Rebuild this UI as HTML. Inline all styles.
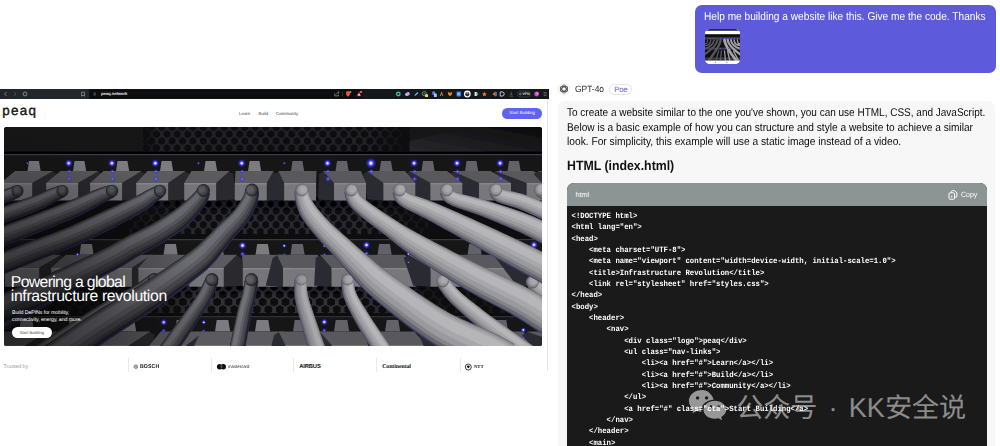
<!DOCTYPE html>
<html lang="en">
<head>
<meta charset="UTF-8">
<title>Chat</title>
<style>
*{box-sizing:border-box;margin:0;padding:0;text-rendering:geometricPrecision}
html,body{width:1000px;height:446px;overflow:hidden;background:#fff}
body{position:relative;font-family:"Liberation Sans","Noto Sans CJK SC",sans-serif;color:#111}
.abs{position:absolute}
.nw{white-space:nowrap}
/* ---------- left: screenshot ---------- */
#shot{left:0;top:89px;width:549px;height:296px;background:#fff;overflow:hidden}
#bar{left:0;top:0;width:548.5px;height:10px;background:#15181b}
#barL{left:0;top:0;width:89px;height:10px;background:#23272b}
#url{left:101px;top:2.2px;font-size:4.2px;color:#e8e8e8;font-weight:bold;letter-spacing:-0.05px}
#logo{left:2.3px;top:14.2px;font-size:13.4px;line-height:16px;letter-spacing:1.3px;color:#111;-webkit-text-stroke:.35px #111}
.nav{top:21.6px;font-size:4.4px;line-height:6px;color:#444}
#cta{left:502.3px;top:19px;width:39.7px;height:10.6px;border-radius:5.3px;background:#6062f0;color:#fff;font-size:4.3px;line-height:10.6px;text-align:center}
#hero{left:3.5px;top:38px;width:538.5px;height:219px;border-radius:2.5px;overflow:hidden;background:#0e0e10}
#hero svg{display:block}
#h1{left:7.3px;top:148.7px;font-size:15.8px;line-height:14.8px;color:#fff;letter-spacing:-0.36px}
#sub{left:8.6px;top:183.1px;font-size:5.3px;line-height:6.7px;color:#fff;letter-spacing:-0.1px}
#hbtn{left:8.1px;top:200px;width:40.6px;height:10.8px;border-radius:5.5px;background:#fff;color:#444;font-size:4.1px;line-height:11px;text-align:center}
#trusted{left:3.4px;top:274.6px;font-size:5.3px;line-height:6px;color:#999}
.div{top:268.5px;width:0.7px;height:14.5px;background:#e9e9e9}
.brand{top:274.7px;font-size:5px;line-height:6.4px;color:#111;font-weight:bold}
#sb{left:547.2px;top:10px;width:0.8px;height:272px;background:#e6e6e6}
/* ---------- right: chat ---------- */
#bubble{left:695px;top:5.3px;width:301px;height:67.9px;border-radius:7px;background:#5d5adb}
#btxt{left:9.4px;top:4.8px;font-size:11.4px;line-height:14px;color:#fff;transform:scaleX(.89);transform-origin:0 0}
#thumb{left:9.6px;top:23.5px;width:35px;height:35px;border-radius:5px;background:#fff;overflow:hidden}
#gpt{left:574.6px;top:81.6px;font-size:9.1px;line-height:15px;color:#222;transform:scaleX(.925);transform-origin:0 0}
#poe{left:609.2px;top:83.5px;width:23.3px;height:11.5px;border-radius:5.75px;border:0.8px solid #e4e4ec;background:#fff;color:#5c5cd0;font-size:7.7px;line-height:9.9px;text-align:center;letter-spacing:-0.25px}
#panel{left:557.5px;top:101px;width:437.5px;height:360px;border-radius:7px;background:#f7f7f7}
#resp{left:9.5px;top:5.1px;font-size:11.25px;line-height:14.4px;color:#0a0a0a}
#h3{left:9.5px;top:56.5px;font-size:13.4px;line-height:16px;font-weight:bold;color:#111;transform:scaleX(.92);transform-origin:0 0}
#code{left:9.5px;top:81.5px;width:419.5px;height:280px;border-radius:7px;background:#1a1a1a;overflow:hidden}
#chead{left:0;top:0;width:100%;height:23.5px;background:#8c9494}
#lang{left:8.5px;top:7px;font-size:7.2px;line-height:9px;color:#fff}
#copy{left:394.2px;top:7.4px;font-size:7.5px;line-height:9px;color:#fff;transform:scaleX(.93);transform-origin:0 0}
#pre{left:4.6px;top:28.4px;font-family:"Liberation Mono",monospace;font-weight:bold;font-size:7.3px;line-height:10.327px;color:#fff;white-space:pre;transform:scaleY(1.1);transform-origin:0 0}
#wm{left:736.2px;top:390.5px;font-size:27.1px;line-height:34px;word-spacing:3.6px;color:rgba(255,255,255,.5);font-family:"Liberation Sans","Noto Sans CJK SC",sans-serif}
</style>
</head>
<body>
<!-- LEFT -->
<div id="shot" class="abs">
  <div id="bar" class="abs"><div id="barL" class="abs"></div>
    <svg class="abs" style="left:0;top:0" width="549" height="10" viewBox="0 0 549 10"><rect x="89.5" y="0.6" width="273" height="8.8" rx="1.5" fill="#0b0d0f"/><path d="M6.4 3.2L4.6 5L6.4 6.8" fill="none" stroke="#9aa0a6" stroke-width=".8"/><path d="M14.2 3.2L16 5L14.2 6.8" fill="none" stroke="#5a6066" stroke-width=".8"/><circle cx="25" cy="5" r="1.9" fill="none" stroke="#9aa0a6" stroke-width=".8"/><path d="M81.6 3.100h2.900v4.100l-1.450-1-1.450 1z" fill="none" stroke="#9aa0a6" stroke-width=".7"/><path d="M93.5 4.100h2.400M93.5 5.900h2.4" stroke="#9aa0a6" stroke-width=".6"/><path d="M334.8 4.300v2.600h3.600v-1.400M336.6 5.200c.3-1.2 1.200-1.8 2.400-1.800M338.2 2.500l1 .9-1 .9" fill="none" stroke="#9aa0a6" stroke-width=".7"/><rect x="342.2" y="3" width=".5" height="4" fill="#555"/><path d="M346 3.200l.8-.9h2.400l.8.900-.3 2.800-1.7 1.700-1.700-1.700z" fill="#fb542b"/><circle cx="350.3" cy="3.1" r="1.1" fill="#8e8e9a"/><path d="M359 2.300l2.7 4.900h-5.400z" fill="#a0205a"/><path d="M359 4.200l1.3 2.300h-2.600z" fill="#fff"/><circle cx="361" cy="2.9" r="1.2" fill="#ff5a2a"/><circle cx="398.3" cy="5" r="2.4" fill="#3fb8a4"/><circle cx="398.3" cy="5" r="1" fill="#15181b"/><ellipse cx="407.4" cy="5.1" rx="2.5" ry="1.8" fill="#b9a7f0" transform="rotate(-20 407.4 5.100)"/><path d="M414.4 6.900l.5-1.5 2.500-2.5 1 1-2.5 2.500z" fill="#35c6f0"/><circle cx="424.3" cy="4.6" r="2.1" fill="none" stroke="#8c978e" stroke-width=".8"/><circle cx="424.3" cy="4.6" r=".8" fill="#2fa84f"/><rect x="425.2" y="5.3" width="2.8" height="2.8" rx=".4" fill="#f1e05a"/><rect x="432.3" y="2.4" width="2.8" height="3.4" rx=".4" fill="#4f8bf0"/><rect x="434" y="4.6" width="2.8" height="3.4" rx=".4" fill="#a8c7fa"/><path d="M439.8 7l1.800-4.4 1.8 4.400-.9 0-.9-2.400-.9 2.400z" fill="#f08a2a"/><path d="M447.8 2.800l2.2 1.3 2.200-1.300-.4 2.800-1.8 1.700-1.800-1.700z" fill="#f6851b"/><rect x="456.5" y="2.6" width="4.6" height="4.8" rx=".8" fill="#2f7df5"/><path d="M458 3.700v2.600M459.9 3.700l-1.5 1.3 1.5 1.3" stroke="#fff" stroke-width=".6" fill="none"/><circle cx="467.3" cy="5" r="3.4" fill="#fff"/><circle cx="467.3" cy="5.2" r="2.1" fill="#2b2f33"/><circle cx="467.3" cy="4.1" r="1" fill="#9aa0a6"/><path d="M474.6 3.100h1.200a1.9 1.9 0 0 1 0 3.800h-1.200z" fill="#e8eaed"/><circle cx="477.3" cy="5" r="1.1" fill="#1fa88a"/><path d="M484.4 2.800l.7 1.5 1.600.2-1.2 1.100.3 1.600-1.400-.8-1.400.8.300-1.600-1.200-1.1 1.600-.2z" fill="#ff7a1a"/><path d="M495.6 2.600v4.800l-3.200-2.400z" fill="#f2662a"/><path d="M495.6 2.600v4.800l1.200-.6v-3.600z" fill="#3b8af0"/><path d="M500.2 2.900h1.900a2.1 2.1 0 0 1 0 4.200h-1.900z" fill="none" stroke="#e8eaed" stroke-width=".8"/><path d="M511.3 2.800v3M510.1 4.800l1.2 1.2 1.200-1.200M509.6 7.200h3.4" fill="none" stroke="#6a7076" stroke-width=".7"/><rect x="517.4" y="2.1" width="12.8" height="5.8" rx="2.9" fill="none" stroke="#4a4f55" stroke-width=".6"/><circle cx="520.3" cy="5" r=".9" fill="none" stroke="#c8ccd0" stroke-width=".5"/><text x="522.2" y="6.3" font-family="Liberation Sans,sans-serif" font-size="3.6" font-weight="bold" fill="#d6d9dc">VPN</text><circle cx="536.6" cy="5" r="2.4" fill="#c04ad8"/><circle cx="537.3" cy="4.5" r="1.2" fill="#ff7ab0"/><path d="M543.6 3.500h3M543.6 5h3M543.6 6.500h3" stroke="#80868c" stroke-width=".6"/></svg>
    <div id="url" class="abs nw">peaq.network</div>
  </div>
  <div id="logo" class="abs nw">peaq</div>
  <div class="abs nav nw" style="left:239px">Learn</div>
  <div class="abs nav nw" style="left:258.5px">Build</div>
  <div class="abs nav nw" style="left:276px">Community</div>
  <div id="cta" class="abs nw">Start Building</div>
  <div id="hero" class="abs">
    <svg width="538.5" height="219" viewBox="3.5 127 538.5 219">
<defs>
<pattern id="hex" width="10.4" height="13.8" patternUnits="userSpaceOnUse" patternTransform="translate(0 134.2)"><rect width="10.4" height="13.8" fill="#242428"/><path d="M3.38 1.95L0.00 3.90L-3.38 1.95L-3.38 -1.95L-0.00 -3.90L3.38 -1.95ZM13.78 1.95L10.40 3.90L7.02 1.95L7.02 -1.95L10.40 -3.90L13.78 -1.95ZM8.58 8.85L5.20 10.80L1.82 8.85L1.82 4.95L5.20 3.00L8.58 4.95ZM3.38 15.75L0.00 17.70L-3.38 15.75L-3.38 11.85L-0.00 9.90L3.38 11.85ZM13.78 15.75L10.40 17.70L7.02 15.75L7.02 11.85L10.40 9.90L13.78 11.85Z" fill="#0a0910"/></pattern>
<pattern id="hexm" width="10.4" height="13.8" patternUnits="userSpaceOnUse" patternTransform="translate(0 204)"><rect width="10.4" height="13.8" fill="#2c2c31"/><path d="M3.38 1.95L0.00 3.90L-3.38 1.95L-3.38 -1.95L-0.00 -3.90L3.38 -1.95ZM13.78 1.95L10.40 3.90L7.02 1.95L7.02 -1.95L10.40 -3.90L13.78 -1.95ZM8.58 8.85L5.20 10.80L1.82 8.85L1.82 4.95L5.20 3.00L8.58 4.95ZM3.38 15.75L0.00 17.70L-3.38 15.75L-3.38 11.85L-0.00 9.90L3.38 11.85ZM13.78 15.75L10.40 17.70L7.02 15.75L7.02 11.85L10.40 9.90L13.78 11.85Z" fill="#08080c"/></pattern>
<pattern id="hex2" width="11.4" height="15" patternUnits="userSpaceOnUse" patternTransform="translate(0 287)"><rect width="11.4" height="15" fill="#303035"/><path d="M3.72 2.15L0.00 4.30L-3.72 2.15L-3.72 -2.15L-0.00 -4.30L3.72 -2.15ZM15.12 2.15L11.40 4.30L7.68 2.15L7.68 -2.15L11.40 -4.30L15.12 -2.15ZM9.42 9.65L5.70 11.80L1.98 9.65L1.98 5.35L5.70 3.20L9.42 5.35ZM3.72 17.15L0.00 19.30L-3.72 17.15L-3.72 12.85L-0.00 10.70L3.72 12.85ZM15.12 17.15L11.40 19.30L7.68 17.15L7.68 12.85L11.40 10.70L15.12 12.85Z" fill="#070709"/></pattern>
<radialGradient id="led"><stop offset="0" stop-color="#fff"/><stop offset=".22" stop-color="#c9c9ff"/><stop offset=".45" stop-color="#4a45ff" stop-opacity=".9"/><stop offset="1" stop-color="#2a20ff" stop-opacity="0"/></radialGradient>
<radialGradient id="ledd"><stop offset="0" stop-color="#99a"/><stop offset=".4" stop-color="#4a45ff" stop-opacity=".7"/><stop offset="1" stop-color="#2a20ff" stop-opacity="0"/></radialGradient>
<linearGradient id="topfade" x1="0" x2="1"><stop offset="0" stop-color="#0d0d0f"/><stop offset=".06" stop-color="#0d0d0f" stop-opacity="0"/><stop offset=".85" stop-color="#0d0d0f" stop-opacity="0.1"/><stop offset="1" stop-color="#0d0d0f"/></linearGradient>
<linearGradient id="tr" x1="0" x2="1" y1="1" y2="0"><stop offset="0" stop-color="#28282c"/><stop offset="1" stop-color="#0b0b0d"/></linearGradient>
<linearGradient id="vsh" x1="0" x2="0" y1="0" y2="1"><stop offset="0" stop-color="#000" stop-opacity=".55"/><stop offset=".5" stop-color="#000" stop-opacity="0"/></linearGradient>
<radialGradient id="lv" gradientUnits="userSpaceOnUse" cx="3" cy="330" r="200"><stop offset="0" stop-color="#000" stop-opacity=".6"/><stop offset=".5" stop-color="#000" stop-opacity=".35"/><stop offset="1" stop-color="#000" stop-opacity="0"/></radialGradient>
<linearGradient id="hsh" x1="0" x2="1"><stop offset="0" stop-color="#08080a" stop-opacity=".95"/><stop offset=".22" stop-color="#08080a" stop-opacity=".8"/><stop offset=".36" stop-color="#08080a" stop-opacity="0"/><stop offset=".66" stop-color="#08080a" stop-opacity="0"/><stop offset=".8" stop-color="#08080a" stop-opacity=".8"/><stop offset="1" stop-color="#08080a" stop-opacity=".95"/></linearGradient>
<filter id="b" x="-5%" y="-5%" width="110%" height="110%"><feGaussianBlur stdDeviation="0.75"/></filter>
</defs>
<g filter="url(#b)">
<rect x="0" y="120" width="550" height="230" fill="#0d0d0f"/>
<rect x="3" y="127" width="540" height="27" fill="#161618"/>
<rect x="143" y="127" width="266" height="25" fill="url(#hex)"/>
<rect x="143" y="127" width="266" height="25" fill="url(#topfade)"/>
<path d="M409 152L409 141L470 127L542 127L542 152Z" fill="url(#tr)"/>
<rect x="3" y="151.5" width="540" height="2.4" fill="#050506"/>
<rect x="3" y="154" width="540" height="1.6" fill="#3c3c42"/>
<rect x="3" y="155.6" width="540" height="45" fill="#121214"/>
<rect x="3" y="197" width="540" height="38" fill="url(#hexm)"/>
<rect x="3" y="197" width="540" height="38" fill="url(#vsh)"/>
<rect x="3" y="197" width="540" height="38" fill="url(#hsh)"/>
<rect x="3" y="234" width="540" height="5" fill="#08080a"/>
<rect x="3" y="239" width="540" height="1.6" fill="#38383e"/>
<rect x="3" y="240.6" width="540" height="42" fill="#131316"/>
<rect x="3" y="279.5" width="540" height="34" fill="url(#hex2)"/>
<rect x="3" y="279.5" width="540" height="34" fill="url(#vsh)"/>
<rect x="3" y="279.5" width="540" height="34" fill="url(#hsh)" opacity=".8"/>
<rect x="3" y="313" width="540" height="3.5" fill="#08080a"/>
<rect x="3" y="316.2" width="540" height="1.4" fill="#38383e"/>
<rect x="3" y="317.6" width="540" height="30" fill="#141417"/>
<path d="M18.5 331.5L20.2 320L31.8 320L33.7 331.5Z" fill="#7b7b80"/><path d="M46.7 331.5L52.5 334.9L47.9 364.4L24.9 365.4L24.9 345.3Z" fill="#29292e"/><path d="M4.2 331.5L47.8 331.5L24.9 345.3L-11.9 345.3Z" fill="#5a5a5f"/><path d="M-11.9 345.3L24.9 345.3L24.9 365.4L-11.9 365.4Z" fill="#747479"/><path d="M-11.9 345.3L24.9 345.3L24.9 346.9L-11.9 346.9Z" fill="#9a9a9e" opacity=".45"/>
<path d="M67.5 331.5L69.2 320L80.8 320L82.7 331.5Z" fill="#7b7b80"/><path d="M95.7 331.5L101.5 334.9L97.3 364.4L74.3 365.4L74.3 345.3Z" fill="#29292e"/><path d="M53.2 331.5L96.8 331.5L74.3 345.3L37.5 345.3Z" fill="#5a5a5f"/><path d="M37.5 345.3L74.3 345.3L74.3 365.4L37.5 365.4Z" fill="#747479"/><path d="M37.5 345.3L74.3 345.3L74.3 346.9L37.5 346.9Z" fill="#9a9a9e" opacity=".45"/>
<path d="M120.5 331.5L122.2 320L133.8 320L135.7 331.5Z" fill="#7b7b80"/><path d="M148.7 331.5L154.4 334.9L151.6 364.4L128.6 365.4L128.6 345.3Z" fill="#29292e"/><path d="M106.2 331.5L149.8 331.5L128.6 345.3L91.8 345.3Z" fill="#5a5a5f"/><path d="M91.8 345.3L128.6 345.3L128.6 365.4L91.8 365.4Z" fill="#747479"/><path d="M91.8 345.3L128.6 345.3L128.6 346.9L91.8 346.9Z" fill="#9a9a9e" opacity=".45"/>
<path d="M174.5 331.5L176.2 320L187.8 320L189.7 331.5Z" fill="#7b7b80"/><path d="M202.7 331.5L208.4 334.9L208.9 364.4L185.9 365.4L185.9 345.3Z" fill="#29292e"/><path d="M160.2 331.5L203.8 331.5L185.9 345.3L149.1 345.3Z" fill="#5a5a5f"/><path d="M149.1 345.3L185.9 345.3L185.9 365.4L149.1 365.4Z" fill="#747479"/><path d="M149.1 345.3L185.9 345.3L185.9 346.9L149.1 346.9Z" fill="#9a9a9e" opacity=".45"/>
<path d="M214.5 331.5L216.2 320L227.8 320L229.7 331.5Z" fill="#7b7b80"/><path d="M242.7 331.5L248.4 334.9L253.8 364.4L230.8 365.4L230.8 345.3Z" fill="#29292e"/><path d="M200.2 331.5L243.8 331.5L230.8 345.3L194 345.3Z" fill="#5a5a5f"/><path d="M194 345.3L230.8 345.3L230.8 365.4L194 365.4Z" fill="#747479"/><path d="M194 345.3L230.8 345.3L230.8 346.9L194 346.9Z" fill="#9a9a9e" opacity=".45"/>
<path d="M254.5 331.5L256.2 320L267.8 320L269.7 331.5Z" fill="#7b7b80"/><path d="M282.7 331.5L288.4 334.9L300.8 364.4L277.8 365.4L277.8 345.3Z" fill="#29292e"/><path d="M240.2 331.5L283.9 331.5L277.8 345.3L241 345.3Z" fill="#5a5a5f"/><path d="M241 345.3L277.8 345.3L277.8 365.4L241 365.4Z" fill="#747479"/><path d="M241 345.3L277.8 345.3L277.8 346.9L241 346.9Z" fill="#9a9a9e" opacity=".45"/>
<path d="M292.5 331.5L294.2 320L305.8 320L307.7 331.5Z" fill="#626267"/><path d="M279.3 331.5L273.6 334.9L266.5 364.4L284.9 365.4L284.9 345.3Z" fill="#2b2b30"/><path d="M278.1 331.5L321.9 331.5L321.7 345.3L284.9 345.3Z" fill="#58585d"/><path d="M284.9 345.3L321.7 345.3L321.7 365.4L284.9 365.4Z" fill="#77777b"/><path d="M284.9 345.3L321.7 345.3L321.7 346.9L284.9 346.9Z" fill="#9a9a9e" opacity=".45"/>
<path d="M333.5 331.5L335.2 320L346.8 320L348.7 331.5Z" fill="#626267"/><path d="M320.3 331.5L314.6 334.9L312.9 364.4L331.3 365.4L331.3 345.3Z" fill="#2b2b30"/><path d="M319.1 331.5L362.9 331.5L368.1 345.3L331.3 345.3Z" fill="#58585d"/><path d="M331.3 345.3L368.1 345.3L368.1 365.4L331.3 365.4Z" fill="#77777b"/><path d="M331.3 345.3L368.1 345.3L368.1 346.9L331.3 346.9Z" fill="#9a9a9e" opacity=".45"/>
<path d="M384.5 331.5L386.2 320L397.8 320L399.7 331.5Z" fill="#626267"/><path d="M371.3 331.5L365.6 334.9L370.6 364.4L389 365.4L389 345.3Z" fill="#2b2b30"/><path d="M370.1 331.5L413.9 331.5L425.8 345.3L389 345.3Z" fill="#58585d"/><path d="M389 345.3L425.8 345.3L425.8 365.4L389 365.4Z" fill="#77777b"/><path d="M389 345.3L425.8 345.3L425.8 346.9L389 346.9Z" fill="#9a9a9e" opacity=".45"/>
<path d="M437.5 331.5L439.2 320L450.8 320L452.7 331.5Z" fill="#626267"/><path d="M424.3 331.5L418.6 334.9L430.6 364.4L449 365.4L449 345.3Z" fill="#2b2b30"/><path d="M423.1 331.5L466.9 331.5L485.8 345.3L449 345.3Z" fill="#58585d"/><path d="M449 345.3L485.8 345.3L485.8 365.4L449 365.4Z" fill="#77777b"/><path d="M449 345.3L485.8 345.3L485.8 346.9L449 346.9Z" fill="#9a9a9e" opacity=".45"/>
<path d="M492.5 331.5L494.2 320L505.8 320L507.7 331.5Z" fill="#626267"/><path d="M479.3 331.5L473.6 334.9L492.9 364.4L511.3 365.4L511.3 345.3Z" fill="#2b2b30"/><path d="M478.1 331.5L521.9 331.5L548.1 345.3L511.3 345.3Z" fill="#58585d"/><path d="M511.3 345.3L548.1 345.3L548.1 365.4L511.3 365.4Z" fill="#77777b"/><path d="M511.3 345.3L548.1 345.3L548.1 346.9L511.3 346.9Z" fill="#9a9a9e" opacity=".45"/>
<path d="M540.5 331.5L542.2 320L553.8 320L555.7 331.5Z" fill="#626267"/><path d="M527.3 331.5L521.5 334.9L547.2 364.4L565.6 365.4L565.6 345.3Z" fill="#2b2b30"/><path d="M526.1 331.5L569.9 331.5L602.4 345.3L565.6 345.3Z" fill="#58585d"/><path d="M565.6 345.3L602.4 345.3L602.4 365.4L565.6 365.4Z" fill="#77777b"/><path d="M565.6 345.3L602.4 345.3L602.4 346.9L565.6 346.9Z" fill="#9a9a9e" opacity=".45"/>
<path d="M33 254.8L34.6 244L45.4 244L47.2 254.8Z" fill="#7b7b80"/><path d="M59.4 254.8L64.8 258L60.3 285.7L38.7 286.7L38.7 267.8Z" fill="#29292e"/><path d="M19.5 254.8L60.5 254.8L38.7 267.8L4.2 267.8Z" fill="#5a5a5f"/><path d="M4.2 267.8L38.7 267.8L38.7 286.7L4.2 286.7Z" fill="#747479"/><path d="M4.2 267.8L38.7 267.8L38.7 269.4L4.2 269.4Z" fill="#9a9a9e" opacity=".45"/>
<path d="M79 254.8L80.6 244L91.4 244L93.2 254.8Z" fill="#7b7b80"/><path d="M105.4 254.8L110.8 258L106.8 285.7L85.2 286.7L85.2 267.8Z" fill="#29292e"/><path d="M65.5 254.8L106.5 254.8L85.2 267.8L50.7 267.8Z" fill="#5a5a5f"/><path d="M50.7 267.8L85.2 267.8L85.2 286.7L50.7 286.7Z" fill="#747479"/><path d="M50.7 267.8L85.2 267.8L85.2 269.4L50.7 269.4Z" fill="#9a9a9e" opacity=".45"/>
<path d="M124 254.8L125.6 244L136.4 244L138.2 254.8Z" fill="#7b7b80"/><path d="M150.4 254.8L155.8 258L153 285.7L131.4 286.7L131.4 267.8Z" fill="#29292e"/><path d="M110.5 254.8L151.5 254.8L131.4 267.8L96.8 267.8Z" fill="#5a5a5f"/><path d="M96.8 267.8L131.4 267.8L131.4 286.7L96.8 286.7Z" fill="#747479"/><path d="M96.8 267.8L131.4 267.8L131.4 269.4L96.8 269.4Z" fill="#9a9a9e" opacity=".45"/>
<path d="M163 254.8L164.6 244L175.4 244L177.2 254.8Z" fill="#7b7b80"/><path d="M189.4 254.8L194.8 258L194.1 285.7L172.5 286.7L172.5 267.8Z" fill="#29292e"/><path d="M149.5 254.8L190.5 254.8L172.5 267.8L137.9 267.8Z" fill="#5a5a5f"/><path d="M137.9 267.8L172.5 267.8L172.5 286.7L137.9 286.7Z" fill="#747479"/><path d="M137.9 267.8L172.5 267.8L172.5 269.4L137.9 269.4Z" fill="#9a9a9e" opacity=".45"/>
<path d="M209 254.8L210.6 244L221.4 244L223.2 254.8Z" fill="#7b7b80"/><path d="M235.4 254.8L240.8 258L244.9 285.7L223.3 286.7L223.3 267.8Z" fill="#29292e"/><path d="M195.5 254.8L236.5 254.8L223.3 267.8L188.7 267.8Z" fill="#5a5a5f"/><path d="M188.7 267.8L223.3 267.8L223.3 286.7L188.7 286.7Z" fill="#747479"/><path d="M188.7 267.8L223.3 267.8L223.3 269.4L188.7 269.4Z" fill="#9a9a9e" opacity=".45"/>
<path d="M255 254.8L256.6 244L267.4 244L269.2 254.8Z" fill="#7b7b80"/><path d="M281.4 254.8L286.8 258L298.4 285.7L276.8 286.7L276.8 267.8Z" fill="#29292e"/><path d="M241.5 254.8L282.5 254.8L276.8 267.8L242.3 267.8Z" fill="#5a5a5f"/><path d="M242.3 267.8L276.8 267.8L276.8 286.7L242.3 286.7Z" fill="#747479"/><path d="M242.3 267.8L276.8 267.8L276.8 269.4L242.3 269.4Z" fill="#9a9a9e" opacity=".45"/>
<path d="M290 254.8L291.6 244L302.4 244L304.2 254.8Z" fill="#626267"/><path d="M277.6 254.8L272.2 258L265.2 285.7L282.5 286.7L282.5 267.8Z" fill="#2b2b30"/><path d="M276.5 254.8L317.5 254.8L317.1 267.8L282.5 267.8Z" fill="#58585d"/><path d="M282.5 267.8L317.1 267.8L317.1 286.7L282.5 286.7Z" fill="#77777b"/><path d="M282.5 267.8L317.1 267.8L317.1 269.4L282.5 269.4Z" fill="#9a9a9e" opacity=".45"/>
<path d="M333 254.8L334.6 244L345.4 244L347.2 254.8Z" fill="#626267"/><path d="M320.6 254.8L315.2 258L313.6 285.7L330.9 286.7L330.9 267.8Z" fill="#2b2b30"/><path d="M319.5 254.8L360.5 254.8L365.5 267.8L330.9 267.8Z" fill="#58585d"/><path d="M330.9 267.8L365.5 267.8L365.5 286.7L330.9 286.7Z" fill="#77777b"/><path d="M330.9 267.8L365.5 267.8L365.5 269.4L330.9 269.4Z" fill="#9a9a9e" opacity=".45"/>
<path d="M377 254.8L378.6 244L389.4 244L391.2 254.8Z" fill="#626267"/><path d="M364.6 254.8L359.2 258L363.2 285.7L380.5 286.7L380.5 267.8Z" fill="#2b2b30"/><path d="M363.5 254.8L404.5 254.8L415 267.8L380.5 267.8Z" fill="#58585d"/><path d="M380.5 267.8L415 267.8L415 286.7L380.5 286.7Z" fill="#77777b"/><path d="M380.5 267.8L415 267.8L415 269.4L380.5 269.4Z" fill="#9a9a9e" opacity=".45"/>
<path d="M421 254.8L422.6 244L433.4 244L435.2 254.8Z" fill="#626267"/><path d="M408.6 254.8L403.2 258L412.7 285.7L430 286.7L430 267.8Z" fill="#2b2b30"/><path d="M407.5 254.8L448.5 254.8L464.6 267.8L430 267.8Z" fill="#58585d"/><path d="M430 267.8L464.6 267.8L464.6 286.7L430 286.7Z" fill="#77777b"/><path d="M430 267.8L464.6 267.8L464.6 269.4L430 269.4Z" fill="#9a9a9e" opacity=".45"/>
<path d="M467 254.8L468.6 244L479.4 244L481.2 254.8Z" fill="#626267"/><path d="M454.6 254.8L449.2 258L464.5 285.7L481.8 286.7L481.8 267.8Z" fill="#2b2b30"/><path d="M453.5 254.8L494.5 254.8L516.4 267.8L481.8 267.8Z" fill="#58585d"/><path d="M481.8 267.8L516.4 267.8L516.4 286.7L481.8 286.7Z" fill="#77777b"/><path d="M481.8 267.8L516.4 267.8L516.4 269.4L481.8 269.4Z" fill="#9a9a9e" opacity=".45"/>
<path d="M513 254.8L514.6 244L525.4 244L527.2 254.8Z" fill="#626267"/><path d="M500.6 254.8L495.2 258L516.3 285.7L533.6 286.7L533.6 267.8Z" fill="#2b2b30"/><path d="M499.5 254.8L540.5 254.8L568.1 267.8L533.6 267.8Z" fill="#58585d"/><path d="M533.6 267.8L568.1 267.8L568.1 286.7L533.6 286.7Z" fill="#77777b"/><path d="M533.6 267.8L568.1 267.8L568.1 269.4L533.6 269.4Z" fill="#9a9a9e" opacity=".45"/>
<path d="M27 171L28.5 161L38.5 161L40.2 171Z" fill="#7b7b80"/><path d="M51.5 171L56.5 174L51.8 199.5L31.8 200.5L31.8 183Z" fill="#29292e"/><path d="M14.5 171L52.5 171L31.8 183L-0.2 183Z" fill="#5a5a5f"/><path d="M-0.2 183L31.8 183L31.8 200.5L-0.2 200.5Z" fill="#747479"/><path d="M-0.2 183L31.8 183L31.8 184.6L-0.2 184.6Z" fill="#9a9a9e" opacity=".45"/>
<path d="M72.5 171L74 161L84 161L85.7 171Z" fill="#7b7b80"/><path d="M97 171L102 174L97.7 199.5L77.7 200.5L77.7 183Z" fill="#29292e"/><path d="M60 171L98 171L77.7 183L45.7 183Z" fill="#5a5a5f"/><path d="M45.7 183L77.7 183L77.7 200.5L45.7 200.5Z" fill="#747479"/><path d="M45.7 183L77.7 183L77.7 184.6L45.7 184.6Z" fill="#9a9a9e" opacity=".45"/>
<path d="M115.5 171L117 161L127 161L128.7 171Z" fill="#7b7b80"/><path d="M140 171L145 174L141.6 199.5L121.6 200.5L121.6 183Z" fill="#29292e"/><path d="M103 171L141 171L121.6 183L89.6 183Z" fill="#5a5a5f"/><path d="M89.6 183L121.6 183L121.6 200.5L89.6 200.5Z" fill="#747479"/><path d="M89.6 183L121.6 183L121.6 184.6L89.6 184.6Z" fill="#9a9a9e" opacity=".45"/>
<path d="M159.5 171L161 161L171 161L172.7 171Z" fill="#7b7b80"/><path d="M184 171L189 174L187.7 199.5L167.7 200.5L167.7 183Z" fill="#29292e"/><path d="M147 171L185 171L167.7 183L135.7 183Z" fill="#5a5a5f"/><path d="M135.7 183L167.7 183L167.7 200.5L135.7 200.5Z" fill="#747479"/><path d="M135.7 183L167.7 183L167.7 184.6L135.7 184.6Z" fill="#9a9a9e" opacity=".45"/>
<path d="M203.5 171L205 161L215 161L216.7 171Z" fill="#7b7b80"/><path d="M228 171L233 174L235.7 199.5L215.7 200.5L215.7 183Z" fill="#29292e"/><path d="M191 171L229 171L215.7 183L183.7 183Z" fill="#5a5a5f"/><path d="M183.7 183L215.7 183L215.7 200.5L183.7 200.5Z" fill="#747479"/><path d="M183.7 183L215.7 183L215.7 184.6L183.7 184.6Z" fill="#9a9a9e" opacity=".45"/>
<path d="M247.5 171L249 161L259 161L260.7 171Z" fill="#7b7b80"/><path d="M272 171L277 174L286.3 199.5L266.3 200.5L266.3 183Z" fill="#29292e"/><path d="M235 171L273 171L266.3 183L234.3 183Z" fill="#5a5a5f"/><path d="M234.3 183L266.3 183L266.3 200.5L234.3 200.5Z" fill="#747479"/><path d="M234.3 183L266.3 183L266.3 184.6L234.3 184.6Z" fill="#9a9a9e" opacity=".45"/>
<path d="M507 171L508.5 161L518.5 161L520.2 171Z" fill="#626267"/><path d="M495.5 171L490.5 174L510.1 199.5L526.1 200.5L526.1 183Z" fill="#2b2b30"/><path d="M494.5 171L532.5 171L558.1 183L526.1 183Z" fill="#58585d"/><path d="M526.1 183L558.1 183L558.1 200.5L526.1 200.5Z" fill="#77777b"/><path d="M526.1 183L558.1 183L558.1 184.6L526.1 184.6Z" fill="#9a9a9e" opacity=".45"/>
<path d="M464.5 171L466 161L476 161L477.7 171Z" fill="#626267"/><path d="M453 171L448 174L462.5 199.5L478.5 200.5L478.5 183Z" fill="#2b2b30"/><path d="M452 171L490 171L510.5 183L478.5 183Z" fill="#58585d"/><path d="M478.5 183L510.5 183L510.5 200.5L478.5 200.5Z" fill="#77777b"/><path d="M478.5 183L510.5 183L510.5 184.6L478.5 184.6Z" fill="#9a9a9e" opacity=".45"/>
<path d="M421 171L422.5 161L432.5 161L434.2 171Z" fill="#626267"/><path d="M409.5 171L404.5 174L413.8 199.5L429.8 200.5L429.8 183Z" fill="#2b2b30"/><path d="M408.5 171L446.5 171L461.8 183L429.8 183Z" fill="#58585d"/><path d="M429.8 183L461.8 183L461.8 200.5L429.8 200.5Z" fill="#77777b"/><path d="M429.8 183L461.8 183L461.8 184.6L429.8 184.6Z" fill="#9a9a9e" opacity=".45"/>
<path d="M379 171L380.5 161L390.5 161L392.2 171Z" fill="#626267"/><path d="M367.5 171L362.5 174L366.8 199.5L382.8 200.5L382.8 183Z" fill="#2b2b30"/><path d="M366.5 171L404.5 171L414.8 183L382.8 183Z" fill="#58585d"/><path d="M382.8 183L414.8 183L414.8 200.5L382.8 200.5Z" fill="#77777b"/><path d="M382.8 183L414.8 183L414.8 184.6L382.8 184.6Z" fill="#9a9a9e" opacity=".45"/>
<path d="M335 171L336.5 161L346.5 161L348.2 171Z" fill="#626267"/><path d="M323.5 171L318.5 174L317.5 199.5L333.5 200.5L333.5 183Z" fill="#2b2b30"/><path d="M322.5 171L360.5 171L365.5 183L333.5 183Z" fill="#58585d"/><path d="M333.5 183L365.5 183L365.5 200.5L333.5 200.5Z" fill="#77777b"/><path d="M333.5 183L365.5 183L365.5 184.6L333.5 184.6Z" fill="#9a9a9e" opacity=".45"/>
<path d="M290.5 171L292 161L302 161L303.7 171Z" fill="#626267"/><path d="M279 171L274 174L267.6 199.5L283.6 200.5L283.6 183Z" fill="#2b2b30"/><path d="M278 171L316 171L315.6 183L283.6 183Z" fill="#58585d"/><path d="M283.6 183L315.6 183L315.6 200.5L283.6 200.5Z" fill="#77777b"/><path d="M283.6 183L315.6 183L315.6 184.6L283.6 184.6Z" fill="#9a9a9e" opacity=".45"/>
<path d="M549.5 171L551 161L561 161L562.7 171Z" fill="#626267"/><path d="M538 171L533 174L557.7 199.5L573.7 200.5L573.7 183Z" fill="#2b2b30"/><path d="M537 171L575 171L605.7 183L573.7 183Z" fill="#58585d"/><path d="M573.7 183L605.7 183L605.7 200.5L573.7 200.5Z" fill="#77777b"/><path d="M573.7 183L605.7 183L605.7 184.6L573.7 184.6Z" fill="#9a9a9e" opacity=".45"/>
<circle cx="68.2" cy="163.2" r="4.2" fill="url(#led)"/>
<circle cx="68.7" cy="171.5" r="2.6" fill="url(#ledd)"/>
<circle cx="68.7" cy="179" r="3" fill="url(#ledd)"/>
<circle cx="111.4" cy="163.2" r="4.2" fill="url(#led)"/>
<circle cx="111.9" cy="171.5" r="2.6" fill="url(#ledd)"/>
<circle cx="111.9" cy="179" r="3" fill="url(#ledd)"/>
<circle cx="154.8" cy="163.2" r="4.2" fill="url(#led)"/>
<circle cx="155.3" cy="171.5" r="2.6" fill="url(#ledd)"/>
<circle cx="155.3" cy="179" r="3" fill="url(#ledd)"/>
<circle cx="241.2" cy="163.2" r="4.2" fill="url(#led)"/>
<circle cx="241.7" cy="171.5" r="2.6" fill="url(#ledd)"/>
<circle cx="241.7" cy="179" r="3" fill="url(#ledd)"/>
<circle cx="327" cy="163.2" r="4.2" fill="url(#led)"/>
<circle cx="327.5" cy="171.5" r="2.6" fill="url(#ledd)"/>
<circle cx="327.5" cy="179" r="3" fill="url(#ledd)"/>
<circle cx="413.6" cy="163.2" r="4.2" fill="url(#led)"/>
<circle cx="414.1" cy="171.5" r="2.6" fill="url(#ledd)"/>
<circle cx="414.1" cy="179" r="3" fill="url(#ledd)"/>
<circle cx="456.5" cy="163.2" r="4.2" fill="url(#led)"/>
<circle cx="457" cy="171.5" r="2.6" fill="url(#ledd)"/>
<circle cx="457" cy="179" r="3" fill="url(#ledd)"/>
<circle cx="499.6" cy="163.2" r="4.2" fill="url(#led)"/>
<circle cx="500.1" cy="171.5" r="2.6" fill="url(#ledd)"/>
<circle cx="500.1" cy="179" r="3" fill="url(#ledd)"/>
<circle cx="370.4" cy="163.2" r="5.6" fill="url(#led)"/>
<circle cx="370.9" cy="171.5" r="3" fill="url(#ledd)"/>
<circle cx="27" cy="163.2" r="1.8" fill="url(#ledd)"/>
<circle cx="283.8" cy="163.2" r="1.8" fill="url(#ledd)"/>
<circle cx="198" cy="163.2" r="1.8" fill="url(#ledd)"/>
<circle cx="242" cy="245.5" r="4.2" fill="url(#led)"/>
<circle cx="242" cy="254" r="2.9" fill="url(#ledd)"/>
<circle cx="366" cy="245" r="4" fill="url(#led)"/>
<circle cx="366" cy="253.5" r="2.8" fill="url(#ledd)"/>
<circle cx="533.5" cy="244.8" r="4.2" fill="url(#led)"/>
<circle cx="533.5" cy="253.3" r="2.9" fill="url(#ledd)"/>
<circle cx="200.5" cy="244.3" r="2.2" fill="url(#led)"/>
<circle cx="200.5" cy="252.8" r="1.5" fill="url(#ledd)"/>
<circle cx="283.7" cy="245.8" r="2.2" fill="url(#led)"/>
<circle cx="283.7" cy="254.3" r="1.5" fill="url(#ledd)"/>
<circle cx="324" cy="245.8" r="2.2" fill="url(#led)"/>
<circle cx="324" cy="254.3" r="1.5" fill="url(#ledd)"/>
<circle cx="408" cy="253.8" r="2.4" fill="url(#led)"/>
<circle cx="408" cy="262.3" r="1.7" fill="url(#ledd)"/>
<circle cx="116.5" cy="243.8" r="2" fill="url(#led)"/>
<circle cx="116.5" cy="252.3" r="1.4" fill="url(#ledd)"/>
<circle cx="77" cy="254.5" r="2.4" fill="url(#led)"/>
<circle cx="77" cy="263" r="1.7" fill="url(#ledd)"/>
<circle cx="163.2" cy="322.3" r="3.6" fill="url(#led)"/>
<circle cx="163.2" cy="330.8" r="2.7" fill="url(#ledd)"/>
<circle cx="203.3" cy="322.3" r="2.4" fill="url(#led)"/>
<circle cx="203.3" cy="330.8" r="1.8" fill="url(#ledd)"/>
<circle cx="323.8" cy="322" r="3.6" fill="url(#led)"/>
<circle cx="323.8" cy="330.5" r="2.7" fill="url(#ledd)"/>
<circle cx="522.8" cy="330" r="2.8" fill="url(#led)"/>
<circle cx="522.8" cy="338.5" r="2.1" fill="url(#ledd)"/>
<circle cx="84" cy="330.5" r="2.4" fill="url(#led)"/>
<circle cx="84" cy="339" r="1.8" fill="url(#ledd)"/>
<path d="M68.6 274.2L67.3 275L65.9 276L64.3 277.1L62.5 278.3L60.5 279.6L58.2 281.1L55.7 282.7L52.9 284.4L49.9 286.2L46.5 288.1L42.4 290.4L37.5 293L31.9 296L26 299.1L19.9 302.3L14 305.4L8.4 308.3L3.4 311L-0.8 313.2L-4 314.8L4.8 330.6L7.8 328.8L11.9 326.4L16.8 323.5L22.2 320.3L28 316.8L33.9 313.3L39.7 309.9L45.2 306.6L50.1 303.6L54.2 301L57.7 298.7L60.8 296.5L63.7 294.5L66.2 292.6L68.5 290.9L70.5 289.3L72.2 287.9L73.7 286.6L75 285.6L76.1 284.8Z" fill="#2c2a66"/><path d="M68.3 273.7L67 274.5L65.5 275.5L63.9 276.6L62.1 277.8L60.1 279.1L57.9 280.6L55.4 282.2L52.6 283.8L49.5 285.6L46.2 287.6L42.1 289.8L37.1 292.4L31.6 295.4L25.7 298.5L19.6 301.7L13.6 304.8L8 307.7L3 310.3L-1.2 312.5L-4.4 314.1L4.4 329.9L7.4 328.1L11.5 325.7L16.4 322.8L21.8 319.6L27.7 316.2L33.6 312.7L39.4 309.3L44.8 306L49.7 303L53.8 300.4L57.3 298.2L60.5 296L63.3 294L65.9 292.1L68.1 290.4L70.1 288.8L71.9 287.4L73.4 286.2L74.6 285.2L75.7 284.3Z" fill="#232327"/><path d="M68.4 273.9L67.1 274.7L65.6 275.7L64 276.8L62.2 278L60.2 279.3L58 280.8L55.5 282.3L52.7 284L49.7 285.8L46.3 287.8L42.2 290L37.3 292.7L31.7 295.6L25.8 298.7L19.7 301.9L13.8 305L8.2 307.9L3.1 310.5L-1.1 312.7L-4.2 314.4L3.5 328.2L6.5 326.4L10.6 324.1L15.5 321.2L21 318.1L26.8 314.7L32.8 311.2L38.6 307.8L44 304.6L48.9 301.6L53 299.1L56.5 296.9L59.7 294.7L62.5 292.8L65 290.9L67.3 289.2L69.3 287.6L71.1 286.3L72.6 285.1L73.9 284L75 283.2Z" fill="#353539"/><path d="M68.6 274.2L67.3 275L65.9 276L64.3 277.1L62.5 278.3L60.5 279.7L58.2 281.1L55.7 282.7L53 284.4L49.9 286.2L46.5 288.2L42.4 290.4L37.5 293.1L31.9 296L26 299.2L20 302.3L14 305.4L8.4 308.4L3.4 311L-0.8 313.2L-4 314.9L2.5 326.5L5.6 324.7L9.7 322.4L14.6 319.6L20.1 316.4L25.9 313.1L31.9 309.7L37.7 306.3L43.2 303.1L48.1 300.2L52.2 297.7L55.7 295.5L58.8 293.4L61.6 291.5L64.2 289.6L66.4 288L68.4 286.4L70.2 285.1L71.7 283.9L73 282.9L74.1 282Z" fill="#434348"/><path d="M69 274.7L67.7 275.5L66.3 276.5L64.7 277.6L62.9 278.9L60.9 280.2L58.6 281.7L56.1 283.3L53.4 285L50.3 286.8L46.9 288.8L42.8 291.1L37.9 293.7L32.3 296.7L26.4 299.9L20.4 303.1L14.4 306.2L8.8 309.1L3.8 311.8L-0.4 314L-3.5 315.6L1 323.8L4.1 322.1L8.2 319.8L13.2 317L18.7 313.9L24.6 310.6L30.5 307.3L36.4 303.9L41.9 300.8L46.8 297.9L50.9 295.5L54.3 293.4L57.5 291.3L60.3 289.4L62.8 287.7L65.1 286.1L67.1 284.6L68.8 283.2L70.4 282.1L71.7 281.1L72.9 280.2Z" fill="#54545a"/><path d="M69.4 275.3L68.1 276.1L66.7 277.1L65.1 278.2L63.3 279.5L61.3 280.8L59.1 282.3L56.6 283.9L53.8 285.7L50.7 287.5L47.3 289.5L43.2 291.8L38.3 294.5L32.8 297.5L26.8 300.6L20.8 303.8L14.9 307L9.3 310L4.3 312.6L0.1 314.8L-3.1 316.5L-0.4 321.2L2.7 319.5L6.8 317.2L11.8 314.5L17.3 311.4L23.2 308.2L29.2 304.9L35.1 301.6L40.6 298.5L45.5 295.7L49.6 293.4L53 291.3L56.1 289.3L59 287.5L61.5 285.8L63.7 284.2L65.7 282.7L67.5 281.4L69.1 280.3L70.4 279.3L71.6 278.5Z" fill="#66666d"/><circle cx="72" cy="279" r="6.5" fill="#232327"/><circle cx="71.7" cy="278.5" r="5.7" fill="#353539"/><circle cx="71.4" cy="278.1" r="4.8" fill="#434348"/><circle cx="70.9" cy="277.5" r="3.4" fill="#54545a"/>
<path d="M150.5 274.8L149.4 275.6L148 276.6L146.4 277.7L144.6 279L142.6 280.4L140.5 281.8L138.3 283.3L136.1 284.8L133.9 286.2L131.6 287.6L129.5 288.8L127.5 289.9L125.4 290.9L123.3 292L120.9 293.2L118.3 294.5L115.3 296L112 297.8L108.3 300L104 302.5L99 305.6L93.1 309.3L86.5 313.4L79.6 317.8L72.4 322.3L65.4 326.8L58.6 331.2L52.3 335.2L46.8 338.7L42.4 341.5L38.8 343.8L35.8 345.6L33.5 347.1L31.5 348.3L30 349.3L28.8 350.1L27.8 350.7L27 351.2L26.2 351.7L25.4 352.2L35.4 367.1L36.2 366.6L37 366L37.8 365.4L38.7 364.8L39.8 363.9L41.2 362.9L43.1 361.7L45.3 360.1L48.2 358.1L51.7 355.7L56.1 352.7L61.5 349.1L67.6 344.9L74.3 340.4L81.2 335.7L88.2 331L95 326.4L101.4 322.2L107.1 318.4L111.9 315.2L115.9 312.7L119.4 310.6L122.4 308.8L125.1 307.3L127.5 306L129.8 304.8L132 303.6L134.3 302.3L136.6 301L139 299.5L141.4 297.9L143.8 296.2L146.2 294.5L148.4 292.9L150.5 291.3L152.5 289.7L154.3 288.3L155.8 287.1L157.1 286.1L158.1 285.3Z" fill="#2c2a66"/><path d="M150.2 274.3L149.1 275.1L147.6 276.1L146 277.3L144.2 278.5L142.3 279.9L140.2 281.3L138 282.8L135.8 284.3L133.5 285.7L131.3 287L129.2 288.2L127.2 289.3L125.2 290.4L123 291.4L120.6 292.6L118 293.9L115 295.5L111.7 297.3L107.9 299.4L103.6 301.9L98.6 305L92.7 308.7L86.1 312.8L79.2 317.2L72 321.7L65 326.2L58.2 330.6L51.9 334.6L46.4 338L41.9 340.9L38.4 343.1L35.4 345L33 346.5L31.1 347.7L29.6 348.7L28.4 349.4L27.4 350L26.5 350.6L25.8 351L25 351.5L35 366.5L35.8 365.9L36.5 365.4L37.3 364.8L38.3 364.1L39.4 363.3L40.8 362.3L42.6 361L44.9 359.4L47.8 357.5L51.3 355.1L55.7 352.1L61.1 348.5L67.2 344.3L73.9 339.8L80.8 335.1L87.8 330.4L94.6 325.8L101 321.6L106.7 317.8L111.6 314.7L115.6 312.1L119 310L122.1 308.3L124.8 306.7L127.2 305.4L129.5 304.2L131.8 303L134 301.8L136.3 300.4L138.7 299L141.1 297.3L143.5 295.7L145.8 294L148.1 292.4L150.2 290.8L152.1 289.3L153.9 287.9L155.5 286.7L156.8 285.7L157.8 284.9Z" fill="#232327"/><path d="M150.3 274.5L149.2 275.3L147.8 276.3L146.1 277.4L144.3 278.7L142.4 280.1L140.3 281.5L138.1 283L135.9 284.5L133.7 285.9L131.4 287.2L129.3 288.4L127.3 289.5L125.3 290.6L123.1 291.6L120.7 292.8L118.1 294.1L115.1 295.7L111.8 297.5L108 299.6L103.8 302.1L98.7 305.2L92.8 308.9L86.3 313L79.3 317.4L72.2 321.9L65.1 326.5L58.3 330.8L52.1 334.8L46.6 338.3L42.1 341.1L38.5 343.4L35.6 345.2L33.2 346.7L31.3 347.9L29.7 348.9L28.5 349.7L27.5 350.3L26.7 350.8L26 351.3L25.2 351.8L34 364.9L34.7 364.4L35.5 363.8L36.3 363.3L37.2 362.6L38.4 361.8L39.8 360.8L41.6 359.5L43.9 357.9L46.8 356L50.3 353.6L54.7 350.7L60.1 347L66.3 342.9L72.9 338.4L79.9 333.7L86.9 329L93.7 324.5L100.1 320.2L105.9 316.5L110.7 313.3L114.8 310.8L118.3 308.7L121.3 306.9L124.1 305.4L126.6 304.1L128.9 302.9L131.1 301.7L133.3 300.5L135.5 299.2L137.9 297.7L140.3 296.1L142.7 294.5L145 292.9L147.2 291.2L149.3 289.6L151.3 288.1L153.1 286.8L154.7 285.6L156 284.6L157 283.8Z" fill="#353539"/><path d="M150.5 274.8L149.4 275.6L148 276.6L146.4 277.8L144.6 279L142.6 280.4L140.5 281.9L138.4 283.3L136.1 284.8L133.9 286.2L131.7 287.6L129.5 288.8L127.5 289.9L125.5 290.9L123.3 292L120.9 293.2L118.3 294.5L115.3 296L112 297.8L108.3 300L104 302.5L99 305.6L93.1 309.3L86.5 313.4L79.6 317.8L72.4 322.3L65.4 326.9L58.6 331.2L52.3 335.2L46.9 338.7L42.4 341.5L38.8 343.8L35.9 345.7L33.5 347.2L31.6 348.4L30 349.3L28.8 350.1L27.8 350.7L27 351.2L26.3 351.7L25.5 352.2L32.9 363.3L33.6 362.7L34.4 362.2L35.2 361.6L36.1 361L37.3 360.2L38.7 359.2L40.6 357.9L42.9 356.3L45.8 354.4L49.3 352.1L53.7 349.1L59.1 345.5L65.3 341.4L72 336.9L78.9 332.2L86 327.6L92.8 323.1L99.2 318.8L105 315.1L109.9 311.9L113.9 309.4L117.5 307.3L120.6 305.5L123.3 304L125.8 302.7L128.1 301.5L130.3 300.3L132.5 299.1L134.8 297.8L137.1 296.4L139.5 294.9L141.9 293.2L144.2 291.6L146.4 290L148.5 288.4L150.4 287L152.2 285.6L153.8 284.4L155.1 283.4L156.2 282.6Z" fill="#434348"/><path d="M150.9 275.3L149.8 276.1L148.4 277.1L146.8 278.3L145 279.6L143 281L140.9 282.4L138.8 283.9L136.5 285.4L134.3 286.8L132 288.2L129.9 289.4L127.9 290.5L125.8 291.6L123.6 292.7L121.2 293.8L118.6 295.1L115.7 296.7L112.4 298.5L108.7 300.6L104.4 303.2L99.4 306.2L93.5 309.9L86.9 314L80 318.5L72.9 323L65.8 327.5L59 331.9L52.8 335.9L47.3 339.4L42.8 342.3L39.3 344.5L36.3 346.4L34 347.9L32 349.1L30.5 350.1L29.3 350.8L28.3 351.5L27.5 352L26.8 352.5L26 352.9L31.2 360.7L31.9 360.2L32.7 359.7L33.5 359.1L34.5 358.5L35.6 357.7L37.1 356.7L38.9 355.4L41.3 353.9L44.2 352L47.7 349.6L52.1 346.7L57.6 343.1L63.7 339L70.4 334.6L77.4 330L84.5 325.3L91.4 320.8L97.8 316.6L103.6 312.9L108.5 309.8L112.6 307.3L116.2 305.1L119.4 303.3L122.2 301.8L124.7 300.5L127 299.3L129.2 298.1L131.4 297L133.6 295.8L135.9 294.4L138.2 292.9L140.5 291.3L142.8 289.7L145 288.1L147.1 286.6L149.1 285.1L150.9 283.8L152.5 282.6L153.8 281.6L154.9 280.8Z" fill="#54545a"/><path d="M151.3 275.9L150.2 276.7L148.8 277.7L147.2 278.9L145.4 280.2L143.4 281.5L141.4 283L139.2 284.5L136.9 286L134.7 287.4L132.4 288.8L130.3 290.1L128.2 291.2L126.1 292.3L124 293.3L121.6 294.5L119 295.8L116.1 297.4L112.8 299.2L109.1 301.3L104.8 303.8L99.8 306.9L93.9 310.6L87.4 314.8L80.5 319.2L73.4 323.7L66.3 328.3L59.5 332.6L53.3 336.6L47.8 340.2L43.3 343L39.8 345.3L36.8 347.2L34.5 348.7L32.6 349.9L31.1 350.9L29.9 351.6L28.9 352.2L28 352.8L27.3 353.3L26.5 353.8L29.5 358.3L30.3 357.7L31 357.2L31.9 356.7L32.8 356L34 355.2L35.5 354.3L37.4 353L39.7 351.5L42.6 349.6L46.1 347.3L50.6 344.4L56 340.8L62.2 336.7L69 332.3L76 327.7L83.1 323.1L89.9 318.7L96.4 314.5L102.3 310.8L107.2 307.7L111.4 305.1L115 303L118.2 301.2L121 299.7L123.6 298.4L125.9 297.2L128.1 296L130.3 294.9L132.4 293.7L134.6 292.4L136.9 290.9L139.3 289.4L141.5 287.9L143.7 286.3L145.8 284.8L147.8 283.4L149.6 282L151.2 280.9L152.5 279.9L153.6 279.1Z" fill="#66666d"/><circle cx="154" cy="279.6" r="6.5" fill="#232327"/><circle cx="153.7" cy="279.1" r="5.7" fill="#353539"/><circle cx="153.4" cy="278.7" r="4.8" fill="#434348"/><circle cx="152.9" cy="278.1" r="3.4" fill="#54545a"/>
<path d="M206.1 277.2L205.6 278.2L205 279.5L204.3 281L203.6 282.6L202.8 284.3L201.9 286.2L201 288L200.1 289.7L199.3 291.4L198.4 292.9L197.6 294.3L196.8 295.6L196 296.8L195.2 297.9L194.4 299.1L193.5 300.5L192.4 302L191.1 303.7L189.7 305.8L188 308.1L185.9 311L183.5 314.3L180.8 318L177.9 322L174.9 326.1L172 330.1L169.1 334L166.5 337.6L164.1 340.9L162.2 343.6L160.6 345.8L159.2 347.6L158.1 349.2L157.1 350.6L156.3 351.7L155.7 352.7L155.1 353.5L154.6 354.2L154.1 354.9L153.7 355.5L167.5 365.4L168 364.8L168.4 364.1L168.9 363.4L169.6 362.6L170.3 361.7L171.1 360.5L172.1 359.1L173.2 357.5L174.5 355.6L176.1 353.3L177.9 350.6L180.1 347.2L182.6 343.5L185.3 339.5L188.1 335.3L190.9 331L193.6 326.9L196.1 323.1L198.4 319.6L200.3 316.6L201.9 314.2L203.3 312.1L204.5 310.2L205.5 308.6L206.4 307.1L207.3 305.7L208.2 304.3L209 302.8L209.8 301.3L210.7 299.6L211.6 297.8L212.6 295.8L213.4 293.7L214.3 291.7L215.1 289.7L215.8 287.9L216.5 286.1L217.1 284.6L217.6 283.4L218 282.5Z" fill="#2c2a66"/><path d="M205.6 277L205.1 278L204.5 279.3L203.8 280.7L203.1 282.4L202.2 284.1L201.4 285.9L200.5 287.7L199.6 289.5L198.7 291.1L197.9 292.6L197 294L196.2 295.3L195.5 296.4L194.7 297.6L193.9 298.8L192.9 300.1L191.9 301.6L190.6 303.4L189.1 305.4L187.4 307.8L185.4 310.6L182.9 313.9L180.2 317.6L177.3 321.6L174.3 325.6L171.4 329.7L168.5 333.6L165.8 337.2L163.5 340.4L161.5 343.1L159.9 345.3L158.6 347.2L157.5 348.8L156.5 350.1L155.7 351.3L155 352.2L154.5 353.1L154 353.8L153.5 354.5L153.1 355.1L166.9 364.9L167.4 364.3L167.8 363.7L168.3 363L168.9 362.2L169.7 361.2L170.5 360.1L171.5 358.7L172.6 357.1L173.9 355.1L175.5 352.9L177.3 350.1L179.5 346.8L182 343.1L184.7 339L187.5 334.9L190.3 330.6L193 326.5L195.6 322.7L197.9 319.2L199.8 316.2L201.4 313.8L202.7 311.7L203.9 309.9L205 308.3L205.9 306.8L206.8 305.4L207.6 304L208.4 302.5L209.3 301L210.1 299.4L211.1 297.5L212 295.5L212.9 293.5L213.8 291.5L214.6 289.5L215.3 287.6L216 285.9L216.6 284.4L217.1 283.2L217.4 282.2Z" fill="#232327"/><path d="M205.7 277.1L205.3 278.1L204.7 279.3L204 280.8L203.3 282.5L202.4 284.2L201.6 286L200.7 287.8L199.8 289.6L198.9 291.2L198.1 292.8L197.2 294.1L196.4 295.4L195.7 296.6L194.9 297.7L194.1 298.9L193.1 300.2L192 301.7L190.8 303.5L189.3 305.5L187.6 307.9L185.6 310.7L183.1 314.1L180.4 317.8L177.5 321.7L174.6 325.8L171.6 329.8L168.7 333.7L166.1 337.4L163.7 340.6L161.8 343.3L160.2 345.5L158.8 347.4L157.7 348.9L156.7 350.3L155.9 351.4L155.3 352.4L154.7 353.2L154.2 354L153.7 354.6L153.3 355.2L165.5 363.9L165.9 363.3L166.4 362.7L166.9 362L167.5 361.2L168.2 360.2L169 359L170 357.7L171.1 356L172.5 354.1L174 351.9L175.9 349.1L178.1 345.8L180.6 342.1L183.3 338.1L186.1 333.9L189 329.7L191.7 325.6L194.3 321.8L196.6 318.3L198.5 315.4L200.1 312.9L201.5 310.8L202.7 309L203.7 307.4L204.7 305.9L205.5 304.5L206.4 303.2L207.2 301.8L208 300.3L208.9 298.7L209.8 296.8L210.7 294.9L211.6 292.9L212.5 290.9L213.3 288.9L214 287.1L214.7 285.4L215.3 283.9L215.8 282.6L216.2 281.7Z" fill="#353539"/><path d="M206.1 277.2L205.6 278.2L205 279.5L204.4 281L203.6 282.6L202.8 284.4L202 286.2L201.1 288L200.2 289.8L199.3 291.4L198.4 293L197.6 294.4L196.8 295.6L196 296.8L195.3 297.9L194.4 299.2L193.5 300.5L192.4 302L191.2 303.7L189.7 305.8L188 308.1L185.9 311L183.5 314.3L180.8 318L177.9 322L175 326.1L172 330.1L169.1 334L166.5 337.7L164.1 340.9L162.2 343.6L160.6 345.8L159.2 347.6L158.1 349.2L157.2 350.6L156.4 351.7L155.7 352.7L155.1 353.5L154.6 354.2L154.1 354.9L153.7 355.5L164 362.8L164.4 362.2L164.9 361.6L165.4 360.9L166 360.1L166.7 359.1L167.5 357.9L168.5 356.6L169.6 354.9L170.9 353L172.5 350.8L174.4 348.1L176.6 344.8L179.1 341L181.9 337L184.7 332.9L187.5 328.7L190.3 324.6L192.9 320.8L195.2 317.4L197.1 314.4L198.8 312L200.1 309.9L201.3 308.1L202.4 306.5L203.3 305.1L204.2 303.7L205 302.3L205.8 301L206.6 299.5L207.5 297.9L208.4 296.1L209.4 294.2L210.2 292.2L211.1 290.3L211.9 288.3L212.7 286.5L213.4 284.8L214 283.3L214.5 282.1L214.9 281.1Z" fill="#434348"/><path d="M206.7 277.5L206.2 278.5L205.6 279.8L205 281.2L204.2 282.9L203.4 284.6L202.6 286.4L201.7 288.3L200.8 290.1L199.9 291.7L199 293.3L198.2 294.7L197.4 296L196.7 297.2L195.9 298.3L195 299.6L194.1 300.9L193 302.4L191.8 304.2L190.3 306.2L188.6 308.6L186.6 311.4L184.2 314.8L181.5 318.5L178.6 322.5L175.6 326.5L172.7 330.6L169.8 334.5L167.2 338.1L164.8 341.4L162.9 344.1L161.3 346.3L159.9 348.1L158.8 349.7L157.8 351.1L157 352.2L156.4 353.2L155.8 354L155.3 354.7L154.8 355.4L154.4 356L161.6 361.1L162 360.5L162.5 359.9L163 359.2L163.6 358.4L164.3 357.4L165.1 356.3L166.1 354.9L167.2 353.3L168.6 351.4L170.1 349.1L172 346.4L174.3 343.1L176.8 339.4L179.6 335.5L182.5 331.3L185.3 327.2L188.1 323.1L190.7 319.3L193.1 315.9L195 313L196.7 310.6L198.1 308.5L199.3 306.7L200.4 305.1L201.3 303.7L202.2 302.4L203 301.1L203.8 299.7L204.6 298.3L205.4 296.8L206.3 295L207.2 293.2L208.1 291.3L209 289.3L209.8 287.4L210.6 285.6L211.3 283.9L211.9 282.4L212.5 281.2L212.9 280.2Z" fill="#54545a"/><path d="M207.3 277.8L206.9 278.8L206.3 280L205.6 281.5L204.9 283.2L204.1 284.9L203.2 286.7L202.4 288.6L201.5 290.4L200.6 292.1L199.7 293.7L198.9 295.1L198.1 296.4L197.3 297.6L196.5 298.8L195.7 300L194.7 301.3L193.7 302.9L192.4 304.6L191 306.7L189.3 309L187.2 311.9L184.8 315.2L182.1 319L179.3 322.9L176.3 327L173.4 331.1L170.5 335L167.9 338.7L165.6 341.9L163.6 344.6L162 346.8L160.7 348.7L159.6 350.3L158.6 351.6L157.8 352.8L157.1 353.7L156.5 354.6L156 355.3L155.6 355.9L155.2 356.6L159.3 359.5L159.7 358.9L160.2 358.3L160.7 357.5L161.3 356.7L162 355.8L162.8 354.6L163.8 353.2L164.9 351.6L166.2 349.7L167.8 347.5L169.7 344.8L172 341.5L174.6 337.9L177.4 333.9L180.3 329.8L183.2 325.7L186 321.6L188.6 317.9L191 314.5L193 311.6L194.6 309.2L196.1 307.1L197.3 305.3L198.4 303.8L199.3 302.4L200.2 301.1L200.9 299.8L201.7 298.5L202.5 297.2L203.4 295.7L204.3 294L205.2 292.2L206.1 290.3L207 288.4L207.8 286.5L208.6 284.7L209.3 283.1L209.9 281.6L210.5 280.3L210.9 279.3Z" fill="#66666d"/><circle cx="211.5" cy="279.6" r="6.5" fill="#232327"/><circle cx="211" cy="279.4" r="5.7" fill="#353539"/><circle cx="210.5" cy="279.1" r="4.8" fill="#434348"/><circle cx="209.8" cy="278.8" r="3.4" fill="#54545a"/>
<path d="M245.2 278.6L245 279.6L244.7 280.8L244.5 282.3L244.2 284L243.8 285.8L243.5 287.6L243.1 289.5L242.7 291.3L242.4 293.1L242 294.7L241.6 296L241.3 297.3L240.9 298.5L240.6 299.7L240.2 301L239.7 302.5L239.2 304.1L238.7 306L238.2 308.1L237.6 310.6L236.9 313.6L236.1 317L235.3 320.8L234.5 324.8L233.6 329L232.7 333.1L231.9 337L231.1 340.7L230.5 343.9L229.9 346.6L229.4 348.8L229 350.7L228.7 352.3L228.4 353.6L228.1 354.8L227.9 355.7L227.8 356.5L227.6 357.2L227.5 357.9L227.3 358.5L242 361.8L242.1 361.2L242.2 360.6L242.4 359.9L242.6 359L242.8 358L243.1 356.9L243.4 355.5L243.8 353.8L244.2 351.9L244.6 349.6L245.1 346.9L245.7 343.6L246.4 339.9L247.1 335.9L247.9 331.8L248.6 327.6L249.3 323.6L250 319.8L250.7 316.5L251.2 313.6L251.7 311.3L252.2 309.4L252.6 307.7L253 306.2L253.3 304.9L253.7 303.6L254.1 302.2L254.4 300.8L254.8 299.3L255.2 297.6L255.5 295.8L255.9 293.9L256.2 291.9L256.5 290L256.8 288L257.1 286.2L257.4 284.5L257.6 283L257.8 281.8L258 280.8Z" fill="#2c2a66"/><path d="M244.6 278.5L244.4 279.5L244.2 280.7L243.9 282.2L243.6 283.9L243.3 285.7L242.9 287.5L242.5 289.4L242.2 291.2L241.8 292.9L241.4 294.5L241.1 295.9L240.7 297.1L240.4 298.3L240 299.5L239.6 300.8L239.1 302.3L238.6 303.9L238.1 305.8L237.6 308L237 310.5L236.3 313.5L235.5 316.9L234.7 320.7L233.8 324.7L233 328.8L232.1 333L231.3 336.9L230.5 340.6L229.8 343.8L229.3 346.5L228.8 348.7L228.4 350.6L228 352.2L227.7 353.5L227.5 354.6L227.3 355.5L227.1 356.4L227 357.1L226.8 357.8L226.7 358.4L241.3 361.6L241.5 361L241.6 360.4L241.8 359.7L242 358.9L242.2 357.9L242.5 356.7L242.8 355.3L243.1 353.7L243.5 351.8L243.9 349.5L244.5 346.7L245.1 343.5L245.8 339.8L246.5 335.8L247.2 331.7L248 327.5L248.7 323.5L249.4 319.7L250.1 316.3L250.6 313.5L251.1 311.2L251.6 309.2L252 307.5L252.4 306.1L252.7 304.7L253.1 303.4L253.5 302.1L253.8 300.7L254.2 299.1L254.6 297.5L254.9 295.7L255.3 293.8L255.6 291.8L256 289.9L256.3 287.9L256.6 286.1L256.8 284.4L257.1 282.9L257.2 281.7L257.4 280.7Z" fill="#232327"/><path d="M244.8 278.5L244.6 279.5L244.4 280.8L244.1 282.3L243.8 283.9L243.5 285.7L243.1 287.5L242.7 289.4L242.4 291.2L242 293L241.6 294.6L241.3 296L240.9 297.2L240.6 298.4L240.2 299.6L239.8 300.9L239.3 302.4L238.9 304L238.3 305.9L237.8 308L237.2 310.5L236.5 313.5L235.8 316.9L234.9 320.7L234.1 324.8L233.2 328.9L232.3 333L231.5 337L230.7 340.6L230.1 343.9L229.5 346.6L229 348.7L228.6 350.6L228.3 352.2L228 353.5L227.7 354.7L227.5 355.6L227.4 356.4L227.2 357.1L227 357.8L226.9 358.4L239.8 361.3L239.9 360.7L240.1 360.1L240.2 359.4L240.4 358.5L240.7 357.6L240.9 356.4L241.2 355L241.6 353.4L242 351.4L242.4 349.2L242.9 346.4L243.6 343.2L244.3 339.5L245 335.5L245.7 331.4L246.5 327.2L247.3 323.2L248 319.4L248.6 316L249.2 313.2L249.7 310.9L250.2 308.9L250.6 307.2L251 305.7L251.4 304.3L251.7 303L252.1 301.7L252.5 300.3L252.9 298.8L253.2 297.2L253.6 295.4L253.9 293.5L254.3 291.6L254.6 289.6L254.9 287.7L255.2 285.9L255.5 284.2L255.7 282.7L255.9 281.5L256.1 280.5Z" fill="#3a3a3f"/><path d="M245.2 278.6L245 279.6L244.8 280.8L244.5 282.3L244.2 284L243.9 285.8L243.5 287.6L243.1 289.5L242.8 291.3L242.4 293.1L242 294.7L241.7 296.1L241.3 297.3L241 298.5L240.6 299.7L240.2 301L239.7 302.5L239.3 304.1L238.7 306L238.2 308.1L237.6 310.6L236.9 313.6L236.2 317L235.4 320.8L234.5 324.8L233.6 329L232.8 333.1L231.9 337L231.2 340.7L230.5 344L229.9 346.6L229.5 348.8L229.1 350.7L228.7 352.3L228.4 353.6L228.2 354.8L228 355.7L227.8 356.5L227.6 357.2L227.5 357.9L227.4 358.5L238.2 360.9L238.3 360.3L238.5 359.7L238.6 359L238.8 358.2L239.1 357.2L239.3 356L239.6 354.6L240 353L240.4 351.1L240.8 348.9L241.3 346.1L242 342.8L242.7 339.1L243.4 335.2L244.2 331.1L245 326.9L245.7 322.9L246.5 319.1L247.1 315.7L247.7 312.9L248.2 310.5L248.7 308.5L249.1 306.8L249.5 305.3L249.9 303.9L250.3 302.6L250.7 301.3L251 299.9L251.4 298.5L251.8 296.8L252.1 295.1L252.5 293.2L252.8 291.3L253.2 289.4L253.5 287.5L253.8 285.6L254.1 284L254.3 282.5L254.5 281.2L254.7 280.2Z" fill="#4c4c52"/><path d="M245.8 278.7L245.6 279.7L245.4 280.9L245.1 282.4L244.8 284.1L244.5 285.9L244.2 287.7L243.8 289.6L243.4 291.5L243 293.2L242.7 294.8L242.3 296.2L242 297.5L241.6 298.7L241.3 299.9L240.8 301.2L240.4 302.7L239.9 304.3L239.4 306.2L238.9 308.3L238.3 310.8L237.6 313.7L236.9 317.2L236.1 321L235.2 325L234.3 329.1L233.5 333.2L232.7 337.2L231.9 340.9L231.2 344.1L230.7 346.8L230.2 349L229.8 350.9L229.4 352.5L229.2 353.8L228.9 354.9L228.7 355.9L228.5 356.7L228.4 357.4L228.2 358.1L228.1 358.7L235.7 360.4L235.8 359.8L236 359.1L236.1 358.4L236.3 357.6L236.6 356.6L236.8 355.5L237.1 354.1L237.5 352.5L237.9 350.6L238.3 348.3L238.8 345.6L239.5 342.3L240.2 338.7L241 334.7L241.8 330.6L242.6 326.4L243.3 322.4L244.1 318.6L244.8 315.2L245.4 312.3L245.9 310L246.4 307.9L246.9 306.2L247.3 304.6L247.7 303.2L248.1 301.9L248.4 300.6L248.8 299.3L249.2 297.9L249.5 296.3L249.9 294.6L250.2 292.8L250.6 290.9L250.9 289L251.3 287.1L251.6 285.3L251.9 283.6L252.1 282.1L252.3 280.8L252.5 279.9Z" fill="#5e5e64"/><path d="M246.5 278.8L246.3 279.8L246.1 281.1L245.8 282.6L245.5 284.2L245.2 286L244.9 287.9L244.5 289.7L244.1 291.6L243.8 293.4L243.4 295L243 296.4L242.7 297.7L242.3 298.9L242 300.1L241.6 301.4L241.1 302.9L240.7 304.5L240.1 306.3L239.6 308.5L239 310.9L238.4 313.9L237.6 317.3L236.8 321.1L236 325.1L235.1 329.3L234.3 333.4L233.4 337.3L232.7 341L232 344.3L231.5 347L231 349.2L230.6 351L230.2 352.6L230 354L229.7 355.1L229.5 356L229.3 356.9L229.2 357.6L229 358.2L228.9 358.9L233.3 359.8L233.4 359.2L233.5 358.6L233.7 357.9L233.9 357L234.1 356.1L234.4 354.9L234.7 353.6L235 352L235.4 350.1L235.9 347.9L236.4 345.1L237.1 341.9L237.8 338.2L238.6 334.2L239.4 330.1L240.2 326L241 321.9L241.8 318.2L242.5 314.8L243.1 311.8L243.7 309.4L244.2 307.4L244.7 305.6L245.1 304L245.5 302.6L245.9 301.3L246.3 300L246.6 298.7L247 297.4L247.3 295.9L247.7 294.2L248.1 292.4L248.4 290.5L248.8 288.6L249.1 286.7L249.4 284.9L249.7 283.2L250 281.7L250.2 280.5L250.4 279.5Z" fill="#707077"/><circle cx="251" cy="279.6" r="6.5" fill="#232327"/><circle cx="250.4" cy="279.5" r="5.7" fill="#3a3a3f"/><circle cx="249.9" cy="279.4" r="4.8" fill="#4c4c52"/><circle cx="249.2" cy="279.3" r="3.4" fill="#5e5e64"/>
<path d="M294 279.6L293.9 280.5L293.9 281.6L293.8 283L293.7 284.6L293.6 286.4L293.6 288.4L293.6 290.4L293.6 292.6L293.8 294.9L294 297.1L294.4 299.4L294.8 301.5L295.2 303.7L295.7 306L296.3 308.2L296.8 310.5L297.5 312.8L298.1 315.2L298.8 317.7L299.5 320.3L300.2 323.1L301.1 326.2L302 329.5L303 332.9L304 336.3L305 339.7L306 342.9L306.8 345.8L307.6 348.5L308.3 350.7L308.9 352.6L309.4 354.2L309.9 355.6L310.3 356.8L310.6 357.8L310.9 358.6L311.2 359.3L311.4 359.9L311.6 360.4L311.8 360.8L326.9 355.6L326.7 355.1L326.5 354.5L326.3 353.9L326.1 353.2L325.8 352.5L325.5 351.5L325.1 350.4L324.7 349.1L324.2 347.6L323.5 345.7L322.8 343.5L321.9 340.9L320.9 338L319.8 334.9L318.6 331.6L317.5 328.3L316.3 325L315.2 321.8L314.2 318.8L313.3 316.1L312.5 313.6L311.7 311.1L310.9 308.8L310.1 306.6L309.4 304.4L308.8 302.4L308.2 300.4L307.7 298.6L307.2 296.8L306.8 295L306.6 293.4L306.3 291.7L306.2 289.9L306.1 288.2L306 286.5L306 284.8L306 283.3L306 281.9L306 280.6L306 279.6Z" fill="#40406e"/><path d="M294.5 279.6L294.5 280.5L294.4 281.6L294.3 283L294.2 284.6L294.2 286.4L294.1 288.3L294.1 290.4L294.2 292.6L294.3 294.8L294.6 297.1L294.9 299.2L295.3 301.4L295.8 303.6L296.3 305.8L296.8 308L297.4 310.3L298 312.7L298.7 315.1L299.4 317.5L300.1 320.1L300.8 322.9L301.7 326L302.7 329.3L303.7 332.7L304.7 336.1L305.7 339.5L306.6 342.6L307.5 345.6L308.3 348.2L309 350.5L309.6 352.4L310.1 354L310.6 355.4L311 356.5L311.3 357.5L311.6 358.4L311.9 359L312.1 359.6L312.3 360.1L312.4 360.6L327.6 355.4L327.4 354.9L327.2 354.3L327 353.7L326.8 353L326.5 352.2L326.2 351.3L325.8 350.2L325.4 348.9L324.8 347.3L324.2 345.5L323.4 343.3L322.5 340.7L321.5 337.8L320.4 334.7L319.3 331.4L318.1 328.1L317 324.8L315.9 321.6L314.8 318.6L313.9 315.9L313.1 313.4L312.3 310.9L311.5 308.6L310.7 306.4L310 304.3L309.4 302.2L308.8 300.3L308.3 298.4L307.8 296.6L307.4 294.9L307.1 293.3L306.9 291.6L306.7 289.9L306.6 288.2L306.6 286.5L306.6 284.8L306.5 283.3L306.5 281.9L306.5 280.6L306.5 279.6Z" fill="#66666c"/><path d="M295.7 279.6L295.7 280.5L295.7 281.6L295.6 283L295.5 284.6L295.5 286.4L295.4 288.3L295.4 290.4L295.5 292.5L295.7 294.7L295.9 296.8L296.3 299L296.7 301.1L297.1 303.2L297.6 305.4L298.2 307.6L298.8 309.9L299.4 312.2L300.1 314.6L300.8 317.1L301.5 319.7L302.3 322.5L303.2 325.6L304.2 328.8L305.2 332.2L306.2 335.6L307.2 339L308.2 342.1L309.1 345.1L309.9 347.7L310.6 350L311.2 351.8L311.7 353.5L312.1 354.8L312.5 356L312.9 357L313.2 357.8L313.4 358.5L313.7 359.1L313.8 359.6L314 360.1L327.3 355.5L327.1 354.9L326.9 354.4L326.7 353.8L326.5 353.1L326.3 352.3L325.9 351.4L325.6 350.3L325.1 349L324.6 347.4L324 345.6L323.2 343.4L322.3 340.8L321.3 337.9L320.2 334.7L319 331.5L317.9 328.1L316.7 324.8L315.6 321.7L314.6 318.7L313.7 316L312.9 313.4L312.1 311L311.3 308.7L310.5 306.4L309.8 304.3L309.2 302.3L308.6 300.3L308 298.5L307.6 296.7L307.2 295L306.9 293.3L306.7 291.6L306.5 289.9L306.4 288.2L306.4 286.5L306.4 284.8L306.3 283.3L306.3 281.9L306.3 280.6L306.3 279.6Z" fill="#7b7b80"/><path d="M297.1 279.6L297.1 280.5L297 281.7L296.9 283L296.9 284.6L296.8 286.4L296.8 288.3L296.8 290.3L296.9 292.4L297.1 294.5L297.3 296.6L297.7 298.7L298.1 300.8L298.6 302.9L299.1 305L299.7 307.2L300.3 309.5L300.9 311.8L301.6 314.2L302.3 316.6L303 319.2L303.8 322L304.7 325.1L305.7 328.3L306.7 331.7L307.8 335.1L308.8 338.4L309.8 341.6L310.7 344.6L311.5 347.2L312.2 349.4L312.8 351.3L313.4 352.9L313.8 354.3L314.2 355.4L314.6 356.4L314.8 357.2L315.1 357.9L315.3 358.5L315.5 359L315.7 359.5L326.9 355.6L326.7 355.1L326.5 354.5L326.3 353.9L326.1 353.3L325.8 352.5L325.5 351.5L325.1 350.4L324.7 349.1L324.1 347.6L323.5 345.7L322.7 343.5L321.8 340.9L320.8 338L319.7 334.9L318.6 331.6L317.4 328.3L316.3 325L315.2 321.8L314.2 318.8L313.3 316.1L312.5 313.6L311.6 311.1L310.9 308.8L310.1 306.6L309.4 304.4L308.8 302.4L308.2 300.4L307.7 298.6L307.2 296.8L306.8 295L306.5 293.4L306.3 291.7L306.2 289.9L306.1 288.2L306 286.5L306 284.8L306 283.3L306 281.9L306 280.6L305.9 279.6Z" fill="#8c8c91"/><path d="M299.1 279.6L299.1 280.5L299.1 281.7L299 283.1L299 284.7L298.9 286.4L298.9 288.3L299 290.2L299.1 292.2L299.2 294.2L299.5 296.2L299.9 298.2L300.3 300.3L300.8 302.3L301.3 304.4L301.9 306.6L302.5 308.8L303.2 311.1L303.9 313.5L304.6 315.9L305.4 318.5L306.2 321.3L307.1 324.3L308.2 327.6L309.2 330.9L310.3 334.3L311.3 337.6L312.3 340.8L313.3 343.7L314.1 346.3L314.8 348.6L315.4 350.4L316 352L316.4 353.4L316.8 354.5L317.1 355.5L317.4 356.3L317.7 357L317.9 357.6L318.1 358.1L318.2 358.6L326.1 355.9L325.9 355.4L325.7 354.8L325.5 354.2L325.3 353.5L325 352.7L324.7 351.8L324.3 350.7L323.9 349.4L323.4 347.8L322.7 346L322 343.8L321.1 341.2L320.1 338.3L319 335.1L317.9 331.8L316.7 328.5L315.6 325.2L314.5 322L313.5 319L312.6 316.3L311.8 313.8L311 311.3L310.2 309L309.5 306.8L308.8 304.6L308.1 302.6L307.5 300.6L307 298.7L306.6 296.9L306.2 295.1L305.9 293.5L305.7 291.7L305.5 289.9L305.4 288.2L305.4 286.5L305.4 284.8L305.4 283.3L305.4 281.9L305.4 280.6L305.3 279.6Z" fill="#9a9a9e"/><path d="M301.1 279.6L301.1 280.6L301.1 281.8L301.1 283.2L301 284.7L301 286.4L301 288.2L301.1 290.1L301.2 292.1L301.4 294L301.6 295.9L302 297.8L302.4 299.8L302.9 301.8L303.5 303.8L304.1 306L304.7 308.2L305.4 310.4L306.2 312.8L306.9 315.2L307.7 317.8L308.5 320.6L309.5 323.6L310.5 326.8L311.6 330.2L312.7 333.5L313.8 336.8L314.8 340L315.8 342.9L316.6 345.5L317.4 347.8L318 349.6L318.5 351.2L318.9 352.5L319.3 353.7L319.7 354.6L319.9 355.4L320.2 356.1L320.4 356.7L320.6 357.2L320.8 357.7L325.3 356.2L325.1 355.6L324.9 355.1L324.7 354.5L324.5 353.8L324.2 353L323.9 352.1L323.5 351L323.1 349.7L322.5 348.1L321.9 346.3L321.2 344L320.3 341.4L319.3 338.5L318.2 335.4L317.1 332.1L315.9 328.8L314.8 325.5L313.7 322.3L312.7 319.3L311.9 316.5L311 314L310.2 311.6L309.5 309.2L308.7 307L308 304.8L307.4 302.8L306.8 300.8L306.3 298.9L305.9 297L305.5 295.3L305.2 293.5L305 291.8L304.8 290L304.8 288.2L304.7 286.4L304.7 284.8L304.7 283.3L304.7 281.8L304.7 280.6L304.7 279.6Z" fill="#a8a8ac"/><circle cx="300.5" cy="279.6" r="6" fill="#66666c"/><circle cx="301" cy="279.6" r="5.3" fill="#7b7b80"/><circle cx="301.5" cy="279.6" r="4.4" fill="#8c8c91"/><circle cx="302.2" cy="279.5" r="3.1" fill="#9a9a9e"/>
<path d="M340.5 280.5L340.6 281.3L340.7 282.3L340.8 283.7L340.9 285.3L341 287.1L341.2 289.2L341.6 291.4L342 293.7L342.6 296.1L343.4 298.6L344.3 301L345.3 303.4L346.4 305.9L347.6 308.4L348.9 311L350.3 313.6L351.6 316.2L353.1 318.9L354.5 321.5L356 324.2L357.6 327L359.4 330.1L361.3 333.2L363.2 336.4L365.2 339.5L367.1 342.6L368.9 345.5L370.6 348.3L372.1 350.7L373.5 352.9L374.6 354.7L375.6 356.3L376.4 357.8L377.2 359.1L377.9 360.2L378.5 361.1L379 362L379.4 362.7L379.8 363.4L380.2 364L394.5 354.8L394.2 354.3L393.8 353.6L393.3 352.9L392.7 352.1L392.1 351.1L391.4 350L390.6 348.8L389.6 347.4L388.6 345.8L387.3 343.9L385.9 341.8L384.2 339.4L382.4 336.7L380.5 333.8L378.4 330.9L376.4 327.8L374.3 324.8L372.4 321.9L370.5 319.1L368.9 316.5L367.3 313.9L365.7 311.4L364.1 309L362.6 306.5L361.1 304.2L359.8 301.9L358.5 299.7L357.4 297.6L356.4 295.6L355.5 293.9L354.9 292.2L354.3 290.5L353.9 288.9L353.6 287.2L353.3 285.6L353.1 284.1L352.9 282.6L352.8 281.2L352.6 279.9L352.4 278.8Z" fill="#40406e"/><path d="M341.1 280.4L341.1 281.2L341.2 282.3L341.3 283.6L341.4 285.2L341.5 287.1L341.8 289.1L342.1 291.2L342.5 293.5L343.2 295.9L343.9 298.4L344.9 300.7L345.9 303.1L347 305.6L348.2 308.1L349.5 310.7L350.8 313.3L352.2 315.9L353.6 318.5L355.1 321.2L356.6 323.9L358.2 326.7L360 329.7L361.8 332.8L363.8 336L365.7 339.1L367.7 342.2L369.5 345.2L371.2 347.9L372.8 350.3L374.1 352.5L375.2 354.3L376.2 355.9L377.1 357.4L377.8 358.7L378.5 359.8L379.1 360.7L379.6 361.6L380.1 362.3L380.5 363L380.8 363.6L395.2 354.4L394.8 353.9L394.4 353.2L393.9 352.5L393.4 351.7L392.7 350.7L392 349.6L391.2 348.4L390.2 347L389.2 345.4L387.9 343.5L386.5 341.4L384.8 339L383 336.3L381 333.4L379 330.5L377 327.5L374.9 324.5L372.9 321.5L371.1 318.7L369.4 316.1L367.8 313.6L366.2 311.1L364.6 308.6L363.1 306.2L361.7 303.9L360.3 301.6L359 299.4L357.9 297.4L356.9 295.4L356.1 293.6L355.4 292L354.9 290.4L354.4 288.8L354.1 287.1L353.8 285.5L353.6 284L353.4 282.5L353.3 281.2L353.1 279.8L352.9 278.8Z" fill="#66666c"/><path d="M342.3 280.3L342.4 281.1L342.5 282.1L342.6 283.5L342.7 285.1L342.8 286.9L343.1 288.9L343.4 291L343.8 293.2L344.4 295.5L345.2 297.9L346.1 300.2L347.1 302.5L348.2 305L349.4 307.4L350.7 310L352.1 312.5L353.5 315.1L354.9 317.8L356.4 320.4L357.9 323.1L359.5 325.9L361.3 328.9L363.2 332L365.2 335.1L367.1 338.2L369.1 341.3L370.9 344.2L372.6 347L374.2 349.4L375.5 351.5L376.6 353.4L377.7 355L378.5 356.5L379.3 357.7L380 358.8L380.6 359.8L381.1 360.6L381.6 361.4L382 362L382.3 362.6L394.9 354.6L394.6 354L394.2 353.4L393.7 352.7L393.1 351.8L392.5 350.9L391.8 349.8L391 348.5L390 347.1L388.9 345.5L387.7 343.7L386.3 341.5L384.6 339.1L382.8 336.4L380.8 333.6L378.8 330.6L376.7 327.6L374.7 324.6L372.7 321.7L370.9 318.9L369.2 316.3L367.6 313.7L366 311.2L364.4 308.8L362.9 306.3L361.5 304L360.1 301.7L358.8 299.5L357.7 297.5L356.7 295.5L355.9 293.7L355.2 292.1L354.7 290.5L354.2 288.8L353.9 287.2L353.6 285.6L353.4 284L353.2 282.6L353.1 281.2L352.9 279.9L352.8 278.8Z" fill="#838388"/><path d="M343.6 280.1L343.7 280.9L343.8 282L343.9 283.4L344 285L344.2 286.7L344.4 288.7L344.7 290.7L345.2 292.9L345.8 295.1L346.5 297.3L347.4 299.6L348.4 301.9L349.6 304.3L350.8 306.7L352.1 309.2L353.4 311.8L354.9 314.3L356.3 316.9L357.8 319.6L359.3 322.2L361 325L362.7 328L364.6 331L366.6 334.2L368.6 337.3L370.5 340.3L372.4 343.3L374.1 346L375.7 348.4L377 350.6L378.2 352.4L379.2 354L380.1 355.5L380.9 356.7L381.6 357.8L382.2 358.8L382.7 359.6L383.1 360.4L383.5 361L383.9 361.6L394.5 354.9L394.1 354.3L393.7 353.7L393.3 352.9L392.7 352.1L392.1 351.2L391.4 350.1L390.5 348.8L389.6 347.4L388.5 345.8L387.3 343.9L385.9 341.8L384.2 339.4L382.4 336.7L380.4 333.8L378.4 330.9L376.3 327.9L374.3 324.8L372.4 321.9L370.5 319.1L368.8 316.5L367.2 314L365.6 311.4L364.1 309L362.6 306.5L361.1 304.2L359.7 301.9L358.5 299.7L357.3 297.6L356.3 295.7L355.5 293.9L354.8 292.2L354.3 290.5L353.9 288.9L353.5 287.2L353.3 285.6L353.1 284.1L352.9 282.6L352.7 281.2L352.6 279.9L352.4 278.8Z" fill="#9a9a9e"/><path d="M345.6 279.8L345.7 280.7L345.8 281.8L346 283.2L346.1 284.8L346.3 286.5L346.5 288.3L346.8 290.3L347.3 292.3L347.9 294.4L348.6 296.5L349.5 298.7L350.5 300.9L351.6 303.2L352.8 305.6L354.1 308.1L355.5 310.6L357 313.1L358.5 315.7L360 318.3L361.5 320.9L363.1 323.6L364.9 326.6L366.9 329.6L368.8 332.7L370.8 335.8L372.8 338.8L374.7 341.8L376.4 344.5L378 346.9L379.4 349L380.6 350.9L381.6 352.5L382.5 353.9L383.3 355.2L384 356.3L384.6 357.3L385.1 358.1L385.6 358.8L386 359.5L386.3 360.1L393.8 355.3L393.4 354.8L393 354.1L392.5 353.4L392 352.6L391.4 351.6L390.7 350.5L389.8 349.3L388.9 347.8L387.8 346.2L386.6 344.4L385.2 342.3L383.5 339.8L381.7 337.1L379.8 334.3L377.7 331.3L375.7 328.3L373.7 325.3L371.7 322.3L369.9 319.5L368.2 316.9L366.6 314.3L365 311.8L363.4 309.3L361.9 306.9L360.5 304.5L359.1 302.2L357.9 300L356.7 297.9L355.7 295.9L354.9 294.1L354.2 292.4L353.7 290.7L353.3 289L352.9 287.3L352.6 285.7L352.4 284.1L352.3 282.6L352.1 281.3L352 280L351.8 278.9Z" fill="#a8a8ac"/><path d="M347.6 279.5L347.7 280.5L347.9 281.7L348 283L348.1 284.6L348.3 286.2L348.6 288L348.9 289.9L349.3 291.8L349.9 293.8L350.6 295.8L351.5 297.8L352.5 300L353.6 302.2L354.8 304.5L356.2 306.9L357.6 309.4L359 311.9L360.5 314.5L362.1 317L363.6 319.6L365.3 322.3L367.1 325.2L369 328.2L371 331.3L373 334.4L375 337.4L376.9 340.3L378.7 343L380.3 345.4L381.7 347.6L382.9 349.4L383.9 351L384.8 352.4L385.6 353.7L386.3 354.8L386.9 355.8L387.5 356.6L387.9 357.3L388.3 358L388.7 358.5L393 355.8L392.7 355.2L392.2 354.6L391.8 353.9L391.2 353L390.6 352.1L389.9 351L389.1 349.7L388.1 348.3L387.1 346.7L385.9 344.9L384.4 342.7L382.8 340.3L381 337.6L379 334.8L377 331.8L375 328.7L373 325.7L371 322.8L369.2 319.9L367.5 317.3L365.9 314.8L364.3 312.2L362.8 309.7L361.3 307.3L359.8 304.9L358.5 302.6L357.2 300.4L356.1 298.2L355.1 296.2L354.2 294.4L353.6 292.6L353 290.9L352.6 289.1L352.3 287.4L352 285.8L351.8 284.2L351.6 282.7L351.5 281.3L351.3 280L351.2 279Z" fill="#b6b6b9"/><circle cx="347" cy="279.6" r="6" fill="#66666c"/><circle cx="347.5" cy="279.5" r="5.3" fill="#838388"/><circle cx="348" cy="279.4" r="4.4" fill="#9a9a9e"/><circle cx="348.7" cy="279.3" r="3.1" fill="#a8a8ac"/>
<path d="M436.4 285.3L437 286.1L437.7 287.1L438.5 288.5L439.6 290L440.8 291.8L442.2 293.7L443.8 295.8L445.5 297.9L447.5 300.2L449.7 302.5L452.1 304.8L454.6 307.3L457.4 309.8L460.3 312.4L463.4 315.2L466.5 317.9L469.8 320.7L473.1 323.5L476.4 326.2L479.7 328.9L483.2 331.6L486.9 334.5L490.8 337.4L494.8 340.4L498.8 343.3L502.7 346.1L506.4 348.8L509.8 351.3L512.9 353.5L515.6 355.5L517.9 357.2L520 358.8L521.8 360.2L523.3 361.4L524.7 362.4L525.9 363.3L526.9 364.1L527.8 364.8L528.6 365.4L529.3 366L539.8 351.3L539 350.8L538.2 350.3L537.2 349.6L536.1 348.9L534.9 348.1L533.5 347.2L531.9 346.1L530 344.8L527.9 343.4L525.5 341.7L522.7 339.8L519.5 337.5L516 335.1L512.3 332.5L508.4 329.8L504.4 327L500.4 324.2L496.6 321.4L492.9 318.7L489.4 316.2L486.1 313.7L482.8 311.2L479.4 308.7L476.1 306.1L472.9 303.6L469.8 301.2L466.9 298.8L464.2 296.5L461.6 294.4L459.4 292.4L457.5 290.6L455.8 288.8L454.2 287.1L452.8 285.4L451.5 283.8L450.4 282.3L449.3 280.9L448.4 279.6L447.5 278.4L446.7 277.4Z" fill="#40406e"/><path d="M436.8 284.9L437.4 285.8L438.1 286.8L439 288.1L440 289.7L441.3 291.4L442.6 293.3L444.2 295.4L446 297.5L448 299.8L450.1 302L452.5 304.4L455.1 306.8L457.8 309.3L460.7 311.9L463.8 314.6L466.9 317.4L470.2 320.2L473.5 322.9L476.8 325.7L480.1 328.3L483.6 331.1L487.3 333.9L491.2 336.9L495.2 339.8L499.2 342.7L503.1 345.5L506.8 348.2L510.3 350.7L513.4 352.9L516 354.9L518.4 356.6L520.4 358.2L522.2 359.5L523.8 360.7L525.2 361.8L526.3 362.7L527.4 363.5L528.3 364.2L529.1 364.8L529.8 365.3L540.2 350.7L539.5 350.2L538.6 349.6L537.7 349L536.6 348.3L535.3 347.5L533.9 346.5L532.3 345.4L530.4 344.2L528.3 342.7L526 341.1L523.2 339.2L520 336.9L516.5 334.5L512.7 331.9L508.8 329.2L504.8 326.4L500.9 323.6L497 320.8L493.3 318.2L489.9 315.7L486.6 313.2L483.2 310.7L479.9 308.1L476.6 305.6L473.3 303.1L470.3 300.7L467.3 298.3L464.6 296L462.1 293.9L459.9 292L457.9 290.1L456.2 288.4L454.7 286.7L453.3 285L452 283.4L450.8 282L449.8 280.6L448.9 279.3L448 278L447.2 277.1Z" fill="#66666c"/><path d="M437.9 284.1L438.5 285L439.2 286L440.1 287.3L441.2 288.9L442.4 290.6L443.7 292.5L445.3 294.5L447.1 296.6L449 298.8L451.2 301L453.5 303.3L456 305.7L458.8 308.2L461.7 310.8L464.8 313.4L467.9 316.2L471.2 318.9L474.5 321.6L477.8 324.4L481.1 327L484.6 329.7L488.3 332.6L492.2 335.5L496.2 338.4L500.2 341.3L504.1 344.1L507.8 346.8L511.3 349.2L514.4 351.5L517.1 353.5L519.4 355.2L521.5 356.7L523.3 358.1L524.8 359.3L526.2 360.3L527.4 361.2L528.4 362L529.4 362.7L530.1 363.3L530.9 363.8L540.1 350.9L539.3 350.4L538.5 349.8L537.5 349.2L536.4 348.5L535.2 347.7L533.8 346.8L532.1 345.7L530.3 344.4L528.2 343L525.8 341.3L523 339.4L519.8 337.2L516.3 334.7L512.6 332.1L508.7 329.4L504.7 326.6L500.7 323.8L496.8 321.1L493.2 318.4L489.7 315.9L486.4 313.4L483 310.9L479.7 308.3L476.4 305.8L473.2 303.3L470.1 300.8L467.2 298.5L464.4 296.2L461.9 294.1L459.7 292.1L457.8 290.3L456.1 288.5L454.5 286.8L453.1 285.2L451.8 283.6L450.7 282.1L449.6 280.7L448.7 279.4L447.8 278.2L447 277.2Z" fill="#838388"/><path d="M439 283.3L439.7 284.1L440.4 285.2L441.3 286.5L442.4 288L443.6 289.7L444.9 291.6L446.5 293.5L448.2 295.6L450.1 297.7L452.2 299.9L454.5 302.1L457.1 304.5L459.8 307L462.8 309.5L465.8 312.2L469 314.9L472.3 317.6L475.6 320.3L478.9 323L482.2 325.6L485.7 328.3L489.4 331.1L493.3 334L497.3 336.9L501.3 339.8L505.1 342.6L508.9 345.3L512.3 347.7L515.5 350L518.2 352L520.5 353.7L522.6 355.2L524.4 356.5L526 357.7L527.3 358.7L528.5 359.6L529.6 360.4L530.5 361.1L531.3 361.7L532 362.2L539.7 351.3L539 350.8L538.1 350.3L537.2 349.7L536.1 348.9L534.9 348.1L533.5 347.2L531.8 346.1L530 344.8L527.9 343.4L525.5 341.7L522.7 339.8L519.5 337.6L516 335.1L512.3 332.5L508.4 329.8L504.4 327L500.4 324.2L496.5 321.4L492.9 318.8L489.4 316.2L486.1 313.8L482.8 311.2L479.4 308.7L476.1 306.1L472.9 303.6L469.8 301.2L466.9 298.8L464.1 296.5L461.6 294.4L459.4 292.4L457.5 290.6L455.7 288.8L454.2 287.1L452.8 285.4L451.5 283.8L450.4 282.3L449.3 280.9L448.4 279.6L447.5 278.4L446.7 277.4Z" fill="#9a9a9e"/><path d="M440.8 281.9L441.5 282.8L442.3 283.9L443.2 285.2L444.2 286.7L445.4 288.4L446.7 290.1L448.2 292L449.9 294L451.8 296.1L453.9 298.2L456.2 300.3L458.7 302.7L461.5 305.1L464.4 307.6L467.5 310.2L470.6 312.9L473.9 315.5L477.2 318.2L480.5 320.9L483.9 323.5L487.3 326.1L491 328.9L494.9 331.8L498.9 334.6L502.9 337.5L506.8 340.3L510.5 342.9L514 345.4L517.1 347.6L519.9 349.6L522.2 351.3L524.3 352.8L526.1 354.1L527.7 355.3L529.1 356.3L530.3 357.2L531.3 357.9L532.2 358.6L533.1 359.2L533.8 359.7L539.2 352.1L538.5 351.6L537.6 351L536.7 350.4L535.6 349.7L534.4 348.8L532.9 347.9L531.3 346.8L529.5 345.5L527.4 344.1L525 342.4L522.2 340.5L519 338.3L515.5 335.8L511.8 333.2L507.9 330.5L503.9 327.7L499.9 324.9L496.1 322.1L492.4 319.4L488.9 316.9L485.6 314.4L482.3 311.8L478.9 309.3L475.6 306.7L472.4 304.2L469.3 301.7L466.4 299.4L463.7 297.1L461.1 294.9L458.9 292.9L457 291.1L455.2 289.3L453.7 287.5L452.2 285.8L451 284.2L449.8 282.7L448.8 281.3L447.8 280L446.9 278.8L446.2 277.8Z" fill="#a8a8ac"/><path d="M442.5 280.6L443.2 281.5L444 282.7L444.9 284L446 285.4L447.2 287L448.5 288.8L450 290.6L451.6 292.5L453.5 294.5L455.5 296.5L457.8 298.6L460.3 300.9L463 303.3L466 305.7L469 308.3L472.2 310.9L475.5 313.5L478.8 316.2L482.2 318.8L485.5 321.4L488.9 324L492.7 326.7L496.5 329.6L500.5 332.4L504.5 335.3L508.4 338L512.1 340.7L515.6 343.1L518.8 345.4L521.5 347.3L523.9 349L525.9 350.5L527.8 351.8L529.4 352.9L530.8 353.9L532 354.8L533 355.5L534 356.2L534.8 356.7L535.5 357.3L538.7 352.9L537.9 352.4L537.1 351.8L536.1 351.2L535 350.4L533.8 349.6L532.4 348.7L530.8 347.6L528.9 346.3L526.8 344.8L524.5 343.2L521.7 341.2L518.5 339L515 336.6L511.3 334L507.4 331.2L503.4 328.4L499.4 325.6L495.5 322.8L491.9 320.1L488.4 317.6L485.1 315.1L481.7 312.5L478.4 309.9L475.1 307.4L471.9 304.8L468.8 302.4L465.9 299.9L463.1 297.6L460.6 295.5L458.4 293.5L456.4 291.6L454.7 289.8L453.1 288L451.7 286.3L450.4 284.6L449.2 283.1L448.2 281.7L447.2 280.4L446.4 279.2L445.6 278.2Z" fill="#b6b6b9"/><circle cx="442" cy="281" r="6.5" fill="#66666c"/><circle cx="442.4" cy="280.6" r="5.7" fill="#838388"/><circle cx="442.8" cy="280.3" r="4.8" fill="#9a9a9e"/><circle cx="443.5" cy="279.8" r="3.4" fill="#a8a8ac"/>
<path d="M526.9 286.9L527.3 287.3L527.8 287.9L528.4 288.7L529.1 289.6L529.9 290.5L530.9 291.6L531.8 292.7L532.9 293.8L534 294.9L535.2 295.9L536.5 297L537.9 298.1L539.3 299.1L540.8 300.2L542.2 301.2L543.6 302.1L544.9 303L546 303.7L546.9 304.4L547.6 304.8L555.7 292.3L554.9 291.8L553.9 291.2L552.8 290.5L551.5 289.7L550.1 288.9L548.7 288.1L547.3 287.2L546.1 286.4L544.9 285.7L544 285L543.2 284.4L542.3 283.7L541.4 282.9L540.6 282.1L539.7 281.3L538.9 280.5L538.1 279.7L537.4 279L536.8 278.4L536.3 277.9Z" fill="#40406e"/><path d="M527.3 286.5L527.7 287L528.2 287.5L528.8 288.3L529.5 289.2L530.4 290.1L531.3 291.1L532.3 292.2L533.3 293.3L534.4 294.4L535.6 295.5L536.9 296.5L538.3 297.5L539.7 298.6L541.1 299.6L542.6 300.6L543.9 301.6L545.2 302.4L546.3 303.2L547.2 303.8L547.9 304.3L556.1 291.7L555.3 291.2L554.3 290.6L553.1 289.9L551.8 289.2L550.4 288.4L549.1 287.5L547.7 286.7L546.4 285.9L545.3 285.2L544.4 284.5L543.6 283.9L542.7 283.2L541.8 282.5L541 281.7L540.1 280.9L539.3 280.1L538.6 279.3L537.9 278.6L537.2 278L536.7 277.5Z" fill="#66666c"/><path d="M528.3 285.6L528.7 286L529.2 286.6L529.8 287.4L530.6 288.2L531.4 289.2L532.3 290.2L533.3 291.2L534.3 292.3L535.4 293.3L536.5 294.3L537.8 295.3L539.1 296.3L540.5 297.4L541.9 298.4L543.4 299.3L544.8 300.3L546 301.1L547.2 301.9L548.1 302.5L548.8 303L556 291.9L555.2 291.4L554.1 290.8L553 290.1L551.7 289.4L550.3 288.6L548.9 287.7L547.6 286.9L546.3 286.1L545.2 285.3L544.2 284.7L543.4 284.1L542.6 283.4L541.7 282.6L540.8 281.8L540 281L539.2 280.2L538.4 279.5L537.7 278.8L537.1 278.1L536.5 277.6Z" fill="#838388"/><path d="M529.3 284.6L529.7 285L530.3 285.6L530.9 286.4L531.6 287.2L532.5 288.1L533.4 289.1L534.3 290.1L535.3 291.2L536.4 292.2L537.5 293.1L538.7 294.1L540 295.1L541.4 296.1L542.8 297L544.2 298L545.6 298.9L546.9 299.8L548 300.5L549 301.1L549.7 301.6L555.7 292.3L554.9 291.8L553.9 291.2L552.7 290.5L551.4 289.8L550.1 288.9L548.7 288.1L547.3 287.3L546 286.4L544.9 285.7L544 285L543.1 284.4L542.3 283.7L541.4 282.9L540.5 282.1L539.7 281.3L538.9 280.5L538.1 279.8L537.4 279.1L536.8 278.4L536.3 277.9Z" fill="#9a9a9e"/><path d="M530.9 283L531.4 283.5L531.9 284.1L532.6 284.8L533.3 285.7L534.1 286.6L535 287.5L535.9 288.5L536.9 289.4L537.9 290.4L539 291.3L540.1 292.2L541.4 293.1L542.8 294L544.2 295L545.6 295.9L547 296.8L548.2 297.6L549.4 298.4L550.3 299L551.1 299.5L555.3 292.9L554.5 292.4L553.5 291.8L552.3 291.1L551.1 290.4L549.7 289.6L548.3 288.7L546.9 287.9L545.6 287L544.5 286.3L543.5 285.6L542.7 284.9L541.8 284.2L540.9 283.4L540 282.6L539.2 281.8L538.4 281L537.6 280.2L536.9 279.5L536.3 278.9L535.8 278.4Z" fill="#a8a8ac"/><path d="M532.5 281.5L532.9 282L533.5 282.6L534.2 283.4L534.9 284.2L535.7 285L536.6 285.9L537.5 286.9L538.5 287.8L539.5 288.6L540.4 289.5L541.5 290.3L542.7 291.1L544.1 292.1L545.5 293L546.9 293.9L548.3 294.8L549.6 295.6L550.7 296.3L551.7 296.9L552.4 297.4L554.9 293.6L554.1 293.1L553.1 292.5L551.9 291.8L550.6 291L549.3 290.2L547.9 289.4L546.5 288.5L545.2 287.7L544 286.9L543.1 286.2L542.2 285.5L541.3 284.7L540.4 283.9L539.5 283.1L538.7 282.3L537.9 281.5L537.1 280.7L536.4 280L535.8 279.3L535.3 278.8Z" fill="#b6b6b9"/><circle cx="532" cy="282" r="6.5" fill="#66666c"/><circle cx="532.4" cy="281.6" r="5.7" fill="#838388"/><circle cx="532.8" cy="281.2" r="4.8" fill="#9a9a9e"/><circle cx="533.3" cy="280.7" r="3.4" fill="#a8a8ac"/>
<path d="M14.8 186L14.3 186.2L13.6 186.5L12.9 186.8L12.2 187.1L11.4 187.5L10.5 187.8L9.6 188.2L8.8 188.5L7.9 188.9L7 189.2L6.1 189.5L5 189.8L3.8 190.2L2.5 190.5L1.3 190.9L0 191.3L-1.1 191.6L-2.2 191.9L-3.1 192.1L-3.8 192.3L0.1 204.8L0.7 204.5L1.6 204.3L2.6 203.9L3.8 203.5L5.1 203.1L6.4 202.7L7.7 202.2L9 201.8L10.2 201.3L11.4 200.9L12.4 200.4L13.5 200L14.5 199.5L15.5 199L16.4 198.6L17.3 198.2L18.1 197.8L18.7 197.4L19.3 197.2L19.7 197Z" fill="#2c2a66"/><path d="M14.5 185.5L14 185.7L13.4 186L12.7 186.3L12 186.6L11.2 187L10.3 187.3L9.4 187.7L8.5 188L7.7 188.3L6.8 188.6L5.9 188.9L4.8 189.3L3.6 189.6L2.4 190L1.1 190.4L-0.1 190.7L-1.3 191L-2.3 191.3L-3.2 191.6L-3.9 191.8L-0.1 204.2L0.6 204L1.4 203.7L2.5 203.4L3.6 203L4.9 202.6L6.2 202.1L7.5 201.7L8.8 201.2L10 200.8L11.2 200.4L12.2 199.9L13.3 199.5L14.3 199L15.3 198.5L16.2 198.1L17.1 197.7L17.8 197.3L18.5 196.9L19 196.7L19.5 196.5Z" fill="#232327"/><path d="M14.6 185.7L14.1 185.9L13.5 186.2L12.8 186.5L12 186.8L11.2 187.2L10.4 187.5L9.5 187.9L8.6 188.2L7.8 188.5L6.9 188.8L6 189.1L4.9 189.5L3.7 189.8L2.4 190.2L1.2 190.6L-0.1 190.9L-1.2 191.2L-2.3 191.5L-3.2 191.8L-3.9 192L-0.5 202.9L0.2 202.7L1 202.4L2.1 202.1L3.2 201.7L4.5 201.3L5.8 200.9L7.1 200.4L8.4 200L9.6 199.6L10.7 199.1L11.8 198.7L12.8 198.3L13.8 197.8L14.8 197.4L15.7 196.9L16.5 196.5L17.3 196.1L18 195.8L18.5 195.5L19 195.3Z" fill="#353539"/><path d="M14.8 186L14.3 186.2L13.6 186.5L13 186.8L12.2 187.1L11.4 187.5L10.5 187.8L9.7 188.2L8.8 188.5L7.9 188.9L7 189.2L6.1 189.5L5 189.8L3.8 190.2L2.6 190.6L1.3 190.9L0 191.3L-1.1 191.6L-2.2 191.9L-3.1 192.2L-3.8 192.4L-0.9 201.5L-0.2 201.3L0.6 201.1L1.7 200.7L2.8 200.4L4.1 200L5.4 199.5L6.7 199.1L8 198.7L9.1 198.3L10.2 197.9L11.3 197.4L12.3 197L13.3 196.6L14.2 196.1L15.1 195.7L16 195.3L16.7 194.9L17.4 194.6L18 194.3L18.4 194.1Z" fill="#434348"/><path d="M15 186.6L14.5 186.8L13.9 187.1L13.2 187.4L12.5 187.7L11.6 188L10.8 188.4L9.9 188.8L9 189.1L8.1 189.5L7.3 189.8L6.3 190.1L5.2 190.4L4 190.8L2.7 191.2L1.5 191.5L0.2 191.9L-0.9 192.2L-2 192.5L-2.9 192.8L-3.6 193L-1.6 199.4L-0.9 199.2L-0 199L1 198.6L2.2 198.3L3.4 197.9L4.7 197.5L6 197.1L7.3 196.6L8.4 196.2L9.5 195.9L10.5 195.5L11.5 195.1L12.4 194.7L13.4 194.2L14.3 193.8L15.1 193.4L15.9 193.1L16.6 192.7L17.1 192.5L17.6 192.3Z" fill="#54545a"/><path d="M15.3 187.2L14.8 187.4L14.2 187.6L13.5 188L12.7 188.3L11.9 188.6L11.1 189L10.2 189.4L9.3 189.7L8.4 190.1L7.5 190.4L6.5 190.7L5.4 191.1L4.2 191.4L3 191.8L1.7 192.2L0.4 192.6L-0.7 192.9L-1.8 193.2L-2.7 193.5L-3.4 193.7L-2.2 197.4L-1.5 197.2L-0.6 196.9L0.4 196.6L1.6 196.2L2.8 195.9L4.1 195.5L5.4 195.1L6.6 194.7L7.8 194.3L8.8 193.9L9.7 193.6L10.7 193.2L11.6 192.8L12.6 192.4L13.4 192L14.3 191.6L15 191.2L15.7 190.9L16.3 190.7L16.8 190.5Z" fill="#66666d"/><circle cx="17" cy="191" r="6" fill="#232327"/><circle cx="16.8" cy="190.5" r="5.3" fill="#353539"/><circle cx="16.6" cy="190.1" r="4.4" fill="#434348"/><circle cx="16.3" cy="189.4" r="3.1" fill="#54545a"/>
<path d="M60 185.9L59.5 186.1L58.8 186.3L58 186.5L57 186.8L56 187.1L54.8 187.5L53.6 187.9L52.3 188.3L50.9 188.8L49.5 189.4L48 190L46.5 190.7L44.9 191.3L43.4 192L41.8 192.8L40.1 193.5L38.4 194.3L36.6 195L34.6 195.8L32.5 196.6L30 197.5L27.2 198.6L24.2 199.6L20.9 200.8L17.6 201.9L14.4 203L11.2 204.1L8.2 205.1L5.5 206L3.3 206.8L1.3 207.5L-0.4 208.1L-1.9 208.6L-3.2 209.1L-4.3 209.5L-5.3 209.8L-6.2 210.1L-7 210.4L-7.7 210.6L-8.3 210.8L-3.3 225.5L-2.7 225.3L-2 225.1L-1.2 224.8L-0.3 224.5L0.7 224.2L1.9 223.8L3.2 223.3L4.7 222.8L6.5 222.1L8.4 221.5L10.6 220.7L13.3 219.7L16.3 218.7L19.4 217.6L22.7 216.4L26.1 215.2L29.3 214L32.5 212.8L35.4 211.7L38 210.6L40.4 209.5L42.6 208.5L44.6 207.5L46.5 206.5L48.2 205.6L49.8 204.7L51.2 203.8L52.6 203L53.8 202.3L55 201.7L56.2 201.1L57.4 200.5L58.5 199.9L59.5 199.4L60.5 198.9L61.5 198.5L62.3 198.1L63.1 197.7L63.8 197.4L64.4 197.1Z" fill="#2c2a66"/><path d="M59.8 185.4L59.3 185.6L58.6 185.8L57.8 186L56.8 186.3L55.8 186.6L54.6 187L53.4 187.4L52.1 187.8L50.7 188.3L49.2 188.8L47.7 189.5L46.2 190.1L44.7 190.8L43.1 191.5L41.5 192.2L39.9 192.9L38.1 193.7L36.3 194.4L34.3 195.2L32.2 196L29.8 196.9L27 197.9L23.9 199L20.7 200.1L17.4 201.3L14.1 202.4L11 203.5L8 204.5L5.3 205.4L3 206.2L1.1 206.9L-0.6 207.4L-2.1 208L-3.4 208.4L-4.5 208.8L-5.5 209.1L-6.4 209.4L-7.2 209.7L-7.9 210L-8.5 210.2L-3.5 224.8L-2.9 224.6L-2.2 224.4L-1.5 224.1L-0.6 223.9L0.5 223.5L1.6 223.1L3 222.6L4.5 222.1L6.2 221.5L8.2 220.8L10.4 220L13.1 219.1L16 218L19.2 216.9L22.5 215.7L25.8 214.5L29.1 213.3L32.3 212.2L35.2 211L37.8 210L40.1 208.9L42.3 207.9L44.3 206.9L46.2 205.9L47.9 205L49.5 204.1L51 203.3L52.3 202.5L53.6 201.8L54.8 201.2L56 200.6L57.1 200L58.3 199.4L59.3 198.9L60.3 198.4L61.3 198L62.1 197.6L62.9 197.2L63.6 196.9L64.2 196.6Z" fill="#232327"/><path d="M59.9 185.6L59.3 185.8L58.7 186L57.8 186.2L56.9 186.5L55.9 186.8L54.7 187.1L53.5 187.5L52.2 188L50.8 188.5L49.3 189L47.8 189.7L46.3 190.3L44.8 191L43.2 191.7L41.6 192.4L40 193.1L38.2 193.9L36.4 194.7L34.4 195.4L32.3 196.3L29.9 197.2L27.1 198.2L24 199.2L20.8 200.4L17.5 201.5L14.2 202.6L11.1 203.7L8.1 204.7L5.4 205.6L3.1 206.4L1.2 207.1L-0.5 207.7L-2 208.2L-3.3 208.6L-4.5 209L-5.5 209.4L-6.3 209.7L-7.1 209.9L-7.8 210.2L-8.4 210.4L-4 223.3L-3.4 223.1L-2.7 222.9L-2 222.6L-1.1 222.3L-0.1 222L1.1 221.6L2.5 221.1L4 220.6L5.7 220L7.6 219.3L9.9 218.5L12.5 217.6L15.5 216.5L18.7 215.4L22 214.2L25.3 213L28.6 211.8L31.7 210.7L34.6 209.6L37.2 208.5L39.5 207.5L41.7 206.5L43.7 205.5L45.5 204.6L47.2 203.7L48.8 202.8L50.3 202L51.7 201.2L53 200.5L54.2 199.9L55.4 199.3L56.6 198.7L57.8 198.2L58.8 197.6L59.9 197.2L60.8 196.7L61.7 196.4L62.5 196L63.2 195.7L63.7 195.4Z" fill="#353539"/><path d="M60 185.9L59.5 186.1L58.8 186.3L58 186.5L57 186.8L56 187.1L54.8 187.5L53.6 187.9L52.3 188.4L50.9 188.9L49.5 189.4L48 190L46.5 190.7L44.9 191.4L43.4 192.1L41.8 192.8L40.2 193.5L38.4 194.3L36.6 195.1L34.6 195.9L32.5 196.7L30 197.6L27.2 198.6L24.2 199.7L21 200.8L17.7 201.9L14.4 203.1L11.2 204.1L8.2 205.2L5.6 206.1L3.3 206.9L1.3 207.5L-0.4 208.1L-1.9 208.6L-3.2 209.1L-4.3 209.5L-5.3 209.8L-6.2 210.1L-7 210.4L-7.7 210.6L-8.3 210.8L-4.6 221.7L-4 221.5L-3.3 221.3L-2.5 221L-1.6 220.7L-0.6 220.4L0.6 220L1.9 219.5L3.4 219L5.1 218.4L7.1 217.7L9.3 216.9L12 215.9L14.9 214.9L18.1 213.8L21.4 212.6L24.7 211.5L28 210.3L31.1 209.1L34 208L36.6 207L38.9 206L41 205L43 204.1L44.8 203.1L46.5 202.3L48.1 201.4L49.6 200.6L51 199.8L52.3 199.2L53.6 198.5L54.8 197.9L56.1 197.4L57.2 196.8L58.3 196.3L59.4 195.9L60.3 195.5L61.2 195.1L62 194.7L62.7 194.4L63.2 194.2Z" fill="#434348"/><path d="M60.2 186.5L59.7 186.7L59 186.9L58.2 187.1L57.3 187.4L56.2 187.7L55.1 188.1L53.9 188.5L52.6 189L51.2 189.5L49.8 190L48.3 190.6L46.8 191.3L45.3 192L43.7 192.7L42.1 193.4L40.5 194.2L38.7 194.9L36.9 195.7L34.9 196.5L32.8 197.4L30.3 198.3L27.5 199.3L24.4 200.4L21.2 201.5L17.9 202.7L14.6 203.8L11.5 204.9L8.5 205.9L5.8 206.8L3.5 207.6L1.6 208.3L-0.1 208.9L-1.6 209.4L-2.9 209.8L-4.1 210.2L-5.1 210.6L-5.9 210.9L-6.7 211.1L-7.4 211.4L-8 211.6L-5.4 219.2L-4.8 219L-4.1 218.8L-3.4 218.5L-2.5 218.2L-1.5 217.9L-0.3 217.5L1 217L2.5 216.5L4.3 215.9L6.2 215.2L8.5 214.4L11.1 213.5L14.1 212.4L17.3 211.3L20.6 210.2L23.9 209L27.1 207.8L30.2 206.7L33.1 205.6L35.6 204.6L37.9 203.7L40 202.7L42 201.8L43.8 200.9L45.5 200.1L47 199.3L48.5 198.5L50 197.7L51.3 197.1L52.6 196.4L53.9 195.8L55.2 195.3L56.4 194.8L57.5 194.3L58.6 193.9L59.6 193.5L60.5 193.1L61.3 192.8L61.9 192.5L62.5 192.3Z" fill="#54545a"/><path d="M60.5 187.1L59.9 187.3L59.2 187.5L58.4 187.7L57.5 188L56.5 188.4L55.3 188.7L54.1 189.2L52.8 189.6L51.5 190.1L50.1 190.7L48.6 191.3L47.1 192L45.6 192.7L44.1 193.4L42.5 194.1L40.8 194.9L39.1 195.7L37.2 196.5L35.2 197.3L33.1 198.1L30.6 199L27.8 200.1L24.7 201.2L21.5 202.3L18.2 203.4L14.9 204.6L11.7 205.7L8.8 206.7L6.1 207.6L3.8 208.4L1.9 209.1L0.2 209.6L-1.3 210.2L-2.6 210.6L-3.8 211L-4.8 211.4L-5.7 211.7L-6.4 211.9L-7.1 212.2L-7.8 212.4L-6.3 216.8L-5.6 216.6L-5 216.3L-4.2 216.1L-3.3 215.8L-2.3 215.4L-1.1 215L0.2 214.6L1.7 214L3.4 213.4L5.3 212.8L7.6 212L10.3 211L13.2 210L16.4 208.9L19.7 207.8L23 206.6L26.3 205.5L29.4 204.3L32.2 203.3L34.7 202.3L36.9 201.4L39 200.5L40.9 199.6L42.7 198.8L44.4 198L46 197.2L47.5 196.4L48.9 195.7L50.3 195L51.7 194.4L53.1 193.8L54.4 193.3L55.6 192.8L56.7 192.3L57.8 191.9L58.8 191.5L59.7 191.2L60.5 190.9L61.2 190.7L61.8 190.4Z" fill="#66666d"/><circle cx="62" cy="191" r="6" fill="#232327"/><circle cx="61.8" cy="190.5" r="5.3" fill="#353539"/><circle cx="61.6" cy="190.1" r="4.4" fill="#434348"/><circle cx="61.4" cy="189.4" r="3.1" fill="#54545a"/>
<path d="M109.5 185.7L108.9 185.8L108.2 186L107.3 186.2L106.3 186.5L105.1 186.8L103.8 187.2L102.4 187.6L100.8 188.2L99.1 188.8L97.3 189.5L95.3 190.3L93.2 191.2L91 192.1L88.7 193.1L86.3 194.2L83.8 195.3L81.2 196.4L78.6 197.5L75.8 198.7L72.9 199.9L69.8 201.1L66.5 202.4L63 203.8L59.4 205.2L55.7 206.7L51.9 208.2L48.1 209.6L44.3 211.1L40.6 212.5L37 213.9L33.4 215.2L29.7 216.6L26 218L22.2 219.4L18.5 220.8L14.9 222.1L11.4 223.4L8.2 224.6L5.2 225.6L2.6 226.6L0.4 227.4L-1.6 228.2L-3.4 228.8L-4.9 229.4L-6.2 229.9L-7.4 230.3L-8.4 230.7L-9.4 231L-10.2 231.3L-10.9 231.6L-4.5 249L-3.8 248.7L-3.1 248.4L-2.1 248.1L-1.1 247.7L0.1 247.3L1.5 246.8L3 246.2L4.8 245.5L6.9 244.8L9.1 243.9L11.7 242.9L14.6 241.8L17.8 240.6L21.3 239.3L24.9 237.9L28.6 236.5L32.4 235L36.2 233.5L39.9 232.1L43.6 230.6L47.1 229.2L50.8 227.7L54.6 226.2L58.4 224.6L62.2 223.1L66 221.5L69.6 220L73.2 218.4L76.5 216.9L79.7 215.5L82.7 214L85.6 212.6L88.3 211.1L90.9 209.7L93.4 208.3L95.7 207L97.8 205.8L99.8 204.6L101.6 203.6L103.3 202.7L104.8 201.9L106.2 201.1L107.5 200.5L108.7 199.9L109.8 199.3L110.7 198.9L111.6 198.4L112.5 198L113.2 197.7L113.9 197.4Z" fill="#2c2a66"/><path d="M109.3 185.2L108.7 185.3L108 185.5L107.1 185.7L106.1 186L104.9 186.3L103.6 186.6L102.2 187.1L100.6 187.6L98.9 188.2L97 188.9L95 189.7L92.9 190.6L90.7 191.5L88.4 192.5L86 193.5L83.5 194.6L80.9 195.7L78.3 196.9L75.5 198L72.6 199.2L69.5 200.4L66.2 201.7L62.7 203.1L59.1 204.5L55.4 206L51.6 207.4L47.8 208.9L44 210.3L40.3 211.7L36.7 213.1L33.1 214.5L29.4 215.9L25.7 217.3L21.9 218.6L18.2 220L14.6 221.4L11.1 222.6L7.9 223.8L5 224.9L2.4 225.8L0.1 226.7L-1.9 227.4L-3.6 228L-5.2 228.6L-6.5 229.1L-7.7 229.5L-8.7 229.9L-9.6 230.2L-10.4 230.5L-11.2 230.8L-4.8 248.2L-4.1 247.9L-3.3 247.6L-2.4 247.3L-1.4 247L-0.2 246.5L1.2 246L2.8 245.4L4.6 244.8L6.6 244L8.8 243.2L11.4 242.2L14.3 241.1L17.6 239.9L21 238.5L24.6 237.2L28.3 235.7L32.1 234.3L35.9 232.8L39.7 231.3L43.3 229.9L46.9 228.4L50.6 227L54.3 225.4L58.1 223.9L61.9 222.3L65.7 220.8L69.3 219.2L72.9 217.7L76.2 216.2L79.4 214.8L82.4 213.4L85.3 211.9L88 210.5L90.6 209.1L93.1 207.7L95.4 206.4L97.5 205.2L99.5 204L101.3 203L103 202.1L104.5 201.3L106 200.6L107.3 199.9L108.5 199.3L109.6 198.8L110.5 198.3L111.4 197.9L112.3 197.5L113 197.2L113.7 196.8Z" fill="#232327"/><path d="M109.4 185.3L108.8 185.5L108.1 185.7L107.2 185.9L106.2 186.2L105 186.5L103.7 186.8L102.3 187.3L100.7 187.8L99 188.4L97.1 189.1L95.1 189.9L93 190.8L90.8 191.7L88.5 192.7L86.1 193.8L83.6 194.9L81 196L78.4 197.1L75.6 198.3L72.7 199.5L69.6 200.7L66.3 202L62.8 203.4L59.2 204.8L55.5 206.2L51.7 207.7L47.9 209.2L44.1 210.6L40.4 212L36.8 213.4L33.3 214.7L29.5 216.1L25.8 217.5L22 218.9L18.3 220.3L14.7 221.6L11.2 222.9L8 224.1L5.1 225.2L2.5 226.1L0.2 226.9L-1.8 227.7L-3.5 228.3L-5.1 228.9L-6.4 229.4L-7.6 229.8L-8.6 230.2L-9.5 230.5L-10.3 230.8L-11.1 231.1L-5.5 246.4L-4.8 246.1L-4 245.8L-3.1 245.5L-2 245.1L-0.8 244.7L0.5 244.2L2.1 243.6L3.9 243L5.9 242.2L8.2 241.4L10.8 240.4L13.7 239.3L16.9 238.1L20.3 236.8L23.9 235.4L27.7 234L31.5 232.5L35.3 231L39 229.6L42.6 228.1L46.2 226.7L49.9 225.2L53.6 223.7L57.4 222.2L61.2 220.6L65 219.1L68.6 217.6L72.2 216.1L75.5 214.6L78.7 213.2L81.7 211.8L84.6 210.3L87.3 208.9L89.9 207.6L92.3 206.2L94.6 205L96.8 203.8L98.8 202.6L100.7 201.6L102.4 200.7L104 199.9L105.4 199.2L106.7 198.6L108 198L109.1 197.5L110.1 197L111 196.6L111.8 196.3L112.6 195.9L113.2 195.6Z" fill="#353539"/><path d="M109.5 185.7L108.9 185.9L108.2 186L107.3 186.3L106.3 186.5L105.2 186.8L103.9 187.2L102.4 187.7L100.8 188.2L99.1 188.8L97.3 189.5L95.3 190.3L93.2 191.2L91 192.1L88.7 193.1L86.3 194.2L83.8 195.3L81.3 196.4L78.6 197.6L75.8 198.7L72.9 199.9L69.8 201.2L66.5 202.5L63 203.9L59.4 205.3L55.7 206.7L51.9 208.2L48.1 209.7L44.3 211.1L40.6 212.5L37 213.9L33.4 215.2L29.7 216.6L26 218L22.2 219.4L18.5 220.8L14.9 222.1L11.4 223.4L8.2 224.6L5.3 225.7L2.7 226.6L0.4 227.5L-1.6 228.2L-3.3 228.8L-4.9 229.4L-6.2 229.9L-7.4 230.3L-8.4 230.7L-9.3 231L-10.2 231.3L-10.9 231.6L-6.2 244.5L-5.5 244.2L-4.7 243.9L-3.8 243.6L-2.7 243.2L-1.5 242.8L-0.2 242.3L1.4 241.7L3.2 241.1L5.2 240.3L7.5 239.5L10 238.5L13 237.4L16.2 236.2L19.6 234.9L23.2 233.5L27 232.1L30.8 230.6L34.5 229.2L38.3 227.7L41.9 226.3L45.5 224.9L49.2 223.4L52.9 221.9L56.7 220.4L60.5 218.8L64.3 217.3L67.9 215.8L71.4 214.3L74.8 212.9L77.9 211.5L80.9 210.1L83.8 208.7L86.5 207.3L89.1 206L91.5 204.7L93.9 203.4L96 202.2L98.1 201.2L100 200.2L101.7 199.3L103.3 198.5L104.8 197.8L106.2 197.2L107.4 196.6L108.6 196.1L109.6 195.7L110.5 195.3L111.4 194.9L112.1 194.6L112.8 194.3Z" fill="#434348"/><path d="M109.7 186.3L109.1 186.5L108.4 186.6L107.5 186.9L106.5 187.1L105.4 187.5L104.1 187.9L102.7 188.3L101.1 188.8L99.4 189.5L97.6 190.2L95.6 191L93.5 191.9L91.3 192.8L89.1 193.8L86.7 194.9L84.2 196L81.6 197.2L78.9 198.3L76.1 199.5L73.3 200.7L70.2 201.9L66.9 203.3L63.4 204.7L59.7 206.1L56 207.5L52.2 209L48.4 210.5L44.7 211.9L41 213.4L37.4 214.7L33.8 216.1L30.1 217.5L26.3 218.9L22.5 220.3L18.8 221.7L15.2 223L11.7 224.3L8.5 225.5L5.6 226.5L3 227.5L0.7 228.3L-1.3 229.1L-3 229.7L-4.6 230.3L-5.9 230.8L-7.1 231.2L-8.1 231.6L-9 231.9L-9.8 232.2L-10.6 232.5L-7.3 241.5L-6.6 241.3L-5.8 241L-4.8 240.6L-3.8 240.3L-2.6 239.8L-1.3 239.3L0.3 238.8L2.1 238.1L4.1 237.4L6.4 236.5L8.9 235.5L11.9 234.4L15.1 233.2L18.5 231.9L22.1 230.6L25.9 229.2L29.7 227.7L33.4 226.3L37.2 224.9L40.8 223.4L44.3 222L48 220.6L51.8 219.1L55.6 217.6L59.4 216.1L63.1 214.5L66.8 213L70.3 211.6L73.7 210.2L76.8 208.8L79.7 207.5L82.6 206.1L85.3 204.8L87.9 203.5L90.3 202.3L92.7 201.1L94.9 199.9L97 198.9L98.9 197.9L100.7 197L102.4 196.3L103.9 195.6L105.3 195L106.6 194.5L107.8 194L108.8 193.6L109.8 193.2L110.6 192.9L111.4 192.6L112 192.4Z" fill="#54545a"/><path d="M110 186.9L109.4 187.1L108.6 187.3L107.8 187.5L106.8 187.8L105.6 188.1L104.4 188.5L102.9 189L101.4 189.5L99.7 190.2L97.9 190.9L96 191.7L93.9 192.6L91.7 193.6L89.4 194.6L87.1 195.7L84.6 196.8L82 198L79.3 199.1L76.5 200.3L73.6 201.5L70.5 202.8L67.2 204.1L63.7 205.5L60.1 207L56.4 208.4L52.6 209.9L48.8 211.4L45 212.8L41.3 214.3L37.7 215.6L34.1 217L30.4 218.4L26.6 219.8L22.9 221.2L19.1 222.6L15.5 223.9L12.1 225.2L8.9 226.4L5.9 227.5L3.3 228.4L1.1 229.3L-0.9 230L-2.7 230.7L-4.2 231.2L-5.6 231.7L-6.7 232.1L-7.8 232.5L-8.7 232.9L-9.5 233.2L-10.2 233.4L-8.3 238.6L-7.6 238.4L-6.8 238.1L-5.9 237.7L-4.9 237.4L-3.7 236.9L-2.3 236.4L-0.8 235.9L1 235.2L3 234.5L5.3 233.6L7.9 232.7L10.8 231.6L14 230.4L17.5 229.1L21.1 227.7L24.8 226.3L28.6 224.9L32.4 223.5L36.1 222.1L39.7 220.7L43.3 219.3L47 217.8L50.7 216.3L54.5 214.8L58.3 213.3L62.1 211.8L65.7 210.4L69.2 208.9L72.5 207.5L75.7 206.2L78.6 204.9L81.4 203.6L84.1 202.4L86.7 201.1L89.2 199.9L91.5 198.8L93.8 197.7L95.9 196.6L97.8 195.7L99.7 194.8L101.4 194.1L103 193.4L104.5 192.9L105.8 192.3L107 191.9L108.1 191.5L109.1 191.2L109.9 190.9L110.7 190.6L111.3 190.4Z" fill="#66666d"/><circle cx="111.5" cy="191" r="6.2" fill="#232327"/><circle cx="111.3" cy="190.5" r="5.5" fill="#353539"/><circle cx="111.1" cy="190" r="4.6" fill="#434348"/><circle cx="110.8" cy="189.3" r="3.2" fill="#54545a"/>
<path d="M156.7 186.1L156.1 186.3L155.4 186.7L154.5 187.1L153.5 187.5L152.4 188L151.3 188.6L150.1 189.1L148.9 189.7L147.7 190.3L146.5 190.9L145.4 191.5L144.3 192.1L143.5 192.6L142.7 193.1L141.9 193.5L141.2 194L140.2 194.5L139 195.1L137.4 195.9L135.4 196.9L133 198L130.1 199.4L126.9 200.9L123.5 202.5L119.9 204.2L116.1 205.9L112.3 207.6L108.5 209.4L104.8 211.1L101.3 212.7L97.8 214.3L94.3 215.9L90.8 217.5L87.3 219.1L83.9 220.7L80.4 222.3L76.9 223.8L73.4 225.4L70 226.9L66.6 228.3L63.1 229.7L59.6 231.1L56.1 232.4L52.6 233.8L49.1 235.1L45.5 236.4L42 237.7L38.5 238.9L35.1 240.2L31.7 241.5L28.4 242.8L24.9 244.1L21.5 245.4L18.1 246.7L14.7 247.9L11.5 249.2L8.4 250.3L5.6 251.4L3 252.4L0.7 253.3L-1.4 254L-3.1 254.7L-4.7 255.3L-6 255.8L-7.2 256.2L-8.2 256.6L-9.1 256.9L-9.9 257.2L-10.6 257.5L-11.3 257.7L-4.1 277L-3.5 276.7L-2.8 276.5L-2 276.2L-1.1 275.9L-0.1 275.5L1.2 275L2.6 274.5L4.1 273.9L6 273.2L8 272.4L10.3 271.5L12.9 270.5L15.8 269.3L18.8 268.1L22.1 266.8L25.4 265.5L28.8 264.2L32.2 262.8L35.6 261.5L38.9 260.2L42.2 258.9L45.6 257.6L49 256.3L52.5 254.9L56 253.6L59.6 252.2L63.2 250.7L66.9 249.3L70.5 247.8L74.1 246.3L77.7 244.7L81.3 243.2L84.8 241.6L88.4 239.9L92 238.3L95.5 236.6L99 235L102.5 233.3L106 231.5L109.5 229.8L113 228L116.7 226.1L120.4 224.1L124.2 222.1L127.8 220.1L131.4 218.2L134.8 216.3L137.9 214.5L140.8 212.9L143.2 211.4L145.4 210.1L147.1 209L148.6 207.9L149.9 207L150.9 206.1L151.7 205.4L152.4 204.8L152.9 204.3L153.5 203.8L154.1 203.2L155 202.5L156 201.8L157 201.1L158.1 200.3L159 199.6L160 199L160.9 198.3L161.7 197.8L162.3 197.3L162.9 196.9Z" fill="#2c2a66"/><path d="M156.4 185.6L155.8 185.8L155.1 186.2L154.2 186.6L153.2 187L152.1 187.5L151 188L149.8 188.6L148.6 189.2L147.4 189.7L146.2 190.3L145 191L144 191.6L143.1 192.1L142.3 192.6L141.6 193L140.8 193.4L139.8 193.9L138.6 194.5L137.1 195.3L135.1 196.2L132.7 197.4L129.8 198.7L126.6 200.2L123.2 201.8L119.5 203.5L115.8 205.2L111.9 206.9L108.1 208.6L104.4 210.3L100.9 211.9L97.4 213.5L93.9 215.1L90.5 216.7L87 218.3L83.5 219.9L80 221.5L76.6 223.1L73.1 224.6L69.7 226.1L66.2 227.5L62.8 228.9L59.3 230.3L55.8 231.6L52.3 232.9L48.8 234.3L45.2 235.6L41.7 236.8L38.2 238.1L34.8 239.4L31.4 240.7L28 241.9L24.6 243.2L21.2 244.5L17.7 245.8L14.4 247.1L11.2 248.3L8.1 249.5L5.2 250.6L2.6 251.6L0.3 252.4L-1.7 253.2L-3.4 253.9L-5 254.4L-6.3 254.9L-7.5 255.4L-8.5 255.8L-9.4 256.1L-10.2 256.4L-10.9 256.7L-11.6 256.9L-4.4 276.1L-3.8 275.9L-3.1 275.6L-2.3 275.3L-1.4 275L-0.4 274.6L0.8 274.2L2.2 273.7L3.8 273.1L5.6 272.4L7.7 271.6L10 270.7L12.6 269.6L15.5 268.5L18.5 267.3L21.7 266L25.1 264.7L28.5 263.3L31.9 262L35.3 260.6L38.6 259.3L41.9 258L45.2 256.7L48.7 255.4L52.2 254.1L55.7 252.7L59.3 251.4L62.9 249.9L66.6 248.5L70.2 247L73.8 245.5L77.4 243.9L80.9 242.4L84.5 240.8L88.1 239.2L91.6 237.5L95.2 235.9L98.7 234.2L102.2 232.5L105.7 230.8L109.1 229.1L112.6 227.3L116.3 225.4L120.1 223.4L123.8 221.4L127.5 219.4L131.1 217.5L134.4 215.6L137.6 213.8L140.4 212.2L142.9 210.8L145 209.5L146.8 208.4L148.3 207.3L149.5 206.4L150.5 205.6L151.3 204.9L152 204.3L152.6 203.7L153.1 203.2L153.8 202.7L154.7 202L155.7 201.3L156.7 200.5L157.8 199.8L158.8 199.1L159.7 198.4L160.6 197.8L161.4 197.3L162.1 196.8L162.6 196.4Z" fill="#232327"/><path d="M156.5 185.8L155.9 186L155.2 186.3L154.3 186.7L153.3 187.2L152.2 187.7L151.1 188.2L149.9 188.8L148.7 189.3L147.5 189.9L146.3 190.5L145.1 191.2L144.1 191.8L143.2 192.3L142.4 192.8L141.7 193.2L140.9 193.6L140 194.1L138.7 194.7L137.2 195.5L135.2 196.5L132.8 197.6L129.9 199L126.7 200.4L123.3 202L119.6 203.7L115.9 205.4L112.1 207.2L108.3 208.9L104.6 210.6L101 212.2L97.6 213.8L94.1 215.4L90.6 217L87.1 218.6L83.6 220.2L80.2 221.8L76.7 223.3L73.2 224.9L69.8 226.4L66.3 227.8L62.9 229.2L59.4 230.6L55.9 231.9L52.4 233.2L48.9 234.6L45.3 235.9L41.8 237.1L38.4 238.4L34.9 239.7L31.5 241L28.1 242.2L24.7 243.5L21.3 244.8L17.9 246.1L14.5 247.4L11.3 248.6L8.2 249.8L5.4 250.9L2.7 251.9L0.4 252.7L-1.6 253.5L-3.3 254.2L-4.9 254.7L-6.2 255.2L-7.4 255.7L-8.4 256.1L-9.3 256.4L-10.1 256.7L-10.8 257L-11.5 257.2L-5.2 274.1L-4.6 273.9L-3.9 273.6L-3.1 273.3L-2.2 273L-1.1 272.6L0.1 272.2L1.5 271.7L3.1 271.1L4.9 270.4L6.9 269.6L9.2 268.7L11.8 267.7L14.7 266.5L17.8 265.3L21 264.1L24.3 262.7L27.7 261.4L31.1 260L34.5 258.7L37.8 257.4L41.1 256.1L44.5 254.8L48 253.5L51.5 252.2L55 250.8L58.6 249.4L62.2 248L65.8 246.6L69.4 245.1L73 243.6L76.6 242.1L80.1 240.5L83.7 238.9L87.2 237.3L90.8 235.7L94.3 234L97.8 232.4L101.3 230.7L104.8 229L108.3 227.3L111.8 225.5L115.5 223.6L119.2 221.7L123 219.7L126.7 217.8L130.2 215.8L133.6 214L136.8 212.3L139.6 210.7L142.1 209.3L144.2 208L145.9 206.9L147.4 205.9L148.6 205.1L149.6 204.3L150.4 203.6L151.1 203L151.7 202.5L152.3 202L153 201.4L154 200.7L155 200L156 199.3L157.1 198.6L158.1 197.9L159 197.3L159.9 196.7L160.7 196.1L161.4 195.7L162 195.3Z" fill="#353539"/><path d="M156.7 186.1L156.1 186.3L155.4 186.7L154.5 187.1L153.5 187.5L152.4 188L151.3 188.6L150.1 189.1L148.9 189.7L147.7 190.3L146.5 190.9L145.4 191.5L144.4 192.1L143.5 192.7L142.7 193.1L142 193.6L141.2 194L140.2 194.5L139 195.2L137.4 195.9L135.5 196.9L133 198.1L130.2 199.4L127 200.9L123.5 202.5L119.9 204.2L116.1 205.9L112.3 207.7L108.5 209.4L104.8 211.1L101.3 212.7L97.8 214.3L94.3 215.9L90.8 217.5L87.4 219.1L83.9 220.7L80.4 222.3L76.9 223.9L73.5 225.4L70 226.9L66.6 228.3L63.1 229.7L59.7 231.1L56.1 232.5L52.6 233.8L49.1 235.1L45.6 236.4L42 237.7L38.6 239L35.1 240.3L31.7 241.5L28.4 242.8L24.9 244.1L21.5 245.4L18.1 246.7L14.7 248L11.5 249.2L8.4 250.4L5.6 251.5L3 252.4L0.7 253.3L-1.3 254.1L-3.1 254.7L-4.7 255.3L-6 255.8L-7.2 256.3L-8.2 256.6L-9.1 257L-9.9 257.3L-10.6 257.5L-11.2 257.8L-6 272L-5.3 271.8L-4.6 271.5L-3.9 271.2L-2.9 270.9L-1.9 270.5L-0.7 270.1L0.7 269.5L2.3 268.9L4.1 268.3L6.1 267.5L8.4 266.6L11 265.6L13.9 264.4L16.9 263.2L20.2 262L23.5 260.7L26.9 259.3L30.3 258L33.7 256.6L37.1 255.3L40.4 254.1L43.7 252.8L47.2 251.5L50.7 250.1L54.2 248.8L57.8 247.4L61.4 246L65 244.6L68.6 243.1L72.2 241.6L75.7 240.1L79.3 238.6L82.8 237L86.3 235.4L89.9 233.8L93.4 232.1L96.9 230.4L100.4 228.8L103.9 227.1L107.3 225.4L110.9 223.6L114.6 221.8L118.3 219.9L122.1 217.9L125.8 216L129.4 214.1L132.8 212.3L135.9 210.6L138.8 209L141.2 207.7L143.3 206.5L145 205.4L146.5 204.5L147.6 203.6L148.6 202.9L149.4 202.2L150.1 201.7L150.7 201.1L151.4 200.6L152.2 200L153.2 199.4L154.2 198.7L155.2 198L156.3 197.3L157.3 196.6L158.3 196L159.2 195.4L160 194.9L160.7 194.5L161.3 194.1Z" fill="#434348"/><path d="M157 186.6L156.4 186.9L155.7 187.2L154.8 187.6L153.8 188.1L152.8 188.6L151.6 189.2L150.5 189.7L149.3 190.3L148.1 190.9L146.9 191.5L145.8 192.1L144.8 192.7L143.9 193.3L143.2 193.7L142.4 194.2L141.6 194.7L140.6 195.2L139.4 195.8L137.8 196.6L135.9 197.6L133.4 198.8L130.5 200.2L127.4 201.7L123.9 203.3L120.3 205L116.5 206.7L112.7 208.5L108.9 210.2L105.2 211.9L101.7 213.6L98.2 215.2L94.7 216.8L91.3 218.4L87.8 220L84.3 221.6L80.8 223.2L77.3 224.8L73.9 226.3L70.4 227.8L66.9 229.2L63.5 230.6L60 232L56.5 233.4L53 234.7L49.4 236L45.9 237.3L42.4 238.6L38.9 239.9L35.5 241.2L32.1 242.5L28.7 243.7L25.3 245L21.9 246.4L18.4 247.7L15.1 248.9L11.9 250.2L8.8 251.3L5.9 252.4L3.3 253.4L1 254.3L-1 255L-2.7 255.7L-4.3 256.3L-5.6 256.8L-6.8 257.2L-7.8 257.6L-8.7 257.9L-9.5 258.2L-10.2 258.5L-10.9 258.7L-7.2 268.7L-6.5 268.5L-5.9 268.2L-5.1 268L-4.2 267.6L-3.1 267.2L-1.9 266.8L-0.5 266.3L1 265.7L2.8 265L4.9 264.2L7.2 263.3L9.8 262.3L12.6 261.2L15.7 260L18.9 258.8L22.2 257.5L25.7 256.1L29.1 254.8L32.5 253.5L35.8 252.2L39.2 250.9L42.6 249.6L46 248.3L49.5 247L53.1 245.6L56.6 244.3L60.2 242.9L63.8 241.5L67.3 240.1L70.9 238.6L74.4 237.1L77.9 235.5L81.5 234L85 232.4L88.5 230.8L92 229.1L95.5 227.5L99 225.8L102.5 224.2L106 222.5L109.5 220.8L113.2 218.9L116.9 217.1L120.7 215.2L124.4 213.3L128 211.4L131.4 209.7L134.6 208L137.4 206.5L139.9 205.2L142 204L143.6 203L145 202.2L146.1 201.4L147.1 200.7L147.9 200.1L148.6 199.6L149.3 199.1L150 198.5L150.9 197.9L151.9 197.3L153 196.6L154.1 196L155.2 195.3L156.2 194.7L157.2 194.1L158.1 193.5L159 193L159.7 192.6L160.2 192.3Z" fill="#54545a"/><path d="M157.3 187.2L156.8 187.5L156 187.8L155.2 188.3L154.2 188.7L153.1 189.2L152 189.8L150.8 190.4L149.7 191L148.5 191.6L147.3 192.2L146.2 192.8L145.3 193.4L144.4 193.9L143.6 194.4L142.9 194.9L142.1 195.4L141.1 195.9L139.8 196.6L138.3 197.4L136.3 198.4L133.8 199.6L131 201L127.8 202.5L124.3 204.1L120.7 205.9L117 207.6L113.2 209.4L109.4 211.1L105.7 212.9L102.1 214.5L98.7 216.1L95.2 217.7L91.7 219.3L88.2 221L84.7 222.6L81.2 224.1L77.8 225.7L74.3 227.3L70.8 228.8L67.4 230.2L63.9 231.6L60.4 233L56.9 234.4L53.3 235.7L49.8 237L46.3 238.3L42.8 239.6L39.3 240.9L35.9 242.2L32.5 243.5L29.1 244.7L25.7 246.1L22.3 247.4L18.8 248.7L15.5 249.9L12.3 251.2L9.2 252.3L6.3 253.4L3.7 254.4L1.4 255.3L-0.6 256.1L-2.4 256.7L-3.9 257.3L-5.3 257.8L-6.4 258.3L-7.5 258.6L-8.4 259L-9.2 259.3L-9.9 259.5L-10.5 259.8L-8.4 265.5L-7.7 265.3L-7 265L-6.2 264.8L-5.3 264.4L-4.3 264L-3.1 263.6L-1.7 263.1L-0.2 262.5L1.6 261.8L3.6 261L5.9 260.2L8.6 259.2L11.4 258L14.5 256.9L17.7 255.6L21 254.3L24.4 253L27.9 251.7L31.3 250.4L34.6 249.1L38 247.8L41.4 246.5L44.9 245.2L48.4 243.9L51.9 242.6L55.5 241.2L59 239.9L62.6 238.5L66.1 237.1L69.6 235.6L73.1 234.1L76.6 232.6L80.1 231L83.6 229.4L87.2 227.8L90.7 226.2L94.2 224.6L97.7 222.9L101.1 221.3L104.6 219.6L108.1 217.9L111.8 216.2L115.6 214.3L119.4 212.5L123.1 210.6L126.7 208.8L130.1 207.1L133.3 205.5L136.1 204.1L138.6 202.8L140.6 201.7L142.3 200.7L143.6 199.9L144.7 199.3L145.6 198.7L146.4 198.1L147.1 197.6L147.8 197L148.7 196.5L149.6 195.9L150.7 195.3L151.8 194.6L152.9 194L154 193.3L155.1 192.7L156.1 192.2L157.1 191.6L157.9 191.2L158.6 190.8L159.2 190.5Z" fill="#66666d"/><circle cx="159.5" cy="191" r="6.2" fill="#232327"/><circle cx="159.2" cy="190.5" r="5.5" fill="#353539"/><circle cx="159" cy="190.1" r="4.6" fill="#434348"/><circle cx="158.6" cy="189.4" r="3.2" fill="#54545a"/>
<path d="M197.6 188L197.2 188.7L196.9 189.5L196.5 190.1L196.2 190.7L195.9 191.2L195.5 191.8L195.1 192.3L194.5 193L193.9 193.7L193 194.5L191.9 195.7L190.5 197L189 198.4L187.3 199.9L185.6 201.4L183.8 203L181.9 204.6L180 206.1L178.2 207.6L176.3 209L174.4 210.3L172.5 211.7L170.5 213.1L168.5 214.5L166.4 215.9L164.2 217.3L161.9 218.7L159.6 220.1L157.2 221.5L154.7 223L152.1 224.4L149.3 225.9L146.4 227.4L143.3 228.9L140.2 230.5L137.1 232L134 233.5L130.9 235.1L127.9 236.5L125.1 238L122.6 239.3L120.4 240.5L118.4 241.6L116.7 242.6L115 243.6L113.2 244.6L111.3 245.6L109 246.8L106.2 248.3L102.8 249.9L98.6 251.9L94 254.2L88.8 256.6L83.3 259.2L77.6 261.9L71.7 264.6L65.8 267.4L59.9 270L54.3 272.6L49 274.9L43.7 277.2L38.2 279.5L32.6 281.9L27 284.2L21.5 286.4L16.2 288.6L11.2 290.6L6.5 292.5L2.3 294.2L-1.3 295.7L-4.2 296.9L-6.6 298L-8.6 298.8L-10.1 299.5L-11.4 300.1L-12.4 300.5L-13.2 300.9L-13.8 301.2L-14.4 301.5L-15 301.8L-4 326.4L-3.3 326.1L-2.6 325.8L-2 325.5L-1.2 325.2L-0.3 324.8L0.9 324.3L2.3 323.6L4.2 322.8L6.5 321.8L9.4 320.5L12.8 319L16.9 317.2L21.5 315.2L26.5 313L31.8 310.7L37.3 308.3L42.9 305.8L48.6 303.2L54.2 300.7L59.6 298.1L65 295.5L70.7 292.7L76.5 289.8L82.4 286.9L88.3 283.9L94 281L99.4 278.2L104.6 275.5L109.2 273.1L113.4 270.9L116.9 269L120 267.3L122.5 265.9L124.7 264.6L126.7 263.4L128.4 262.3L130.1 261.2L131.8 260.2L133.6 259L135.9 257.8L138.4 256.3L141.2 254.8L144.1 253.2L147.1 251.5L150.3 249.8L153.4 248.1L156.5 246.3L159.6 244.5L162.6 242.8L165.4 241L168.1 239.3L170.6 237.7L173.1 236L175.5 234.4L177.9 232.7L180.2 231.1L182.4 229.3L184.6 227.6L186.7 225.8L188.8 224L190.8 222L192.8 219.9L194.7 217.8L196.6 215.7L198.3 213.6L199.9 211.5L201.3 209.6L202.7 207.7L203.9 206L205 204.3L206.1 202.7L207 201L207.8 199.4L208.4 198L208.8 196.7L209.1 195.5L209.3 194.6L209.4 194L209.4 193.7L209.4 193.4Z" fill="#2c2a66"/><path d="M197.1 187.8L196.7 188.5L196.3 189.3L196 189.9L195.7 190.5L195.3 191L195 191.5L194.5 192L194 192.6L193.3 193.3L192.5 194.1L191.3 195.2L190 196.5L188.4 197.9L186.8 199.4L185 200.9L183.2 202.4L181.3 204L179.5 205.5L177.6 206.9L175.8 208.3L173.9 209.7L172 211L170 212.4L168 213.8L165.9 215.1L163.7 216.5L161.5 217.9L159.1 219.3L156.7 220.8L154.2 222.2L151.6 223.6L148.9 225.1L146 226.6L142.9 228.1L139.8 229.6L136.6 231.2L133.5 232.7L130.4 234.2L127.5 235.7L124.6 237.1L122.1 238.5L119.9 239.7L117.9 240.8L116.2 241.8L114.5 242.7L112.7 243.7L110.8 244.7L108.5 245.9L105.7 247.4L102.3 249L98.2 251L93.5 253.2L88.3 255.7L82.8 258.3L77.1 260.9L71.2 263.7L65.3 266.4L59.5 269L53.8 271.5L48.5 273.9L43.2 276.2L37.8 278.5L32.2 280.8L26.6 283.1L21.1 285.3L15.7 287.5L10.7 289.5L6.1 291.4L1.9 293.1L-1.7 294.6L-4.7 295.8L-7.1 296.9L-9.1 297.7L-10.6 298.4L-11.9 299L-12.9 299.4L-13.7 299.8L-14.3 300.1L-14.9 300.4L-15.5 300.7L-4.5 325.3L-3.8 325L-3.1 324.7L-2.5 324.4L-1.7 324.1L-0.8 323.7L0.4 323.2L1.9 322.5L3.7 321.7L6.1 320.7L8.9 319.4L12.4 317.9L16.4 316.1L21 314.1L26 312L31.3 309.7L36.8 307.2L42.5 304.7L48.1 302.2L53.7 299.6L59.1 297.1L64.5 294.5L70.2 291.7L76 288.8L81.9 285.9L87.8 282.9L93.5 280L99 277.2L104.1 274.6L108.8 272.2L112.9 270L116.5 268.1L119.5 266.4L122 265L124.2 263.7L126.1 262.5L127.9 261.4L129.6 260.4L131.3 259.3L133.2 258.2L135.4 256.9L137.9 255.4L140.7 253.9L143.6 252.3L146.7 250.6L149.8 248.9L153 247.2L156.1 245.5L159.2 243.7L162.1 242L165 240.2L167.6 238.5L170.1 236.9L172.6 235.3L175 233.6L177.4 232L179.7 230.3L181.9 228.6L184.1 226.9L186.2 225.1L188.2 223.3L190.3 221.3L192.3 219.3L194.2 217.2L196 215.1L197.7 213L199.3 211L200.8 209.1L202.2 207.2L203.4 205.5L204.5 203.9L205.6 202.3L206.5 200.7L207.2 199.1L207.8 197.7L208.2 196.4L208.5 195.3L208.7 194.4L208.8 193.8L208.9 193.5L208.9 193.2Z" fill="#232327"/><path d="M197.3 187.9L196.9 188.6L196.5 189.4L196.2 190L195.9 190.5L195.5 191.1L195.2 191.6L194.7 192.1L194.2 192.7L193.5 193.4L192.7 194.3L191.5 195.4L190.2 196.7L188.6 198.1L187 199.6L185.2 201.1L183.4 202.6L181.6 204.2L179.7 205.7L177.8 207.2L176 208.5L174.1 209.9L172.2 211.3L170.2 212.6L168.1 214L166.1 215.4L163.9 216.8L161.6 218.2L159.3 219.6L156.9 221L154.4 222.5L151.8 223.9L149.1 225.4L146.1 226.9L143.1 228.4L139.9 229.9L136.8 231.5L133.7 233L130.6 234.5L127.6 236L124.8 237.4L122.2 238.8L120 240L118.1 241.1L116.4 242.1L114.7 243L112.9 244L111 245.1L108.7 246.3L105.9 247.7L102.5 249.4L98.4 251.3L93.7 253.6L88.5 256L83 258.6L77.3 261.3L71.4 264L65.5 266.7L59.6 269.4L54 271.9L48.7 274.3L43.4 276.5L37.9 278.9L32.3 281.2L26.7 283.5L21.2 285.7L15.9 287.9L10.9 289.9L6.2 291.8L2 293.5L-1.6 295L-4.5 296.2L-6.9 297.3L-8.9 298.1L-10.4 298.8L-11.7 299.4L-12.7 299.8L-13.5 300.2L-14.2 300.5L-14.7 300.8L-15.3 301.1L-5.6 322.8L-5 322.5L-4.3 322.2L-3.6 321.9L-2.9 321.5L-1.9 321.1L-0.8 320.6L0.7 320L2.6 319.1L5 318.1L7.8 316.8L11.3 315.3L15.3 313.6L19.9 311.6L24.9 309.4L30.2 307.1L35.8 304.7L41.4 302.2L47 299.7L52.6 297.2L58 294.7L63.4 292.1L69.1 289.4L74.9 286.5L80.8 283.6L86.7 280.7L92.4 277.8L97.9 275L103 272.4L107.7 270L111.8 267.8L115.3 265.9L118.3 264.3L120.9 262.9L123 261.6L124.9 260.4L126.7 259.4L128.3 258.3L130.1 257.3L132 256.1L134.3 254.8L136.9 253.4L139.6 251.9L142.6 250.3L145.6 248.6L148.8 246.9L151.9 245.2L155 243.5L158.1 241.8L161.1 240.1L163.9 238.3L166.5 236.7L169 235.1L171.5 233.5L173.8 231.9L176.2 230.2L178.4 228.6L180.7 226.9L182.8 225.3L184.9 223.5L186.9 221.7L189 219.8L190.9 217.9L192.8 215.8L194.7 213.8L196.4 211.8L198 209.8L199.5 207.9L200.9 206.1L202.1 204.4L203.3 202.9L204.3 201.3L205.2 199.8L205.9 198.4L206.5 197.1L206.9 195.9L207.2 194.8L207.4 193.9L207.5 193.3L207.6 192.9L207.7 192.6Z" fill="#353539"/><path d="M197.6 188L197.3 188.7L196.9 189.5L196.6 190.1L196.3 190.7L195.9 191.2L195.5 191.8L195.1 192.3L194.6 193L193.9 193.7L193 194.6L191.9 195.7L190.5 197L189 198.4L187.4 199.9L185.6 201.4L183.8 203L181.9 204.6L180.1 206.1L178.2 207.6L176.3 209L174.5 210.4L172.5 211.8L170.5 213.1L168.5 214.5L166.4 215.9L164.2 217.3L162 218.7L159.6 220.1L157.2 221.6L154.7 223L152.1 224.4L149.4 225.9L146.4 227.4L143.4 229L140.2 230.5L137.1 232L134 233.6L130.9 235.1L127.9 236.6L125.1 238L122.6 239.4L120.4 240.6L118.5 241.7L116.7 242.7L115 243.6L113.3 244.6L111.3 245.7L109 246.9L106.2 248.3L102.8 250L98.7 252L94 254.2L88.8 256.7L83.3 259.3L77.6 261.9L71.7 264.7L65.8 267.4L60 270.1L54.3 272.6L49 275L43.7 277.3L38.2 279.6L32.7 281.9L27.1 284.2L21.5 286.5L16.2 288.6L11.2 290.7L6.5 292.5L2.4 294.2L-1.2 295.7L-4.2 297L-6.6 298L-8.6 298.9L-10.1 299.6L-11.4 300.1L-12.4 300.6L-13.2 301L-13.8 301.3L-14.4 301.5L-15 301.8L-6.9 320.1L-6.2 319.8L-5.5 319.5L-4.9 319.2L-4.1 318.8L-3.2 318.4L-2 317.9L-0.5 317.2L1.4 316.4L3.8 315.4L6.6 314.1L10.1 312.6L14.2 310.8L18.8 308.9L23.8 306.7L29.1 304.5L34.6 302.1L40.3 299.6L45.9 297.1L51.5 294.6L56.8 292.1L62.2 289.6L67.9 286.9L73.7 284L79.6 281.1L85.5 278.2L91.2 275.4L96.7 272.6L101.8 270L106.5 267.6L110.6 265.5L114.2 263.6L117.1 262L119.6 260.6L121.8 259.4L123.7 258.3L125.4 257.2L127.1 256.2L128.8 255.1L130.8 254L133.1 252.7L135.7 251.2L138.5 249.7L141.5 248.1L144.5 246.5L147.7 244.8L150.8 243.1L153.9 241.4L157 239.7L159.9 238L162.7 236.4L165.3 234.7L167.8 233.1L170.2 231.6L172.6 230L174.9 228.4L177.2 226.8L179.3 225.2L181.5 223.5L183.5 221.8L185.6 220.1L187.6 218.3L189.5 216.3L191.4 214.4L193.3 212.4L195 210.4L196.6 208.5L198.2 206.7L199.6 204.9L200.8 203.3L201.9 201.8L203 200.3L203.8 198.9L204.5 197.6L205.1 196.4L205.5 195.3L205.8 194.3L206 193.4L206.2 192.8L206.3 192.4L206.4 192Z" fill="#434348"/><path d="M198.2 188.3L197.9 189L197.5 189.7L197.2 190.4L196.9 190.9L196.6 191.5L196.2 192.1L195.7 192.7L195.2 193.4L194.5 194.1L193.6 195L192.5 196.2L191.1 197.5L189.6 199L188 200.5L186.2 202.1L184.4 203.7L182.6 205.3L180.7 206.8L178.8 208.3L177 209.7L175.1 211.1L173.1 212.5L171.1 213.9L169.1 215.3L167 216.8L164.8 218.2L162.5 219.6L160.2 221L157.8 222.5L155.3 223.9L152.7 225.4L149.9 226.8L146.9 228.4L143.9 229.9L140.7 231.5L137.6 233L134.5 234.6L131.4 236.1L128.5 237.6L125.7 239L123.1 240.4L121 241.6L119 242.6L117.3 243.6L115.6 244.6L113.8 245.6L111.9 246.7L109.5 247.9L106.7 249.3L103.3 251L99.2 253L94.5 255.3L89.4 257.7L83.9 260.3L78.1 263L72.2 265.8L66.3 268.5L60.5 271.2L54.9 273.7L49.5 276.1L44.2 278.4L38.8 280.8L33.2 283.1L27.6 285.4L22.1 287.7L16.7 289.8L11.7 291.9L7 293.8L2.9 295.5L-0.7 297L-3.7 298.2L-6.1 299.3L-8 300.1L-9.6 300.8L-10.8 301.4L-11.8 301.8L-12.6 302.2L-13.3 302.5L-13.8 302.8L-14.4 303L-8.7 315.9L-8.1 315.6L-7.4 315.3L-6.8 315L-6 314.6L-5.1 314.2L-3.9 313.7L-2.3 313L-0.4 312.2L1.9 311.1L4.8 309.9L8.3 308.4L12.4 306.6L17.1 304.7L22.1 302.6L27.4 300.3L32.9 298L38.5 295.5L44.1 293.1L49.7 290.6L55 288.2L60.4 285.7L66.1 283L71.9 280.2L77.8 277.4L83.7 274.5L89.4 271.7L94.9 269L100 266.4L104.7 264L108.8 261.9L112.3 260.1L115.2 258.6L117.7 257.2L119.8 256L121.7 254.9L123.4 253.9L125.1 252.8L126.9 251.8L128.9 250.6L131.2 249.3L133.9 247.8L136.8 246.3L139.8 244.8L142.8 243.2L146 241.5L149.1 239.9L152.2 238.2L155.2 236.6L158.1 234.9L160.8 233.3L163.4 231.7L165.9 230.2L168.3 228.6L170.7 227.1L173 225.5L175.2 224L177.3 222.4L179.4 220.8L181.5 219.2L183.4 217.5L185.4 215.8L187.4 214L189.2 212.1L191.1 210.3L192.8 208.4L194.5 206.5L196.1 204.8L197.5 203.1L198.8 201.5L199.9 200.1L200.9 198.8L201.7 197.6L202.3 196.4L202.9 195.3L203.3 194.3L203.6 193.5L203.8 192.7L204 192L204.2 191.5L204.4 191.1Z" fill="#54545a"/><path d="M198.9 188.6L198.5 189.2L198.2 190L197.9 190.6L197.6 191.2L197.3 191.8L196.9 192.4L196.4 193.1L195.9 193.8L195.2 194.6L194.3 195.6L193.1 196.7L191.8 198.1L190.3 199.6L188.7 201.1L186.9 202.7L185.1 204.3L183.3 206L181.4 207.6L179.5 209.1L177.6 210.6L175.7 212L173.8 213.4L171.8 214.8L169.7 216.2L167.6 217.7L165.4 219.1L163.1 220.5L160.8 222L158.3 223.4L155.8 224.9L153.2 226.4L150.4 227.9L147.5 229.4L144.4 230.9L141.3 232.5L138.1 234.1L135 235.6L132 237.1L129 238.6L126.2 240.1L123.7 241.4L121.6 242.6L119.7 243.7L117.9 244.7L116.2 245.7L114.5 246.7L112.5 247.8L110.1 249L107.3 250.5L103.9 252.2L99.8 254.2L95.1 256.4L89.9 258.9L84.4 261.5L78.7 264.2L72.8 267L66.9 269.7L61.1 272.4L55.4 275L50.1 277.4L44.8 279.7L39.3 282L33.7 284.4L28.1 286.7L22.6 289L17.3 291.2L12.3 293.2L7.6 295.1L3.4 296.8L-0.1 298.3L-3.1 299.6L-5.5 300.6L-7.4 301.4L-9 302.1L-10.2 302.7L-11.2 303.1L-12 303.5L-12.7 303.8L-13.2 304.1L-13.8 304.4L-10.5 311.8L-9.9 311.5L-9.3 311.2L-8.6 310.9L-7.9 310.5L-6.9 310.1L-5.7 309.6L-4.1 308.9L-2.2 308L0.2 307L3.1 305.8L6.6 304.3L10.7 302.5L15.3 300.6L20.4 298.5L25.7 296.3L31.2 294L36.8 291.6L42.4 289.2L47.9 286.7L53.3 284.3L58.6 281.9L64.3 279.2L70.1 276.5L76 273.7L81.9 270.8L87.6 268.1L93.1 265.4L98.3 262.8L102.9 260.5L107.1 258.5L110.5 256.7L113.4 255.2L115.8 253.9L117.9 252.7L119.7 251.6L121.4 250.6L123.2 249.6L125 248.5L127.1 247.3L129.5 246L132.2 244.6L135.1 243.1L138.1 241.5L141.2 239.9L144.3 238.3L147.4 236.7L150.5 235.1L153.5 233.5L156.4 231.9L159.1 230.3L161.6 228.8L164.1 227.2L166.5 225.7L168.8 224.2L171 222.7L173.2 221.2L175.3 219.7L177.4 218.2L179.4 216.6L181.4 215.1L183.3 213.4L185.2 211.7L187.1 209.9L189 208.1L190.7 206.4L192.4 204.6L194 202.9L195.5 201.3L196.8 199.8L197.9 198.5L198.8 197.3L199.6 196.2L200.2 195.2L200.7 194.3L201.1 193.4L201.5 192.6L201.7 191.9L202 191.3L202.2 190.7L202.4 190.2Z" fill="#66666d"/><circle cx="203" cy="190.5" r="6.5" fill="#232327"/><circle cx="202.5" cy="190.2" r="5.7" fill="#353539"/><circle cx="202" cy="190" r="4.8" fill="#434348"/><circle cx="201.3" cy="189.6" r="3.4" fill="#54545a"/>
<path d="M245.7 188.9L245.5 189.6L245.3 190.5L245.1 191.3L244.9 192.1L244.7 193L244.4 193.8L244.1 194.7L243.8 195.5L243.4 196.4L242.9 197.3L242.3 198.4L241.6 199.7L240.7 201L239.9 202.5L238.9 203.9L237.9 205.4L236.9 206.8L235.8 208.3L234.8 209.6L233.7 210.9L232.5 212.2L231.3 213.5L229.9 214.8L228.5 216.2L226.9 217.6L225.3 219.1L223.7 220.6L222.1 222.1L220.5 223.6L218.9 225.1L217.4 226.6L216 228L214.7 229.4L213.5 230.7L212.2 232L211 233.3L209.7 234.5L208.5 235.8L207.2 237.1L205.7 238.4L204.1 239.9L202.7 241.4L201.4 242.7L200.2 243.9L198.9 245.1L197.6 246.3L196.1 247.6L194.2 249.1L192 250.9L189.2 252.9L185.9 255.3L182.1 258L177.9 260.9L173.4 264L168.6 267.3L163.7 270.6L158.6 274L153.6 277.3L148.6 280.6L143.7 283.8L138.9 286.9L133.8 290.1L128.6 293.3L123.2 296.5L117.9 299.8L112.6 303L107.4 306.1L102.4 309.2L97.6 312.1L93.2 314.9L89 317.6L85.1 320.1L81.4 322.5L77.9 324.9L74.5 327.1L71.4 329.2L68.4 331.3L65.6 333.2L62.9 335L60.3 336.7L57.9 338.3L55.6 339.8L53.4 341.3L51.3 342.7L49.4 344L47.6 345.1L46.1 346.2L44.7 347.1L43.4 347.9L42.4 348.6L59 373.6L60 372.9L61.2 372.1L62.6 371.2L64.2 370.2L66 369L68 367.7L70.1 366.3L72.3 364.8L74.7 363.2L77.1 361.5L79.8 359.7L82.5 357.8L85.3 355.8L88.3 353.7L91.3 351.5L94.5 349.3L97.9 346.9L101.4 344.4L105.1 341.9L109 339.2L113.2 336.4L117.7 333.4L122.5 330.3L127.6 327L132.8 323.6L138.1 320.2L143.4 316.7L148.7 313.2L153.8 309.6L158.8 306.2L163.7 302.7L168.6 299.1L173.6 295.4L178.6 291.7L183.5 288.1L188.2 284.5L192.6 281L196.8 277.7L200.7 274.6L204.1 271.8L207.1 269.2L209.7 266.8L211.9 264.6L213.8 262.6L215.4 260.7L216.8 259L218 257.4L219.1 256L220.1 254.7L221.3 253.3L222.6 251.7L224 250L225.3 248.5L226.5 246.9L227.6 245.5L228.7 244L229.8 242.6L230.9 241.2L232 239.8L233.2 238.4L234.4 237L235.7 235.5L237.1 234L238.5 232.4L240 230.7L241.6 229L243.1 227.3L244.7 225.4L246.2 223.5L247.6 221.6L248.8 219.7L250 217.7L251.1 215.8L252.1 213.8L253.1 211.9L253.9 210.1L254.7 208.2L255.4 206.5L256.1 204.9L256.7 203.2L257.3 201.5L257.7 199.8L258 198.1L258.2 196.6L258.4 195.2L258.4 194L258.4 193L258.5 192.2L258.4 191.7L258.5 191.3Z" fill="#2c2a66"/><path d="M245.1 188.8L244.9 189.5L244.7 190.4L244.5 191.2L244.3 192.1L244.1 192.9L243.8 193.7L243.5 194.5L243.2 195.4L242.8 196.2L242.3 197L241.7 198.1L240.9 199.4L240.1 200.7L239.2 202.1L238.3 203.6L237.3 205L236.3 206.4L235.2 207.8L234.1 209.2L233.1 210.5L231.9 211.7L230.7 213L229.3 214.3L227.9 215.7L226.4 217.1L224.8 218.5L223.1 220L221.5 221.5L219.9 223L218.3 224.6L216.8 226L215.4 227.4L214.1 228.8L212.8 230.1L211.5 231.4L210.3 232.7L209.1 233.9L207.8 235.2L206.5 236.4L205 237.8L203.4 239.3L202 240.7L200.7 242.1L199.4 243.2L198.2 244.4L196.9 245.6L195.4 246.9L193.5 248.3L191.3 250L188.6 252.1L185.3 254.4L181.5 257.1L177.3 260L172.7 263.1L168 266.4L163 269.7L158 273.1L152.9 276.4L147.9 279.7L143.1 282.8L138.2 285.9L133.1 289L127.9 292.3L122.6 295.5L117.2 298.7L111.9 301.9L106.7 305.1L101.7 308.1L96.9 311.1L92.5 313.9L88.3 316.5L84.4 319L80.7 321.5L77.1 323.8L73.8 326L70.6 328.2L67.6 330.2L64.8 332.1L62.1 333.9L59.6 335.6L57.2 337.2L54.8 338.7L52.6 340.2L50.6 341.6L48.7 342.9L46.9 344L45.3 345.1L43.9 346L42.7 346.8L41.7 347.5L58.3 372.5L59.3 371.8L60.5 371L61.9 370.1L63.5 369.1L65.3 367.9L67.2 366.6L69.3 365.2L71.6 363.7L73.9 362.1L76.4 360.4L79 358.6L81.7 356.7L84.6 354.7L87.5 352.6L90.6 350.5L93.8 348.2L97.2 345.8L100.7 343.4L104.4 340.8L108.3 338.1L112.5 335.4L117 332.4L121.9 329.2L126.9 325.9L132.2 322.6L137.5 319.1L142.8 315.6L148 312.1L153.2 308.6L158.1 305.2L163 301.7L168 298.2L173 294.5L177.9 290.8L182.8 287.2L187.5 283.6L192 280.1L196.2 276.8L200 273.8L203.4 270.9L206.4 268.4L209 266L211.2 263.8L213.1 261.8L214.7 260L216.1 258.3L217.3 256.8L218.4 255.4L219.4 254L220.6 252.6L222 251L223.3 249.4L224.6 247.8L225.8 246.3L226.9 244.9L228.1 243.5L229.2 242.1L230.3 240.7L231.4 239.3L232.5 237.8L233.7 236.4L235.1 234.9L236.5 233.4L237.9 231.8L239.5 230.2L241 228.5L242.6 226.7L244.1 224.9L245.6 223L246.9 221.1L248.2 219.2L249.4 217.3L250.5 215.4L251.5 213.5L252.4 211.6L253.3 209.7L254.1 207.9L254.8 206.2L255.5 204.6L256.1 203L256.6 201.3L257.1 199.6L257.4 198L257.6 196.5L257.8 195.1L257.8 194L257.9 192.9L257.9 192.1L257.9 191.6L257.9 191.2Z" fill="#232327"/><path d="M245.3 188.8L245.1 189.6L244.9 190.4L244.7 191.3L244.5 192.1L244.3 192.9L244.1 193.7L243.8 194.6L243.4 195.4L243 196.2L242.5 197.1L241.9 198.2L241.2 199.5L240.4 200.8L239.5 202.2L238.5 203.7L237.5 205.1L236.5 206.6L235.4 208L234.4 209.4L233.3 210.6L232.2 211.9L230.9 213.1L229.6 214.5L228.1 215.9L226.6 217.3L225 218.7L223.4 220.2L221.7 221.7L220.1 223.2L218.5 224.8L217 226.3L215.6 227.7L214.3 229L213 230.3L211.8 231.6L210.5 232.9L209.3 234.1L208 235.4L206.7 236.6L205.3 238L203.7 239.5L202.2 241L200.9 242.3L199.7 243.5L198.5 244.6L197.2 245.8L195.6 247.1L193.8 248.6L191.6 250.3L188.8 252.4L185.5 254.8L181.7 257.4L177.5 260.4L173 263.5L168.2 266.7L163.3 270L158.2 273.4L153.2 276.7L148.2 280L143.3 283.2L138.4 286.2L133.4 289.4L128.1 292.6L122.8 295.9L117.5 299.1L112.2 302.3L107 305.5L102 308.5L97.2 311.5L92.7 314.2L88.6 316.9L84.7 319.4L80.9 321.9L77.4 324.2L74.1 326.4L70.9 328.6L67.9 330.6L65.1 332.5L62.4 334.3L59.9 336L57.4 337.6L55.1 339.1L52.9 340.6L50.8 342L48.9 343.3L47.2 344.4L45.6 345.5L44.2 346.4L43 347.2L42 347.9L56.6 369.9L57.6 369.2L58.8 368.4L60.2 367.5L61.8 366.5L63.6 365.3L65.5 364L67.6 362.6L69.8 361.1L72.2 359.5L74.7 357.8L77.3 356L80 354.1L82.8 352.2L85.8 350.1L88.8 347.9L92.1 345.7L95.5 343.3L99 340.8L102.7 338.3L106.7 335.6L110.9 332.8L115.4 329.8L120.3 326.7L125.4 323.5L130.6 320.1L135.9 316.7L141.2 313.2L146.5 309.7L151.6 306.3L156.6 302.9L161.4 299.4L166.4 295.9L171.4 292.3L176.4 288.6L181.3 285L186 281.4L190.5 278L194.7 274.8L198.5 271.7L201.9 269L204.8 266.5L207.4 264.2L209.5 262.1L211.4 260.1L213 258.4L214.3 256.7L215.6 255.2L216.7 253.8L217.7 252.5L219 251.1L220.4 249.5L221.7 247.9L223 246.4L224.2 244.9L225.3 243.5L226.5 242.1L227.6 240.7L228.7 239.3L229.9 237.9L231.1 236.5L232.3 235L233.6 233.5L235.1 232L236.6 230.4L238.1 228.8L239.7 227.1L241.2 225.4L242.7 223.7L244.1 221.9L245.5 220L246.7 218.2L247.9 216.3L249 214.4L250 212.6L251 210.7L251.8 208.9L252.7 207.2L253.4 205.5L254 203.9L254.7 202.4L255.2 200.8L255.6 199.1L256 197.6L256.2 196.2L256.3 194.9L256.4 193.8L256.5 192.8L256.5 191.9L256.5 191.4L256.6 190.9Z" fill="#38383e"/><path d="M245.7 188.9L245.5 189.6L245.3 190.5L245.1 191.3L244.9 192.1L244.7 193L244.5 193.8L244.2 194.7L243.8 195.5L243.4 196.4L242.9 197.3L242.3 198.4L241.6 199.7L240.8 201.1L239.9 202.5L239 203.9L238 205.4L236.9 206.9L235.9 208.3L234.8 209.7L233.7 211L232.6 212.2L231.3 213.5L230 214.9L228.5 216.2L227 217.7L225.4 219.1L223.8 220.6L222.1 222.1L220.5 223.6L218.9 225.2L217.4 226.6L216.1 228.1L214.8 229.4L213.5 230.7L212.2 232L211 233.3L209.8 234.5L208.5 235.8L207.2 237.1L205.7 238.5L204.2 240L202.7 241.4L201.4 242.7L200.2 243.9L199 245.1L197.6 246.3L196.1 247.6L194.3 249.1L192 250.9L189.3 252.9L186 255.3L182.1 258L177.9 261L173.4 264.1L168.6 267.3L163.7 270.7L158.7 274L153.6 277.4L148.6 280.7L143.8 283.8L138.9 286.9L133.8 290.1L128.6 293.3L123.3 296.6L117.9 299.8L112.6 303L107.4 306.2L102.4 309.2L97.7 312.2L93.2 315L89.1 317.6L85.1 320.2L81.4 322.6L77.9 324.9L74.6 327.2L71.4 329.3L68.4 331.3L65.6 333.2L62.9 335L60.4 336.7L57.9 338.3L55.6 339.9L53.4 341.4L51.3 342.7L49.4 344L47.7 345.2L46.1 346.2L44.7 347.2L43.5 348L42.5 348.7L54.8 367.1L55.8 366.5L57 365.7L58.4 364.8L60 363.7L61.7 362.5L63.7 361.3L65.7 359.9L68 358.4L70.3 356.8L72.8 355.1L75.4 353.3L78.1 351.4L80.9 349.5L83.9 347.4L87 345.2L90.2 343L93.6 340.6L97.2 338.2L101 335.6L104.9 332.9L109.2 330.2L113.8 327.2L118.6 324.1L123.7 320.8L129 317.5L134.3 314.1L139.6 310.6L144.8 307.2L150 303.8L154.9 300.4L159.8 297L164.7 293.5L169.8 289.9L174.7 286.3L179.6 282.7L184.4 279.2L188.8 275.8L193 272.6L196.9 269.6L200.2 266.9L203.2 264.4L205.7 262.2L207.8 260.2L209.6 258.4L211.2 256.7L212.5 255.1L213.7 253.6L214.9 252.2L216 250.9L217.3 249.4L218.6 247.9L220 246.3L221.3 244.9L222.5 243.4L223.6 242L224.8 240.6L225.9 239.2L227.1 237.8L228.3 236.4L229.5 235L230.8 233.6L232.2 232.1L233.6 230.5L235.1 229L236.7 227.4L238.2 225.7L239.7 224L241.2 222.3L242.6 220.6L244 218.8L245.2 217.1L246.3 215.3L247.4 213.5L248.5 211.6L249.4 209.9L250.3 208.1L251.1 206.4L251.9 204.7L252.5 203.2L253.1 201.7L253.7 200.2L254.1 198.7L254.4 197.2L254.7 195.9L254.8 194.7L254.9 193.5L255 192.6L255.1 191.8L255.1 191.2L255.2 190.7Z" fill="#4a4a50"/><path d="M246.3 189L246.2 189.7L246 190.6L245.8 191.4L245.6 192.2L245.4 193.1L245.2 194L244.9 194.9L244.5 195.8L244.1 196.6L243.6 197.6L243 198.7L242.3 200L241.5 201.4L240.6 202.9L239.7 204.3L238.7 205.8L237.6 207.3L236.6 208.8L235.5 210.2L234.4 211.5L233.2 212.8L232 214.1L230.6 215.5L229.1 216.9L227.6 218.3L226 219.8L224.4 221.3L222.8 222.8L221.2 224.3L219.6 225.8L218.2 227.3L216.8 228.7L215.5 230.1L214.2 231.4L213 232.7L211.8 234L210.6 235.2L209.3 236.5L208 237.8L206.5 239.2L205 240.7L203.5 242.1L202.3 243.5L201 244.7L199.8 245.9L198.5 247.1L196.9 248.5L195 250L192.8 251.8L190 253.9L186.7 256.3L182.9 259L178.7 262L174.2 265.1L169.4 268.4L164.5 271.7L159.4 275.1L154.4 278.5L149.4 281.8L144.5 284.9L139.6 288.1L134.6 291.3L129.3 294.5L124 297.8L118.7 301L113.4 304.2L108.2 307.4L103.2 310.5L98.4 313.4L94 316.2L89.9 318.8L86 321.4L82.3 323.8L78.7 326.2L75.4 328.4L72.2 330.5L69.3 332.5L66.4 334.5L63.8 336.3L61.2 338L58.8 339.6L56.4 341.1L54.2 342.6L52.2 344L50.3 345.3L48.5 346.4L46.9 347.5L45.5 348.4L44.3 349.2L43.3 349.9L51.9 362.9L52.9 362.2L54.1 361.4L55.5 360.5L57.1 359.4L58.9 358.3L60.8 357L62.9 355.6L65.1 354.1L67.5 352.6L69.9 350.9L72.5 349.1L75.2 347.3L78.1 345.3L81 343.2L84.1 341.1L87.4 338.8L90.8 336.5L94.4 334L98.2 331.5L102.2 328.8L106.5 326L111.2 323.1L116.1 320L121.2 316.7L126.4 313.4L131.7 310.1L137.1 306.7L142.3 303.3L147.4 299.9L152.3 296.6L157.2 293.3L162.2 289.8L167.2 286.3L172.2 282.7L177.1 279.2L181.8 275.7L186.3 272.4L190.5 269.3L194.3 266.3L197.7 263.7L200.6 261.3L203 259.2L205.1 257.3L206.9 255.6L208.4 254L209.7 252.5L210.9 251.1L212.1 249.7L213.3 248.4L214.6 246.9L216 245.4L217.4 243.9L218.6 242.5L219.8 241.1L221 239.7L222.2 238.3L223.4 237L224.5 235.6L225.8 234.2L227.1 232.7L228.4 231.3L229.9 229.8L231.3 228.3L232.9 226.7L234.4 225.1L236 223.5L237.5 221.9L238.9 220.3L240.3 218.7L241.6 217L242.8 215.4L243.9 213.7L245 211.9L246 210.2L247 208.5L247.9 206.8L248.7 205.2L249.5 203.6L250.2 202.1L250.8 200.7L251.3 199.3L251.8 198L252.1 196.7L252.3 195.4L252.5 194.3L252.6 193.2L252.7 192.3L252.8 191.5L252.9 190.8L253 190.3Z" fill="#5b5b62"/><path d="M247 189.2L246.9 189.8L246.7 190.7L246.5 191.5L246.4 192.3L246.1 193.2L245.9 194.1L245.6 195.1L245.3 196L244.9 196.9L244.4 197.9L243.8 199.1L243 200.4L242.2 201.8L241.4 203.3L240.4 204.8L239.4 206.3L238.4 207.8L237.3 209.3L236.2 210.7L235.1 212.1L234 213.4L232.7 214.7L231.3 216.1L229.9 217.6L228.3 219L226.7 220.5L225.1 222L223.5 223.5L221.9 225L220.4 226.5L219 228L217.6 229.4L216.3 230.8L215.1 232.1L213.8 233.4L212.6 234.7L211.4 236L210.1 237.3L208.8 238.6L207.3 240L205.8 241.5L204.4 242.9L203.2 244.3L201.9 245.5L200.7 246.7L199.3 248L197.7 249.4L195.9 251L193.6 252.8L190.8 254.9L187.5 257.3L183.7 260.1L179.5 263.1L175 266.2L170.2 269.5L165.3 272.9L160.2 276.3L155.2 279.7L150.2 283L145.3 286.2L140.5 289.3L135.4 292.5L130.1 295.8L124.8 299L119.5 302.3L114.2 305.5L109 308.7L104 311.8L99.3 314.7L94.9 317.5L90.7 320.1L86.8 322.7L83.1 325.1L79.6 327.5L76.3 329.7L73.2 331.8L70.2 333.9L67.3 335.8L64.7 337.6L62.1 339.3L59.7 340.9L57.3 342.5L55.1 344L53.1 345.3L51.2 346.6L49.4 347.8L47.8 348.8L46.4 349.8L45.2 350.6L44.2 351.3L49.2 358.8L50.2 358.1L51.4 357.3L52.8 356.3L54.4 355.3L56.1 354.1L58.1 352.8L60.1 351.5L62.4 350L64.7 348.4L67.2 346.8L69.7 345L72.4 343.2L75.3 341.2L78.2 339.2L81.3 337L84.6 334.8L88.1 332.4L91.7 330L95.6 327.4L99.6 324.8L103.9 322L108.6 319L113.5 315.9L118.7 312.7L123.9 309.5L129.3 306.1L134.6 302.8L139.8 299.4L144.9 296.1L149.8 292.9L154.7 289.6L159.7 286.2L164.7 282.7L169.7 279.2L174.6 275.7L179.4 272.3L183.9 269.1L188.1 266L191.9 263.1L195.3 260.6L198.1 258.3L200.5 256.3L202.5 254.5L204.2 252.9L205.6 251.4L206.9 250L208.1 248.7L209.3 247.3L210.6 245.9L212 244.5L213.4 243L214.8 241.6L216 240.2L217.3 238.8L218.5 237.5L219.7 236.1L220.9 234.8L222.1 233.4L223.3 232L224.7 230.5L226.1 229L227.6 227.5L229.1 226L230.7 224.5L232.3 223L233.8 221.4L235.3 219.9L236.7 218.3L238.1 216.8L239.3 215.3L240.5 213.7L241.6 212.1L242.7 210.5L243.7 208.8L244.7 207.2L245.6 205.5L246.4 204L247.2 202.5L247.9 201L248.5 199.7L249 198.5L249.4 197.3L249.8 196.1L250 195L250.2 193.9L250.4 192.9L250.5 192L250.6 191.2L250.7 190.5L250.9 189.9Z" fill="#6c6c73"/><circle cx="251.5" cy="190" r="6.5" fill="#232327"/><circle cx="250.9" cy="189.9" r="5.7" fill="#38383e"/><circle cx="250.4" cy="189.8" r="4.8" fill="#4a4a50"/><circle cx="249.7" cy="189.6" r="3.4" fill="#5b5b62"/>
<path d="M536 195.8L536.3 196L536.7 196.3L537.2 196.7L537.8 197.1L538.5 197.5L539.2 198L540 198.5L540.8 199.1L541.6 199.6L542.5 200.1L543.4 200.7L544.3 201.2L545.3 201.8L546.2 202.3L547.2 202.9L548.1 203.4L548.9 203.8L549.6 204.2L550.2 204.6L550.6 204.8L556.8 192.3L556.3 192L555.6 191.8L554.8 191.4L554 191.1L553.1 190.7L552.1 190.3L551.2 189.9L550.4 189.5L549.6 189.2L548.9 188.9L548.4 188.5L547.7 188.2L547.1 187.8L546.5 187.3L545.9 186.9L545.3 186.5L544.7 186.1L544.2 185.7L543.7 185.4L543.3 185.1Z" fill="#40406e"/><path d="M536.3 195.4L536.6 195.6L537 195.9L537.6 196.2L538.2 196.6L538.8 197.1L539.5 197.6L540.3 198.1L541.1 198.6L541.9 199.1L542.8 199.6L543.7 200.2L544.6 200.7L545.5 201.2L546.5 201.8L547.4 202.3L548.3 202.8L549.2 203.3L549.9 203.7L550.5 204L550.9 204.3L557.1 191.7L556.6 191.5L555.9 191.2L555.1 190.9L554.2 190.6L553.3 190.2L552.4 189.8L551.5 189.4L550.6 189L549.9 188.7L549.2 188.4L548.7 188L548 187.7L547.4 187.3L546.8 186.9L546.2 186.4L545.6 186L545 185.6L544.5 185.2L544.1 184.9L543.7 184.6Z" fill="#66666c"/><path d="M537.1 194.2L537.4 194.5L537.8 194.7L538.3 195.1L538.9 195.5L539.6 196L540.3 196.4L541 196.9L541.8 197.5L542.6 198L543.4 198.5L544.3 199L545.2 199.5L546.1 200L547.1 200.5L548 201.1L548.9 201.5L549.8 202L550.5 202.4L551.1 202.7L551.6 203L557 191.9L556.5 191.7L555.8 191.4L555 191.1L554.1 190.7L553.2 190.4L552.3 190L551.4 189.6L550.5 189.2L549.8 188.9L549.1 188.5L548.5 188.2L547.9 187.9L547.3 187.5L546.7 187L546.1 186.6L545.5 186.2L544.9 185.8L544.4 185.4L543.9 185.1L543.6 184.8Z" fill="#838388"/><path d="M537.9 193.1L538.2 193.3L538.6 193.6L539.2 193.9L539.7 194.3L540.4 194.8L541.1 195.3L541.8 195.8L542.6 196.3L543.4 196.8L544.2 197.2L545 197.7L545.9 198.2L546.8 198.7L547.7 199.2L548.7 199.7L549.6 200.2L550.4 200.6L551.2 201L551.8 201.3L552.2 201.6L556.8 192.3L556.3 192.1L555.6 191.8L554.8 191.5L554 191.1L553.1 190.7L552.1 190.3L551.2 190L550.3 189.6L549.6 189.2L548.9 188.9L548.3 188.6L547.7 188.2L547.1 187.8L546.5 187.3L545.8 186.9L545.2 186.5L544.7 186.1L544.2 185.7L543.7 185.4L543.3 185.1Z" fill="#9a9a9e"/><path d="M539.1 191.2L539.5 191.5L539.9 191.8L540.4 192.1L541 192.5L541.6 193L542.3 193.4L543 193.9L543.8 194.4L544.5 194.9L545.3 195.3L546 195.8L546.9 196.2L547.8 196.7L548.8 197.2L549.7 197.7L550.6 198.1L551.4 198.5L552.2 198.9L552.8 199.2L553.3 199.5L556.5 192.9L556 192.7L555.3 192.4L554.5 192.1L553.7 191.7L552.8 191.3L551.8 190.9L550.9 190.5L550 190.1L549.3 189.8L548.6 189.4L548 189.1L547.4 188.7L546.7 188.3L546.1 187.9L545.5 187.5L544.9 187L544.3 186.6L543.8 186.3L543.3 185.9L543 185.7Z" fill="#a8a8ac"/><path d="M540.4 189.5L540.7 189.7L541.2 190L541.7 190.4L542.2 190.8L542.9 191.2L543.5 191.7L544.2 192.1L544.9 192.6L545.6 193L546.3 193.4L547.1 193.8L547.9 194.3L548.8 194.7L549.7 195.2L550.7 195.6L551.6 196.1L552.4 196.5L553.2 196.8L553.8 197.1L554.3 197.4L556.2 193.6L555.6 193.4L555 193.1L554.2 192.8L553.4 192.4L552.4 192L551.5 191.6L550.6 191.2L549.7 190.8L548.9 190.4L548.3 190L547.6 189.7L547 189.3L546.4 188.9L545.7 188.5L545.1 188L544.5 187.6L543.9 187.2L543.4 186.8L542.9 186.5L542.6 186.2Z" fill="#b6b6b9"/><circle cx="540" cy="190" r="6.5" fill="#66666c"/><circle cx="540.3" cy="189.5" r="5.7" fill="#838388"/><circle cx="540.6" cy="189.1" r="4.8" fill="#9a9a9e"/><circle cx="541" cy="188.4" r="3.4" fill="#a8a8ac"/>
<path d="M489.2 194L489.1 193.8L488.9 193.6L489.1 194L489.5 194.9L490.1 196.1L490.9 197.4L492.1 198.8L493.5 200.1L495.2 201.2L497 202.2L499 203L501 203.8L503.1 204.4L505.2 205.1L507.5 205.7L509.7 206.4L512 207L514.2 207.7L516.3 208.4L518.3 209.2L520.4 210.1L522.7 211L525.2 212.1L527.7 213.2L530.3 214.4L532.8 215.5L535.2 216.6L537.6 217.7L539.7 218.7L541.6 219.5L543.3 220.3L544.9 220.9L546.3 221.6L547.5 222.1L548.7 222.6L549.7 223L550.6 223.4L551.3 223.8L552 224.1L552.6 224.3L558.8 209L558.2 208.8L557.5 208.5L556.7 208.2L555.8 207.9L554.8 207.5L553.7 207L552.4 206.6L551 206L549.5 205.4L547.8 204.8L546 204L543.9 203.2L541.5 202.2L539 201.2L536.4 200.1L533.8 199L531.1 197.9L528.4 196.9L525.8 195.9L523.3 195L520.7 194.3L518.2 193.6L515.7 193L513.2 192.4L510.9 191.9L508.7 191.5L506.7 191L504.9 190.6L503.5 190.2L502.5 189.9L501.9 189.6L501.6 189.4L501.4 189.4L501.4 189.3L501.3 189.3L501.2 189.2L501.1 188.9L500.9 188.3L500.4 187.4L499.9 186.6Z" fill="#40406e"/><path d="M489.7 193.7L489.6 193.6L489.5 193.4L489.6 193.8L490 194.7L490.6 195.8L491.4 197L492.5 198.3L493.9 199.6L495.5 200.7L497.3 201.7L499.2 202.5L501.2 203.2L503.2 203.8L505.4 204.5L507.6 205.1L509.9 205.8L512.1 206.4L514.3 207.1L516.5 207.8L518.5 208.6L520.6 209.4L523 210.4L525.5 211.5L528 212.6L530.6 213.7L533.1 214.9L535.5 216L537.8 217.1L540 218L541.9 218.9L543.6 219.6L545.1 220.3L546.5 220.9L547.8 221.4L548.9 221.9L549.9 222.4L550.8 222.8L551.6 223.1L552.3 223.4L552.9 223.6L559.1 208.4L558.5 208.1L557.8 207.9L557 207.6L556.1 207.2L555.1 206.8L553.9 206.4L552.7 205.9L551.3 205.4L549.7 204.8L548.1 204.1L546.2 203.4L544.1 202.5L541.8 201.6L539.3 200.5L536.7 199.4L534 198.4L531.3 197.3L528.6 196.3L526 195.3L523.5 194.4L520.9 193.6L518.4 193L515.8 192.4L513.4 191.8L511 191.3L508.8 190.9L506.8 190.4L505.1 190L503.7 189.6L502.7 189.3L502.2 189.1L501.9 189L501.8 188.9L501.8 189L501.8 189L501.8 188.9L501.6 188.6L501.4 188.1L500.9 187.1L500.3 186.3Z" fill="#66666c"/><path d="M490.8 192.9L490.8 192.9L490.7 192.8L490.9 193.3L491.2 194.1L491.7 195.1L492.5 196.2L493.5 197.4L494.7 198.5L496.2 199.5L497.8 200.4L499.6 201.1L501.6 201.8L503.6 202.5L505.7 203.1L508 203.7L510.2 204.3L512.5 205L514.8 205.6L516.9 206.4L519 207.1L521.2 208L523.6 208.9L526.1 210L528.6 211.1L531.2 212.3L533.7 213.4L536.2 214.5L538.5 215.5L540.6 216.5L542.6 217.3L544.2 218.1L545.8 218.7L547.2 219.3L548.4 219.9L549.6 220.4L550.6 220.8L551.5 221.2L552.3 221.5L552.9 221.8L553.5 222.1L559 208.6L558.4 208.4L557.7 208.1L556.9 207.8L556 207.5L555 207.1L553.8 206.6L552.6 206.1L551.2 205.6L549.6 205L548 204.4L546.1 203.6L544 202.8L541.7 201.8L539.2 200.8L536.6 199.7L533.9 198.6L531.2 197.5L528.6 196.5L525.9 195.5L523.4 194.7L520.9 193.9L518.3 193.2L515.8 192.6L513.3 192L511 191.5L508.8 191.1L506.8 190.6L505 190.2L503.6 189.8L502.6 189.5L502.1 189.3L501.8 189.1L501.7 189.1L501.7 189.1L501.6 189.1L501.6 189L501.4 188.7L501.2 188.2L500.7 187.2L500.2 186.4Z" fill="#838388"/><path d="M491.9 192.1L492 192.2L492 192.3L492.2 192.7L492.5 193.4L493 194.3L493.6 195.3L494.5 196.3L495.6 197.3L496.9 198.2L498.4 199L500.1 199.7L502 200.4L504 201L506.1 201.6L508.3 202.2L510.6 202.8L512.9 203.4L515.2 204.1L517.4 204.8L519.6 205.5L521.8 206.4L524.2 207.4L526.7 208.4L529.3 209.5L531.9 210.7L534.4 211.8L536.9 212.9L539.2 213.9L541.3 214.9L543.2 215.7L544.9 216.4L546.5 217.1L547.8 217.7L549.1 218.2L550.2 218.7L551.3 219.1L552.2 219.5L552.9 219.8L553.6 220.1L554.2 220.4L558.8 209.1L558.2 208.8L557.5 208.6L556.7 208.3L555.8 207.9L554.8 207.5L553.7 207.1L552.4 206.6L551 206L549.5 205.4L547.8 204.8L545.9 204.1L543.8 203.2L541.5 202.2L539 201.2L536.4 200.1L533.7 199L531 197.9L528.4 196.9L525.8 195.9L523.3 195.1L520.7 194.3L518.2 193.6L515.7 193L513.2 192.5L510.9 192L508.7 191.5L506.7 191L504.9 190.6L503.5 190.2L502.5 189.9L501.9 189.6L501.6 189.5L501.4 189.4L501.3 189.3L501.3 189.3L501.2 189.2L501.1 188.9L500.8 188.3L500.4 187.4L499.8 186.6Z" fill="#9a9a9e"/><path d="M493.8 190.9L493.9 191.1L494 191.4L494.2 191.8L494.5 192.4L494.9 193.2L495.4 193.9L496.1 194.7L497 195.5L498 196.3L499.4 196.9L500.9 197.6L502.7 198.1L504.6 198.7L506.7 199.3L508.9 199.8L511.2 200.4L513.5 201L515.9 201.7L518.2 202.4L520.4 203.1L522.7 204L525.2 205L527.7 206L530.3 207.1L532.9 208.3L535.5 209.4L537.9 210.5L540.3 211.5L542.4 212.4L544.3 213.2L546 213.9L547.5 214.6L548.9 215.1L550.2 215.7L551.3 216.1L552.3 216.5L553.2 216.9L554 217.2L554.7 217.5L555.3 217.8L558.5 209.8L557.9 209.6L557.2 209.3L556.4 209L555.5 208.7L554.5 208.3L553.3 207.8L552.1 207.3L550.7 206.8L549.2 206.2L547.5 205.5L545.6 204.8L543.5 203.9L541.2 202.9L538.7 201.9L536.1 200.8L533.4 199.7L530.8 198.6L528.1 197.6L525.5 196.7L523 195.8L520.5 195L518 194.3L515.5 193.7L513 193.2L510.7 192.6L508.5 192.2L506.5 191.7L504.7 191.3L503.3 190.9L502.2 190.5L501.5 190.2L501.2 190L500.9 189.8L500.8 189.7L500.7 189.6L500.6 189.5L500.5 189.1L500.2 188.6L499.8 187.7L499.3 187Z" fill="#a8a8ac"/><path d="M495.5 189.6L495.8 190L496 190.5L496.2 191L496.5 191.5L496.8 192L497.1 192.6L497.6 193.2L498.3 193.7L499.2 194.3L500.3 194.9L501.7 195.4L503.3 195.9L505.2 196.5L507.3 197L509.5 197.5L511.8 198.1L514.2 198.7L516.6 199.3L518.9 200L521.2 200.8L523.6 201.7L526.1 202.6L528.7 203.7L531.3 204.8L533.9 205.9L536.5 207L539 208.1L541.3 209.1L543.4 210L545.3 210.8L547 211.5L548.5 212.1L549.9 212.6L551.2 213.2L552.3 213.6L553.3 214L554.2 214.4L555 214.7L555.7 215L556.3 215.2L558.2 210.7L557.6 210.4L556.9 210.1L556.1 209.8L555.2 209.5L554.2 209.1L553 208.6L551.8 208.1L550.4 207.6L548.8 207L547.2 206.3L545.3 205.6L543.2 204.7L540.9 203.7L538.4 202.7L535.8 201.6L533.1 200.5L530.4 199.4L527.8 198.4L525.2 197.4L522.7 196.5L520.3 195.8L517.8 195.1L515.3 194.5L512.8 193.9L510.5 193.4L508.3 192.9L506.3 192.4L504.5 192L503 191.6L501.9 191.2L501.2 190.8L500.7 190.6L500.4 190.3L500.3 190.2L500.1 190L500 189.8L499.8 189.4L499.6 188.9L499.2 188.1L498.7 187.4Z" fill="#b6b6b9"/><circle cx="495" cy="190" r="6.5" fill="#66666c"/><circle cx="495.4" cy="189.6" r="5.7" fill="#838388"/><circle cx="495.8" cy="189.3" r="4.8" fill="#9a9a9e"/><circle cx="496.4" cy="188.7" r="3.4" fill="#a8a8ac"/>
<path d="M439.7 193.2L439.6 192.9L439.5 192.5L439.5 193.1L439.8 194.3L440.3 196L441.2 197.9L442.6 199.8L444.3 201.6L446.4 203.2L448.8 204.6L451.5 205.9L454.4 207L457.5 208.2L460.9 209.3L464.4 210.5L468 211.7L471.7 213L475.3 214.2L478.8 215.5L482.2 216.7L485.6 218.1L489.1 219.5L492.8 221.1L496.5 222.6L500.2 224.2L503.9 225.7L507.4 227.3L510.8 228.8L514.1 230.2L517.1 231.6L519.9 232.8L522.5 234.1L525.1 235.4L527.6 236.6L529.9 237.8L532.2 239L534.4 240.1L536.5 241.2L538.5 242.2L540.3 243.1L542 244L543.5 244.7L544.9 245.4L546.2 246L547.3 246.5L548.3 247L549.2 247.4L550 247.8L550.7 248.1L551.3 248.4L560 229.3L559.4 229L558.7 228.7L557.9 228.4L556.9 228L555.9 227.5L554.8 227L553.5 226.5L552.1 225.9L550.6 225.2L548.9 224.5L547.1 223.7L545.2 222.9L543.1 221.9L540.9 220.9L538.4 219.8L535.9 218.7L533.2 217.5L530.3 216.4L527.4 215.2L524.3 214L521 212.8L517.6 211.6L514 210.3L510.2 209L506.4 207.7L502.5 206.4L498.6 205.2L494.8 203.9L491 202.7L487.4 201.6L483.7 200.5L479.8 199.4L476 198.4L472.2 197.5L468.5 196.5L465 195.6L461.8 194.7L458.9 193.9L456.5 193.1L454.7 192.4L453.5 191.9L452.9 191.5L452.6 191.3L452.5 191.2L452.5 191.1L452.4 191L452.3 190.6L452.2 189.8L451.8 188.4L451.3 187.3Z" fill="#40406e"/><path d="M440.2 192.9L440.1 192.7L440 192.4L440.1 193L440.4 194.2L440.9 195.8L441.7 197.6L443 199.5L444.7 201.2L446.7 202.7L449.1 204.1L451.7 205.3L454.6 206.4L457.7 207.6L461.1 208.7L464.6 209.9L468.2 211.1L471.9 212.3L475.5 213.6L479 214.8L482.4 216.1L485.8 217.4L489.4 218.9L493.1 220.4L496.8 221.9L500.5 223.4L504.1 225L507.7 226.5L511.1 228L514.4 229.4L517.4 230.8L520.2 232.1L522.9 233.3L525.4 234.6L527.9 235.8L530.3 237L532.6 238.2L534.8 239.3L536.8 240.4L538.8 241.4L540.7 242.3L542.4 243.1L543.9 243.9L545.3 244.5L546.6 245.1L547.7 245.7L548.7 246.2L549.6 246.6L550.4 247L551.1 247.3L551.7 247.6L560.3 228.4L559.7 228.2L559 227.9L558.2 227.5L557.3 227.1L556.3 226.7L555.2 226.2L553.9 225.7L552.5 225.1L551 224.4L549.3 223.7L547.5 222.9L545.6 222.1L543.5 221.1L541.2 220.1L538.8 219L536.3 217.9L533.5 216.8L530.7 215.6L527.7 214.4L524.6 213.2L521.4 212L517.9 210.8L514.3 209.6L510.5 208.3L506.6 207L502.7 205.7L498.9 204.5L495 203.2L491.2 202.1L487.6 200.9L483.9 199.8L480 198.8L476.2 197.8L472.4 196.8L468.7 195.9L465.2 195L461.9 194.2L459.1 193.3L456.7 192.6L454.9 191.9L453.8 191.4L453.2 191L453 190.9L453 190.9L453 190.9L453 190.8L452.9 190.5L452.8 189.7L452.3 188.2L451.8 187.1Z" fill="#66666c"/><path d="M441.4 192.3L441.4 192.2L441.3 192.1L441.4 192.7L441.7 193.8L442.1 195.3L442.9 196.9L444.1 198.6L445.6 200.1L447.5 201.6L449.7 202.8L452.2 204L455 205.1L458.1 206.2L461.5 207.3L465 208.5L468.6 209.6L472.3 210.8L476 212L479.5 213.2L482.9 214.5L486.4 215.8L490 217.2L493.7 218.7L497.4 220.2L501.1 221.7L504.8 223.3L508.4 224.8L511.8 226.2L515.1 227.6L518.1 229L521 230.2L523.7 231.5L526.3 232.7L528.8 234L531.2 235.2L533.5 236.3L535.7 237.4L537.8 238.5L539.7 239.5L541.6 240.4L543.3 241.2L544.8 241.9L546.2 242.6L547.5 243.2L548.6 243.7L549.6 244.2L550.5 244.6L551.3 245L552 245.3L552.6 245.6L560.2 228.7L559.6 228.5L558.9 228.2L558.1 227.8L557.2 227.4L556.2 227L555 226.5L553.8 226L552.4 225.4L550.8 224.7L549.2 224L547.4 223.2L545.5 222.4L543.4 221.4L541.1 220.4L538.7 219.3L536.1 218.2L533.4 217L530.6 215.9L527.6 214.7L524.5 213.5L521.2 212.3L517.8 211.1L514.2 209.8L510.4 208.5L506.5 207.3L502.7 206L498.8 204.7L494.9 203.5L491.2 202.3L487.5 201.2L483.8 200.1L480 199L476.1 198L472.3 197.1L468.6 196.1L465.1 195.2L461.9 194.4L459 193.5L456.6 192.8L454.8 192.1L453.7 191.6L453.1 191.2L452.9 191L452.8 191L452.8 191L452.8 190.9L452.7 190.5L452.6 189.7L452.2 188.3L451.6 187.2Z" fill="#838388"/><path d="M442.7 191.7L442.7 191.7L442.7 191.8L442.8 192.5L443.1 193.5L443.5 194.7L444.1 196.2L445.2 197.6L446.5 199L448.3 200.3L450.3 201.5L452.8 202.6L455.5 203.6L458.6 204.7L461.9 205.8L465.5 206.9L469.1 208L472.8 209.2L476.5 210.4L480.1 211.6L483.5 212.8L487 214.1L490.6 215.5L494.3 217L498.1 218.4L501.8 219.9L505.5 221.4L509.1 222.9L512.6 224.3L515.9 225.7L518.9 227L521.8 228.3L524.5 229.5L527.2 230.8L529.7 232L532.1 233.2L534.4 234.3L536.6 235.4L538.7 236.5L540.7 237.4L542.5 238.3L544.2 239.1L545.8 239.8L547.1 240.5L548.4 241.1L549.5 241.6L550.6 242.1L551.5 242.5L552.2 242.9L552.9 243.2L553.5 243.5L559.9 229.3L559.3 229.1L558.6 228.8L557.8 228.4L556.9 228L555.9 227.6L554.8 227.1L553.5 226.5L552.1 225.9L550.6 225.3L548.9 224.5L547.1 223.8L545.2 222.9L543.1 222L540.8 220.9L538.4 219.9L535.9 218.7L533.2 217.6L530.3 216.4L527.4 215.2L524.3 214L521 212.8L517.6 211.6L514 210.3L510.2 209L506.4 207.8L502.5 206.5L498.6 205.2L494.7 204L491 202.8L487.4 201.6L483.6 200.5L479.8 199.5L476 198.5L472.2 197.5L468.5 196.5L465 195.6L461.7 194.8L458.9 193.9L456.5 193.2L454.6 192.5L453.5 191.9L452.9 191.5L452.6 191.3L452.5 191.2L452.5 191.1L452.4 191L452.3 190.6L452.2 189.8L451.8 188.4L451.3 187.3Z" fill="#9a9a9e"/><path d="M444.7 190.7L444.8 191L444.9 191.4L445 192L445.2 192.9L445.5 193.9L446.1 195L446.9 196.2L448 197.3L449.5 198.4L451.3 199.4L453.6 200.4L456.3 201.4L459.3 202.4L462.6 203.5L466.2 204.5L469.8 205.6L473.5 206.7L477.3 207.9L480.9 209.1L484.4 210.3L487.9 211.5L491.5 212.9L495.3 214.3L499.1 215.7L502.8 217.1L506.6 218.6L510.2 220L513.7 221.4L517.1 222.8L520.2 224L523.1 225.3L525.9 226.5L528.6 227.7L531.1 228.9L533.6 230.1L535.9 231.2L538.1 232.3L540.2 233.3L542.2 234.3L544 235.2L545.7 235.9L547.2 236.6L548.6 237.3L549.9 237.9L551 238.4L552 238.9L552.9 239.3L553.7 239.6L554.4 239.9L555 240.2L559.5 230.3L558.9 230L558.2 229.7L557.4 229.4L556.5 229L555.5 228.5L554.3 228L553.1 227.5L551.7 226.9L550.1 226.2L548.5 225.5L546.7 224.7L544.8 223.8L542.7 222.9L540.4 221.8L538 220.8L535.5 219.6L532.8 218.5L529.9 217.3L527 216.1L523.9 214.9L520.7 213.7L517.2 212.5L513.6 211.2L509.9 209.9L506.1 208.6L502.2 207.3L498.3 206L494.5 204.7L490.7 203.5L487.1 202.4L483.4 201.3L479.6 200.2L475.8 199.2L472 198.2L468.3 197.2L464.8 196.3L461.5 195.4L458.6 194.6L456.2 193.8L454.4 193.1L453.1 192.5L452.4 192L452.1 191.7L451.9 191.5L451.8 191.4L451.8 191.1L451.7 190.7L451.5 189.9L451.2 188.7L450.7 187.6Z" fill="#a8a8ac"/><path d="M446.6 189.7L446.8 190.2L447 190.9L447.1 191.6L447.3 192.3L447.5 193.1L447.9 193.9L448.5 194.7L449.4 195.6L450.6 196.5L452.3 197.4L454.4 198.3L457 199.2L460 200.2L463.3 201.2L466.8 202.2L470.5 203.2L474.2 204.3L478 205.4L481.7 206.6L485.3 207.7L488.8 209L492.5 210.3L496.2 211.6L500.1 213L503.9 214.4L507.6 215.8L511.3 217.2L514.9 218.6L518.2 219.9L521.4 221.1L524.3 222.3L527.2 223.6L529.9 224.8L532.5 226L535 227.1L537.3 228.2L539.6 229.3L541.7 230.3L543.6 231.2L545.4 232.1L547.1 232.8L548.6 233.5L550 234.2L551.3 234.7L552.4 235.2L553.4 235.7L554.3 236.1L555.1 236.5L555.8 236.8L556.4 237L559 231.3L558.4 231L557.7 230.7L556.9 230.4L556 230L555 229.5L553.9 229L552.6 228.5L551.2 227.9L549.7 227.2L548 226.5L546.2 225.7L544.3 224.8L542.2 223.9L539.9 222.8L537.5 221.7L535 220.6L532.3 219.4L529.5 218.2L526.6 217L523.5 215.8L520.3 214.6L516.9 213.4L513.3 212.1L509.5 210.8L505.7 209.5L501.9 208.1L498 206.8L494.2 205.6L490.4 204.4L486.8 203.2L483.1 202.1L479.4 201L475.5 200L471.7 199L468.1 198L464.5 197.1L461.3 196.2L458.4 195.3L455.9 194.5L454 193.7L452.8 193.1L452 192.6L451.5 192.2L451.3 191.9L451.2 191.6L451.1 191.3L451 190.8L450.8 190.1L450.5 188.9L450.1 187.9Z" fill="#b6b6b9"/><circle cx="446" cy="190" r="6.5" fill="#66666c"/><circle cx="446.5" cy="189.7" r="5.7" fill="#838388"/><circle cx="446.9" cy="189.3" r="4.8" fill="#9a9a9e"/><circle cx="447.5" cy="188.9" r="3.4" fill="#a8a8ac"/>
<path d="M392.4 192.5L392.3 192.4L392.3 192.4L392.3 193.1L392.4 194.3L392.8 195.9L393.4 197.8L394.4 199.8L395.7 201.9L397.5 203.8L399.6 205.6L401.9 207.1L404.2 208.5L406.7 209.8L409.3 211.1L412 212.5L414.9 213.8L417.8 215.2L420.8 216.7L423.8 218.2L426.9 219.9L430.1 221.6L433.5 223.5L437.1 225.5L440.8 227.5L444.7 229.7L448.6 231.8L452.7 234.1L456.8 236.4L461.1 238.8L465.4 241.2L470 243.8L475 246.5L480.2 249.4L485.5 252.4L490.9 255.4L496.2 258.4L501.3 261.2L506.2 263.9L510.6 266.4L514.5 268.6L518 270.5L521.1 272.2L523.8 273.7L526.3 275.1L528.6 276.3L530.7 277.4L532.6 278.5L534.5 279.5L536.3 280.5L538.1 281.5L539.9 282.5L541.6 283.4L543.1 284.3L544.6 285.1L545.9 285.8L547.2 286.5L548.3 287.2L549.3 287.7L550.1 288.2L550.9 288.7L564 264.5L563.3 264.1L562.4 263.6L561.4 263.1L560.2 262.5L558.9 261.8L557.5 261.1L556 260.3L554.3 259.4L552.6 258.5L550.8 257.6L548.9 256.7L547 255.7L545.1 254.7L543.1 253.7L541 252.6L538.6 251.4L536 250.1L533.2 248.7L530 247.2L526.4 245.4L522.3 243.5L517.7 241.3L512.7 239L507.4 236.4L501.9 233.9L496.3 231.2L490.7 228.6L485.3 226.1L480.1 223.7L475.3 221.5L470.7 219.5L466.3 217.4L461.9 215.5L457.6 213.6L453.5 211.7L449.4 210L445.5 208.2L441.7 206.6L438 205.1L434.5 203.6L431 202.1L427.5 200.8L424.2 199.6L421 198.6L418.1 197.5L415.4 196.6L412.9 195.7L410.8 194.9L409 194.1L407.7 193.5L406.8 193L406.3 192.7L406.1 192.4L405.9 192.2L405.7 192L405.6 191.6L405.4 191L405.2 190.2L404.9 188.9L404.5 187.9Z" fill="#40406e"/><path d="M392.9 192.3L392.9 192.3L392.8 192.3L392.9 193L393 194.2L393.3 195.7L393.9 197.5L394.9 199.5L396.2 201.5L397.9 203.3L400 205L402.2 206.5L404.5 207.9L407 209.2L409.6 210.5L412.3 211.8L415.1 213.1L418.1 214.5L421.1 216L424.1 217.5L427.2 219.2L430.5 220.9L433.9 222.8L437.5 224.7L441.2 226.8L445.1 228.9L449 231L453.1 233.3L457.3 235.6L461.5 237.9L465.9 240.3L470.5 242.9L475.4 245.6L480.7 248.5L486 251.5L491.4 254.5L496.7 257.4L501.9 260.3L506.7 262.9L511.1 265.4L515.1 267.6L518.5 269.5L521.6 271.1L524.4 272.7L526.9 274L529.1 275.2L531.2 276.4L533.2 277.4L535.1 278.4L536.9 279.4L538.7 280.4L540.5 281.4L542.1 282.3L543.7 283.2L545.1 284L546.5 284.8L547.7 285.5L548.8 286.1L549.8 286.7L550.7 287.2L551.5 287.6L564.5 263.4L563.8 263L563 262.6L562 262.1L560.8 261.5L559.5 260.8L558.1 260L556.6 259.2L554.9 258.4L553.1 257.5L551.3 256.6L549.4 255.6L547.6 254.7L545.7 253.7L543.7 252.7L541.5 251.6L539.2 250.4L536.6 249.1L533.7 247.7L530.5 246.1L526.9 244.4L522.9 242.5L518.2 240.3L513.2 238L507.9 235.5L502.4 232.9L496.8 230.3L491.2 227.7L485.7 225.2L480.6 222.9L475.7 220.7L471.2 218.6L466.7 216.6L462.3 214.7L458 212.8L453.8 210.9L449.8 209.2L445.9 207.5L442 205.9L438.4 204.3L434.8 202.8L431.3 201.4L427.8 200.1L424.5 199L421.3 197.9L418.4 196.9L415.6 196L413.2 195.1L411.1 194.3L409.3 193.6L408 193L407.2 192.5L406.8 192.3L406.6 192.1L406.4 192L406.3 191.8L406.1 191.5L406 190.9L405.8 190.1L405.5 188.8L405.1 187.7Z" fill="#66666c"/><path d="M394.2 191.8L394.2 191.9L394.2 192L394.2 192.8L394.4 193.9L394.7 195.3L395.2 197L396.1 198.7L397.3 200.5L398.9 202.2L400.8 203.8L402.9 205.2L405.2 206.5L407.6 207.7L410.2 209L412.9 210.2L415.8 211.6L418.7 212.9L421.8 214.4L424.8 215.9L428 217.5L431.3 219.2L434.8 221L438.4 222.9L442.1 224.9L446 227L449.9 229.1L454 231.3L458.2 233.6L462.5 235.9L466.9 238.3L471.5 240.8L476.5 243.5L481.8 246.3L487.1 249.3L492.5 252.2L497.9 255.1L503 257.9L507.9 260.6L512.4 263L516.3 265.2L519.8 267L522.9 268.7L525.6 270.2L528.1 271.6L530.4 272.8L532.5 273.9L534.5 275L536.4 276L538.2 277L540 278L541.8 278.9L543.4 279.8L545 280.7L546.5 281.5L547.8 282.3L549.1 283L550.2 283.6L551.2 284.2L552.1 284.7L552.8 285.1L564.3 263.8L563.6 263.4L562.8 263L561.7 262.4L560.6 261.8L559.3 261.2L557.9 260.4L556.4 259.6L554.7 258.8L552.9 257.9L551.1 256.9L549.2 256L547.4 255.1L545.5 254.1L543.5 253L541.3 251.9L539 250.8L536.4 249.5L533.5 248.1L530.3 246.5L526.7 244.8L522.7 242.9L518.1 240.7L513 238.3L507.7 235.8L502.2 233.3L496.6 230.6L491 228.1L485.6 225.6L480.4 223.2L475.6 221L471 218.9L466.5 216.9L462.2 215L457.9 213.1L453.7 211.2L449.7 209.5L445.7 207.8L441.9 206.1L438.2 204.6L434.7 203.1L431.2 201.7L427.7 200.4L424.4 199.2L421.2 198.1L418.3 197.1L415.5 196.2L413.1 195.3L411 194.5L409.2 193.8L407.9 193.2L407.1 192.7L406.6 192.4L406.4 192.2L406.2 192.1L406.1 191.8L405.9 191.5L405.8 190.9L405.6 190.1L405.3 188.8L404.9 187.8Z" fill="#838388"/><path d="M395.5 191.3L395.6 191.5L395.6 191.8L395.7 192.5L395.8 193.6L396.1 194.9L396.6 196.3L397.4 197.9L398.5 199.5L399.9 201L401.7 202.5L403.7 203.7L405.9 205L408.3 206.2L410.9 207.4L413.6 208.6L416.5 209.9L419.4 211.2L422.5 212.6L425.6 214.1L428.8 215.7L432.2 217.4L435.6 219.2L439.3 221L443 223L446.9 225L450.9 227.1L455.1 229.3L459.3 231.5L463.6 233.8L468 236.1L472.6 238.6L477.6 241.3L482.9 244.1L488.3 246.9L493.8 249.9L499.1 252.7L504.3 255.5L509.2 258.1L513.6 260.5L517.6 262.6L521.1 264.5L524.2 266.1L527 267.6L529.5 269L531.8 270.2L533.9 271.3L535.9 272.4L537.7 273.4L539.6 274.3L541.4 275.3L543.2 276.3L544.9 277.2L546.4 278.1L547.9 278.9L549.3 279.6L550.5 280.3L551.7 281L552.7 281.5L553.5 282L554.3 282.4L563.9 264.5L563.2 264.1L562.4 263.7L561.4 263.2L560.2 262.6L558.9 261.9L557.5 261.1L556 260.3L554.3 259.5L552.6 258.6L550.7 257.7L548.9 256.7L547 255.8L545.1 254.8L543.1 253.8L540.9 252.7L538.6 251.5L536 250.2L533.2 248.8L530 247.2L526.4 245.5L522.3 243.6L517.7 241.4L512.7 239L507.4 236.5L501.9 233.9L496.3 231.3L490.7 228.7L485.3 226.2L480.1 223.8L475.3 221.6L470.7 219.5L466.3 217.5L461.9 215.5L457.6 213.6L453.4 211.8L449.4 210L445.5 208.3L441.7 206.6L438 205.1L434.5 203.6L430.9 202.2L427.5 200.9L424.2 199.7L421 198.6L418.1 197.6L415.4 196.6L412.9 195.8L410.8 194.9L409 194.2L407.6 193.5L406.8 193L406.3 192.7L406 192.4L405.8 192.2L405.7 192L405.5 191.6L405.4 191L405.2 190.2L404.9 188.9L404.5 187.9Z" fill="#9a9a9e"/><path d="M397.6 190.5L397.7 190.9L397.8 191.4L397.9 192.2L398.1 193.1L398.3 194.2L398.7 195.4L399.4 196.7L400.3 197.9L401.5 199.2L403.1 200.4L404.9 201.5L407 202.7L409.4 203.8L411.9 204.9L414.6 206.1L417.5 207.3L420.5 208.6L423.6 209.9L426.9 211.3L430.1 212.9L433.5 214.5L437 216.3L440.7 218.1L444.5 220L448.4 222L452.5 224L456.6 226.1L460.9 228.3L465.2 230.5L469.7 232.8L474.3 235.2L479.4 237.8L484.7 240.5L490.1 243.3L495.6 246.2L501 249L506.2 251.7L511.1 254.3L515.6 256.6L519.6 258.7L523.1 260.5L526.2 262.1L529.1 263.6L531.6 264.9L533.9 266.2L536 267.3L538 268.3L539.9 269.3L541.7 270.3L543.5 271.3L545.3 272.2L547 273.1L548.6 274L550.1 274.8L551.5 275.6L552.7 276.3L553.9 276.9L554.9 277.4L555.8 277.9L556.5 278.3L563.3 265.7L562.6 265.4L561.7 264.9L560.7 264.4L559.5 263.8L558.3 263.1L556.8 262.3L555.3 261.5L553.7 260.7L551.9 259.8L550.1 258.9L548.2 257.9L546.4 257L544.5 256L542.5 254.9L540.3 253.8L538 252.7L535.4 251.4L532.5 249.9L529.4 248.4L525.8 246.7L521.7 244.7L517.1 242.5L512.1 240.1L506.8 237.6L501.3 235L495.7 232.3L490.2 229.7L484.8 227.2L479.6 224.8L474.8 222.6L470.2 220.5L465.8 218.4L461.4 216.4L457.2 214.5L453 212.7L449 210.9L445 209.1L441.3 207.5L437.6 205.9L434.1 204.4L430.6 203L427.2 201.7L423.9 200.5L420.7 199.4L417.8 198.3L415.1 197.4L412.6 196.5L410.4 195.6L408.6 194.8L407.2 194.1L406.3 193.6L405.8 193.1L405.5 192.8L405.2 192.5L405 192.2L404.9 191.7L404.7 191.1L404.6 190.3L404.3 189.1L403.9 188.1Z" fill="#a8a8ac"/><path d="M399.6 189.8L399.8 190.3L400 191.1L400.1 191.8L400.2 192.7L400.5 193.6L400.8 194.5L401.3 195.4L402 196.4L403.1 197.4L404.4 198.4L406.1 199.4L408.1 200.4L410.4 201.4L412.9 202.5L415.6 203.6L418.5 204.8L421.6 206L424.8 207.3L428 208.7L431.4 210.2L434.8 211.8L438.4 213.5L442.1 215.2L445.9 217.1L449.9 219L454 221L458.2 223L462.4 225.1L466.8 227.3L471.3 229.5L476 231.9L481.1 234.4L486.4 237.1L491.9 239.8L497.4 242.6L502.9 245.4L508.1 248L513 250.5L517.6 252.8L521.6 254.8L525.1 256.6L528.3 258.2L531.1 259.7L533.6 261L535.9 262.2L538.1 263.3L540.1 264.4L542 265.4L543.8 266.3L545.6 267.3L547.4 268.3L549.2 269.2L550.8 270L552.3 270.8L553.7 271.6L554.9 272.3L556.1 272.9L557.1 273.4L557.9 273.9L558.7 274.3L562.6 267L561.9 266.7L561 266.2L560 265.7L558.8 265.1L557.6 264.4L556.1 263.6L554.6 262.8L553 262L551.2 261.1L549.4 260.1L547.6 259.2L545.7 258.2L543.8 257.3L541.8 256.2L539.7 255.1L537.3 253.9L534.7 252.6L531.9 251.2L528.7 249.6L525.2 247.9L521.1 245.9L516.5 243.7L511.5 241.3L506.2 238.8L500.7 236.1L495.2 233.5L489.6 230.8L484.2 228.3L479 225.9L474.2 223.6L469.7 221.5L465.3 219.5L460.9 217.5L456.7 215.5L452.5 213.6L448.5 211.8L444.6 210.1L440.8 208.4L437.2 206.8L433.7 205.3L430.2 203.8L426.8 202.5L423.5 201.3L420.4 200.2L417.5 199.1L414.7 198.1L412.3 197.2L410.1 196.3L408.2 195.5L406.8 194.8L405.8 194.2L405.2 193.6L404.8 193.2L404.5 192.8L404.3 192.4L404.2 191.9L404 191.2L403.9 190.4L403.6 189.3L403.3 188.4Z" fill="#b6b6b9"/><circle cx="399" cy="190" r="6.5" fill="#66666c"/><circle cx="399.5" cy="189.7" r="5.7" fill="#838388"/><circle cx="400" cy="189.5" r="4.8" fill="#9a9a9e"/><circle cx="400.6" cy="189.1" r="3.4" fill="#a8a8ac"/>
<path d="M343.8 192.4L343.9 192.8L344 193.3L344.2 194.3L344.5 195.4L344.8 196.8L345.2 198.4L345.8 200L346.6 201.8L347.7 203.7L348.9 205.5L350.2 207.1L351.5 208.5L352.8 209.9L354.3 211.3L355.8 212.7L357.4 214.1L359 215.5L360.7 216.9L362.5 218.4L364.3 219.9L366.4 221.6L368.6 223.3L370.9 225.1L373.4 227L375.8 228.8L378.3 230.7L380.8 232.6L383.3 234.4L385.6 236.2L387.8 237.9L389.7 239.4L391.3 240.7L392.8 241.9L394.2 243.2L395.8 244.5L397.5 246L399.6 247.6L402 249.4L404.9 251.5L408.4 253.8L412.6 256.6L417.3 259.7L422.6 263.2L428.3 266.8L434.2 270.6L440.3 274.5L446.4 278.3L452.5 282.1L458.3 285.6L463.8 288.9L469.3 292.1L474.8 295.2L480.3 298.2L485.7 301.1L491 303.9L496.1 306.6L500.9 309.1L505.5 311.6L509.6 313.8L513.3 315.9L516.5 317.8L519.3 319.5L521.9 321.1L524.2 322.5L526.3 323.9L528.3 325.2L530.2 326.5L532.2 327.8L534.3 329.2L536.4 330.5L538.4 331.7L540.4 332.9L542.2 334L544 335.1L545.7 336L547.2 336.9L548.6 337.7L549.8 338.4L550.8 339L551.6 339.4L567 312L566.2 311.5L565.1 310.9L563.8 310.2L562.5 309.5L561 308.7L559.4 307.8L557.7 306.9L555.9 305.9L554.1 304.9L552.2 303.8L550.5 302.8L548.7 301.8L546.9 300.6L544.9 299.4L542.7 298L540.3 296.5L537.6 294.9L534.6 293.2L531.2 291.4L527.5 289.5L523.3 287.4L518.8 285.2L514 282.9L509 280.5L503.7 278.1L498.4 275.6L492.9 273L487.4 270.4L482 267.8L476.6 265.2L471.1 262.4L465.1 259.3L458.9 256.1L452.6 252.9L446.3 249.6L440.1 246.3L434.2 243.2L428.7 240.3L423.7 237.7L419.4 235.4L415.9 233.5L413 231.9L410.6 230.6L408.7 229.5L407 228.5L405.4 227.6L403.8 226.7L402.2 225.6L400.3 224.4L398.1 223L395.7 221.5L393.2 220L390.7 218.3L388.1 216.7L385.5 215L383 213.3L380.5 211.7L378.2 210.1L376 208.6L374 207.2L372.1 205.8L370.3 204.5L368.6 203.3L367 202.1L365.5 201L364.2 200L363 199L361.9 198L360.9 197.1L360.1 196.3L359.5 195.7L359 195L358.6 194.2L358.1 193.4L357.7 192.5L357.4 191.6L357.1 190.7L356.7 189.8L356.4 188.8L356.1 188Z" fill="#40406e"/><path d="M344.4 192.2L344.5 192.6L344.6 193.2L344.8 194.1L345 195.3L345.4 196.6L345.8 198.1L346.4 199.8L347.2 201.5L348.2 203.3L349.4 205.1L350.6 206.6L351.9 208.1L353.3 209.5L354.7 210.8L356.2 212.2L357.8 213.6L359.4 215L361.1 216.4L362.9 217.9L364.8 219.4L366.8 221L369 222.7L371.3 224.5L373.8 226.4L376.3 228.2L378.8 230.1L381.3 231.9L383.7 233.8L386.1 235.5L388.3 237.2L390.2 238.7L391.8 240L393.3 241.3L394.7 242.5L396.3 243.8L398 245.3L400.1 246.8L402.5 248.6L405.4 250.7L408.9 253L413 255.8L417.8 258.9L423.1 262.3L428.8 265.9L434.7 269.7L440.8 273.5L447 277.4L453 281.1L458.9 284.6L464.4 287.9L469.8 291L475.3 294.1L480.8 297.1L486.2 300L491.5 302.8L496.7 305.4L501.5 308L506.1 310.4L510.2 312.6L513.9 314.7L517.1 316.6L520 318.3L522.6 319.9L524.9 321.4L527 322.8L529 324.1L531 325.4L532.9 326.7L535 328L537.1 329.3L539.1 330.6L541.1 331.7L542.9 332.8L544.7 333.9L546.4 334.8L547.9 335.7L549.3 336.5L550.5 337.2L551.5 337.8L552.3 338.2L567.7 310.8L566.8 310.3L565.7 309.7L564.5 309L563.1 308.3L561.6 307.5L560 306.6L558.3 305.7L556.6 304.7L554.7 303.7L552.9 302.7L551.2 301.7L549.5 300.6L547.6 299.5L545.6 298.2L543.4 296.9L541 295.4L538.2 293.8L535.2 292.1L531.9 290.2L528.1 288.3L523.9 286.2L519.4 284L514.6 281.7L509.5 279.4L504.3 277L498.9 274.5L493.5 271.9L488 269.3L482.6 266.7L477.2 264.1L471.7 261.3L465.7 258.3L459.5 255.2L453.1 251.9L446.8 248.6L440.6 245.4L434.7 242.4L429.2 239.5L424.2 236.9L419.9 234.6L416.4 232.7L413.5 231.1L411.1 229.9L409.1 228.8L407.5 227.8L405.9 226.9L404.3 226L402.6 225L400.7 223.8L398.5 222.4L396.1 220.9L393.6 219.3L391.1 217.7L388.5 216.1L385.9 214.4L383.4 212.7L381 211.1L378.6 209.5L376.4 208L374.4 206.6L372.5 205.3L370.7 204L369 202.8L367.4 201.6L366 200.5L364.6 199.5L363.4 198.5L362.3 197.6L361.4 196.7L360.6 195.9L360.1 195.3L359.6 194.7L359.1 194L358.7 193.2L358.3 192.3L358 191.4L357.6 190.5L357.3 189.6L357 188.6L356.6 187.8Z" fill="#66666c"/><path d="M345.7 191.7L345.8 192.2L345.9 192.8L346.1 193.7L346.4 194.9L346.7 196.2L347.1 197.6L347.7 199.2L348.5 200.8L349.4 202.5L350.5 204.1L351.7 205.6L353 207L354.3 208.3L355.8 209.7L357.2 211L358.8 212.3L360.4 213.7L362.1 215.1L363.9 216.5L365.8 218.1L367.8 219.7L370 221.4L372.3 223.1L374.8 224.9L377.3 226.8L379.8 228.6L382.3 230.5L384.7 232.3L387.1 234L389.3 235.7L391.3 237.1L392.9 238.5L394.4 239.7L395.9 240.9L397.4 242.2L399.2 243.6L401.2 245.1L403.6 246.8L406.5 248.8L410 251.1L414.2 253.8L419 256.9L424.3 260.2L430 263.8L436 267.5L442.1 271.3L448.3 275L454.3 278.7L460.2 282.2L465.7 285.4L471.1 288.5L476.6 291.5L482.1 294.4L487.6 297.3L492.9 300.1L498 302.7L502.9 305.3L507.5 307.7L511.6 309.9L515.4 312L518.7 313.9L521.6 315.6L524.2 317.2L526.5 318.7L528.7 320.1L530.7 321.4L532.7 322.7L534.7 324L536.7 325.3L538.7 326.6L540.7 327.8L542.7 328.9L544.5 330L546.3 331L547.9 332L549.5 332.8L550.8 333.6L552.1 334.3L553.1 334.9L553.9 335.4L567.5 311.2L566.6 310.7L565.5 310.1L564.3 309.5L562.9 308.7L561.4 307.9L559.8 307.1L558.1 306.1L556.3 305.2L554.5 304.1L552.7 303.1L550.9 302.1L549.2 301L547.3 299.9L545.3 298.6L543.1 297.3L540.7 295.8L538 294.2L535 292.5L531.6 290.7L527.9 288.7L523.7 286.6L519.2 284.4L514.4 282.2L509.3 279.8L504.1 277.4L498.7 274.9L493.3 272.3L487.8 269.7L482.4 267.1L477 264.5L471.4 261.7L465.5 258.7L459.3 255.5L452.9 252.3L446.6 249L440.4 245.8L434.5 242.7L429 239.8L424 237.2L419.7 234.9L416.2 233L413.3 231.4L410.9 230.1L409 229L407.3 228.1L405.7 227.2L404.2 226.2L402.5 225.2L400.6 224L398.4 222.6L396 221.1L393.5 219.6L390.9 218L388.4 216.3L385.8 214.6L383.3 212.9L380.8 211.3L378.5 209.7L376.3 208.2L374.3 206.8L372.4 205.5L370.6 204.2L368.9 203L367.3 201.8L365.8 200.7L364.5 199.6L363.2 198.7L362.2 197.7L361.2 196.8L360.4 196.1L359.9 195.4L359.4 194.8L358.9 194L358.5 193.2L358.1 192.4L357.8 191.5L357.4 190.6L357.1 189.7L356.8 188.7L356.4 187.9Z" fill="#838388"/><path d="M347 191.3L347.2 191.8L347.3 192.4L347.5 193.3L347.8 194.4L348.1 195.7L348.6 197.1L349.1 198.5L349.8 200.1L350.7 201.6L351.8 203.1L352.9 204.5L354.1 205.8L355.5 207.1L356.8 208.4L358.3 209.7L359.9 211L361.5 212.4L363.2 213.7L365 215.2L366.8 216.6L368.9 218.2L371.1 219.9L373.4 221.7L375.8 223.4L378.3 225.3L380.9 227.1L383.4 228.9L385.8 230.7L388.2 232.4L390.5 234L392.4 235.5L394.1 236.8L395.6 238L397.1 239.2L398.7 240.4L400.4 241.7L402.4 243.2L404.8 244.9L407.7 246.8L411.2 249.1L415.4 251.7L420.3 254.7L425.6 258L431.3 261.6L437.3 265.2L443.5 268.9L449.6 272.6L455.7 276.2L461.6 279.6L467.1 282.8L472.5 285.8L478 288.8L483.5 291.7L489 294.5L494.3 297.2L499.4 299.9L504.3 302.4L508.9 304.8L513.1 307L516.9 309.1L520.3 311L523.3 312.7L525.9 314.3L528.3 315.8L530.5 317.2L532.6 318.6L534.5 319.8L536.5 321.1L538.4 322.4L540.5 323.6L542.5 324.8L544.4 325.9L546.2 327L548 328L549.6 329L551.1 329.8L552.5 330.6L553.7 331.3L554.8 331.9L555.6 332.4L567 312L566.1 311.5L565 311L563.8 310.3L562.4 309.6L560.9 308.8L559.3 307.9L557.6 306.9L555.9 306L554 304.9L552.2 303.9L550.4 302.9L548.7 301.8L546.8 300.7L544.8 299.4L542.6 298.1L540.2 296.6L537.5 295L534.5 293.3L531.2 291.5L527.5 289.5L523.3 287.4L518.8 285.2L514 283L509 280.6L503.7 278.1L498.3 275.6L492.9 273.1L487.4 270.5L482 267.9L476.6 265.2L471.1 262.4L465.1 259.4L458.9 256.2L452.6 252.9L446.3 249.6L440.1 246.4L434.2 243.3L428.7 240.4L423.7 237.7L419.4 235.4L415.9 233.5L413 231.9L410.6 230.6L408.6 229.5L406.9 228.6L405.4 227.6L403.8 226.7L402.1 225.6L400.2 224.4L398 223.1L395.7 221.6L393.2 220L390.6 218.4L388.1 216.7L385.5 215L383 213.4L380.5 211.7L378.2 210.1L376 208.6L374 207.2L372.1 205.9L370.3 204.6L368.6 203.3L367 202.2L365.5 201L364.2 200L362.9 199L361.9 198L360.9 197.1L360.1 196.4L359.5 195.7L359 195L358.5 194.2L358.1 193.4L357.7 192.5L357.4 191.6L357 190.7L356.7 189.8L356.4 188.8L356.1 188Z" fill="#9a9a9e"/><path d="M349.1 190.5L349.3 191.1L349.5 191.8L349.7 192.7L350 193.8L350.3 195L350.8 196.2L351.3 197.5L351.9 198.9L352.7 200.3L353.7 201.6L354.8 202.8L355.9 204L357.2 205.2L358.5 206.5L360 207.7L361.5 209L363.1 210.3L364.8 211.6L366.6 213L368.5 214.5L370.5 216L372.7 217.7L375 219.4L377.5 221.1L380 222.9L382.5 224.7L385 226.5L387.5 228.2L389.9 229.9L392.2 231.5L394.2 233L396 234.2L397.5 235.4L399 236.5L400.6 237.7L402.3 238.9L404.3 240.3L406.7 241.9L409.6 243.8L413.1 245.9L417.3 248.5L422.2 251.4L427.6 254.6L433.3 258.1L439.4 261.6L445.6 265.2L451.8 268.8L457.9 272.3L463.8 275.7L469.3 278.8L474.7 281.7L480.2 284.6L485.7 287.4L491.1 290.2L496.4 292.8L501.6 295.4L506.5 297.9L511.2 300.3L515.5 302.5L519.4 304.6L522.8 306.5L525.9 308.2L528.6 309.9L531.1 311.4L533.3 312.8L535.4 314.2L537.4 315.4L539.3 316.7L541.2 317.9L543.2 319.1L545.1 320.2L547 321.4L548.8 322.4L550.6 323.4L552.2 324.3L553.7 325.2L555.1 325.9L556.3 326.6L557.4 327.2L558.2 327.7L566.2 313.4L565.4 312.9L564.3 312.3L563 311.7L561.7 310.9L560.2 310.1L558.6 309.2L556.9 308.3L555.1 307.3L553.2 306.3L551.4 305.2L549.6 304.2L547.9 303.1L546 302L544 300.7L541.8 299.4L539.4 297.9L536.7 296.3L533.8 294.6L530.5 292.8L526.7 290.8L522.6 288.7L518.1 286.6L513.3 284.3L508.3 281.9L503.1 279.4L497.7 276.9L492.3 274.3L486.8 271.7L481.3 269.1L476 266.4L470.4 263.6L464.5 260.5L458.3 257.3L452 254L445.7 250.7L439.5 247.4L433.6 244.3L428.1 241.3L423.1 238.7L418.9 236.3L415.3 234.4L412.4 232.8L410 231.5L408.1 230.4L406.4 229.4L404.8 228.4L403.3 227.5L401.6 226.4L399.7 225.2L397.5 223.8L395.2 222.3L392.7 220.7L390.1 219.1L387.6 217.4L385 215.7L382.5 214L380 212.4L377.7 210.8L375.5 209.3L373.5 207.8L371.6 206.5L369.8 205.2L368.1 203.9L366.5 202.8L365 201.6L363.7 200.6L362.4 199.5L361.3 198.6L360.4 197.6L359.5 196.8L358.9 196.1L358.4 195.3L357.9 194.5L357.5 193.6L357.1 192.7L356.7 191.8L356.4 190.9L356.1 189.9L355.8 189L355.4 188.2Z" fill="#a8a8ac"/><path d="M351.1 189.8L351.3 190.4L351.6 191.2L351.8 192.1L352.1 193.2L352.5 194.3L352.9 195.4L353.4 196.6L354 197.8L354.7 198.9L355.6 200L356.5 201.2L357.6 202.3L358.9 203.4L360.2 204.6L361.6 205.8L363.1 207L364.7 208.3L366.4 209.6L368.2 210.9L370.1 212.4L372.1 213.9L374.3 215.5L376.6 217.1L379.1 218.9L381.6 220.6L384.1 222.4L386.7 224.1L389.2 225.8L391.6 227.5L393.9 229.1L396 230.5L397.8 231.7L399.3 232.9L400.9 233.9L402.4 235L404.1 236.2L406.1 237.5L408.5 239L411.4 240.8L415 242.9L419.2 245.4L424.1 248.2L429.5 251.3L435.3 254.7L441.4 258.1L447.6 261.6L453.8 265.1L460 268.6L465.9 271.8L471.4 274.8L476.8 277.7L482.3 280.5L487.8 283.2L493.2 285.9L498.6 288.6L503.7 291.1L508.7 293.6L513.4 295.9L517.8 298.1L521.7 300.2L525.2 302.1L528.4 303.9L531.2 305.5L533.7 307.1L536 308.5L538.1 309.9L540.1 311.1L542 312.4L543.9 313.5L545.8 314.7L547.7 315.8L549.6 316.9L551.4 317.9L553.1 318.9L554.8 319.8L556.3 320.6L557.6 321.4L558.9 322.1L559.9 322.6L560.8 323.1L565.4 314.9L564.5 314.4L563.5 313.8L562.2 313.2L560.9 312.4L559.4 311.6L557.7 310.7L556 309.8L554.2 308.8L552.4 307.7L550.5 306.7L548.8 305.6L547 304.5L545.1 303.4L543.1 302.1L540.9 300.7L538.5 299.3L535.9 297.7L532.9 296L529.7 294.2L526 292.3L521.9 290.2L517.4 288L512.6 285.7L507.6 283.3L502.4 280.8L497 278.3L491.6 275.7L486.1 273L480.7 270.4L475.3 267.7L469.7 264.8L463.8 261.7L457.6 258.5L451.3 255.2L445 251.8L438.9 248.5L433 245.3L427.5 242.4L422.5 239.7L418.3 237.3L414.7 235.4L411.8 233.8L409.5 232.4L407.5 231.3L405.8 230.2L404.2 229.3L402.7 228.3L401 227.2L399.1 226L397 224.6L394.6 223.1L392.1 221.5L389.6 219.9L387 218.2L384.5 216.5L382 214.8L379.5 213.1L377.2 211.5L375 210L373 208.5L371.1 207.2L369.3 205.9L367.6 204.6L366 203.4L364.5 202.3L363.1 201.2L361.9 200.1L360.8 199.1L359.8 198.2L358.9 197.3L358.3 196.5L357.7 195.7L357.2 194.8L356.8 193.9L356.4 193L356 192L355.7 191.1L355.4 190.1L355.1 189.2L354.8 188.5Z" fill="#b6b6b9"/><circle cx="350.5" cy="190" r="6.5" fill="#66666c"/><circle cx="351" cy="189.8" r="5.7" fill="#838388"/><circle cx="351.5" cy="189.6" r="4.8" fill="#9a9a9e"/><circle cx="352.2" cy="189.3" r="3.4" fill="#a8a8ac"/>
<path d="M294 191.2L294 191.7L294.1 192.3L294.1 193.1L294.1 194.2L294.2 195.4L294.3 196.7L294.4 198.1L294.6 199.6L294.9 201.2L295.3 202.7L295.7 204.1L296 205.4L296.4 206.8L296.8 208.3L297.3 209.9L297.9 211.5L298.6 213.1L299.4 214.9L300.4 216.7L301.4 218.5L302.6 220.3L303.8 222.1L305.1 223.9L306.5 225.8L308 227.7L309.5 229.5L311 231.4L312.6 233.3L314.1 235.1L315.7 237L317.4 238.8L319 240.7L320.7 242.6L322.5 244.4L324.2 246.2L325.9 248L327.6 249.8L329.3 251.7L331 253.5L332.7 255.3L334.3 257.2L336 259.1L337.7 261.1L339.4 263L341.1 265.1L342.9 267.2L344.7 269.3L346.6 271.4L348.6 273.7L350.6 275.8L352.5 277.9L354.2 279.9L355.9 281.9L357.8 284L359.8 286.2L362 288.6L364.5 291.1L367.4 293.8L370.7 296.8L374.3 300L378.5 303.5L383.2 307.3L388.3 311.5L393.8 315.9L399.6 320.4L405.4 325L411.4 329.5L417.2 333.8L423 337.8L428.6 341.6L434.1 345L439.6 348.3L445.1 351.3L450.5 354.1L455.7 356.7L460.6 359.1L465.1 361.3L469.3 363.3L473 365.1L476.1 366.8L479 368.3L481.6 369.8L484 371.1L486.1 372.3L488 373.4L489.7 374.4L491.2 375.3L492.6 376.1L494 376.9L495.1 377.5L513.3 345.3L512.3 344.7L511.2 344.1L509.8 343.3L508.1 342.4L506.3 341.3L504.1 340.1L501.7 338.8L498.9 337.3L495.9 335.8L492.4 334.1L488.5 332.3L484.3 330.4L479.8 328.6L475.1 326.6L470.3 324.6L465.4 322.5L460.5 320.3L455.5 318L450.7 315.5L445.9 312.9L440.9 310L435.5 306.6L429.8 303L423.9 299.1L417.9 295.1L412.1 291.1L406.5 287.2L401.2 283.5L396.4 280.1L392.1 277L388.5 274.5L385.4 272.2L382.7 270.2L380.4 268.3L378.2 266.6L376.2 264.9L374.3 263.2L372.2 261.5L370.1 259.6L367.9 257.7L365.7 255.9L363.6 254.1L361.5 252.3L359.5 250.6L357.5 248.8L355.6 247.1L353.6 245.3L351.7 243.6L349.8 241.8L347.8 240L345.8 238.3L343.9 236.6L342 234.9L340.1 233.2L338.2 231.6L336.4 230L334.7 228.4L333 226.9L331.4 225.3L329.8 223.8L328.3 222.2L326.7 220.6L325.1 218.9L323.6 217.3L322.2 215.7L320.8 214.1L319.5 212.6L318.3 211.1L317.1 209.7L316.1 208.4L315.2 207.2L314.4 206.1L313.6 205L312.9 204L312.2 202.9L311.6 201.9L311 200.8L310.5 199.8L309.9 198.7L309.5 197.7L309.1 196.9L308.7 196L308.4 195.1L308.1 194.2L307.8 193.2L307.6 192.3L307.4 191.4L307.2 190.5L307 189.7L306.8 189Z" fill="#40406e"/><path d="M294.6 191.1L294.6 191.6L294.6 192.2L294.7 193.1L294.7 194.1L294.8 195.3L294.9 196.6L295 198L295.2 199.4L295.6 201L295.9 202.5L296.3 203.8L296.6 205.2L297 206.5L297.5 208L298 209.5L298.6 211.1L299.3 212.8L300.1 214.5L301 216.2L302.1 218L303.2 219.8L304.4 221.6L305.7 223.4L307.1 225.3L308.6 227.1L310.1 229L311.6 230.8L313.2 232.7L314.8 234.5L316.3 236.4L318 238.2L319.7 240.1L321.4 241.9L323.1 243.8L324.8 245.6L326.5 247.4L328.3 249.2L330 251L331.7 252.8L333.3 254.6L335 256.5L336.7 258.4L338.4 260.4L340.1 262.3L341.8 264.4L343.6 266.4L345.5 268.5L347.4 270.7L349.4 272.9L351.4 275.1L353.3 277.1L355 279.1L356.7 281.1L358.6 283.1L360.6 285.3L362.8 287.7L365.3 290.2L368.2 292.9L371.4 295.8L375.1 299L379.3 302.4L384 306.3L389.1 310.4L394.6 314.8L400.4 319.3L406.3 323.9L412.2 328.3L418.1 332.6L423.8 336.6L429.3 340.3L434.8 343.7L440.3 346.9L445.8 349.9L451.1 352.7L456.3 355.2L461.2 357.6L465.8 359.8L470 361.8L473.6 363.7L476.8 365.3L479.7 366.9L482.4 368.4L484.8 369.7L486.9 370.9L488.8 372L490.5 373L492 373.9L493.4 374.7L494.8 375.5L495.9 376.1L514.1 343.9L513.1 343.3L512 342.7L510.6 341.9L509 341L507.1 339.9L504.9 338.7L502.4 337.4L499.7 335.9L496.6 334.4L493.2 332.7L489.2 330.9L484.9 329L480.4 327.1L475.8 325.2L471 323.2L466.1 321.1L461.1 318.9L456.2 316.6L451.4 314.2L446.7 311.7L441.7 308.8L436.3 305.5L430.6 301.8L424.7 297.9L418.8 294L412.9 290L407.3 286.1L402 282.4L397.1 279L392.9 276L389.3 273.5L386.2 271.2L383.5 269.2L381.2 267.4L379.1 265.7L377 264.1L375.1 262.4L373 260.7L370.9 258.8L368.6 256.9L366.4 255.1L364.3 253.3L362.3 251.6L360.3 249.8L358.3 248.1L356.3 246.4L354.4 244.6L352.4 242.9L350.4 241.1L348.5 239.4L346.5 237.6L344.5 235.9L342.6 234.2L340.7 232.6L338.9 231L337.1 229.4L335.3 227.8L333.6 226.3L332 224.7L330.5 223.2L328.9 221.6L327.3 220L325.8 218.4L324.3 216.8L322.8 215.2L321.4 213.6L320.1 212.1L318.9 210.6L317.8 209.2L316.7 208L315.8 206.8L315 205.7L314.3 204.7L313.6 203.6L312.9 202.6L312.3 201.6L311.7 200.6L311.1 199.5L310.6 198.5L310.1 197.5L309.7 196.7L309.3 195.9L309 195L308.7 194L308.4 193.1L308.2 192.2L308 191.3L307.8 190.4L307.6 189.6L307.4 188.9Z" fill="#66666c"/><path d="M295.9 190.9L296 191.4L296 192L296 192.9L296.1 193.9L296.2 195L296.3 196.3L296.5 197.6L296.7 199.1L297 200.5L297.4 202L297.8 203.3L298.1 204.6L298.6 205.9L299 207.3L299.6 208.8L300.2 210.4L300.9 211.9L301.7 213.6L302.6 215.3L303.6 217L304.7 218.7L305.9 220.5L307.2 222.3L308.6 224.1L310.1 225.9L311.6 227.7L313.1 229.5L314.7 231.4L316.2 233.2L317.8 235L319.4 236.8L321.1 238.7L322.8 240.5L324.5 242.3L326.3 244.1L328 245.8L329.7 247.6L331.5 249.4L333.2 251.2L334.9 253.1L336.6 254.9L338.3 256.8L340 258.7L341.8 260.7L343.5 262.7L345.3 264.7L347.2 266.8L349.1 268.9L351.1 271L353.2 273.2L355.1 275.2L356.9 277.1L358.6 279.1L360.5 281.2L362.5 283.3L364.7 285.6L367.2 288L370.1 290.6L373.3 293.5L377 296.6L381.1 300L385.9 303.8L391 307.9L396.5 312.2L402.3 316.7L408.2 321.2L414.1 325.5L419.9 329.8L425.6 333.7L431.1 337.3L436.5 340.7L442 343.8L447.4 346.7L452.7 349.4L457.8 351.9L462.7 354.3L467.3 356.4L471.5 358.4L475.3 360.2L478.5 361.9L481.5 363.5L484.2 365L486.6 366.3L488.8 367.6L490.7 368.7L492.4 369.6L494 370.5L495.4 371.4L496.7 372.1L497.8 372.8L513.8 344.4L512.8 343.8L511.7 343.2L510.3 342.4L508.7 341.5L506.8 340.4L504.6 339.2L502.2 337.9L499.4 336.4L496.4 334.9L492.9 333.2L489 331.4L484.7 329.5L480.2 327.6L475.5 325.7L470.7 323.7L465.8 321.6L460.9 319.4L456 317.1L451.1 314.7L446.4 312.1L441.4 309.2L436 305.9L430.3 302.2L424.4 298.4L418.5 294.4L412.6 290.4L407 286.5L401.7 282.8L396.9 279.4L392.6 276.4L389 273.8L385.9 271.6L383.2 269.6L380.9 267.8L378.8 266L376.7 264.4L374.8 262.7L372.7 261L370.6 259.1L368.3 257.2L366.1 255.4L364 253.6L362 251.9L360 250.1L358 248.4L356 246.6L354.1 244.9L352.1 243.1L350.2 241.4L348.2 239.6L346.2 237.8L344.3 236.1L342.4 234.4L340.5 232.8L338.6 231.2L336.8 229.6L335.1 228L333.4 226.5L331.8 225L330.2 223.4L328.7 221.8L327.1 220.2L325.5 218.6L324 217L322.6 215.3L321.2 213.8L319.9 212.2L318.7 210.8L317.5 209.4L316.5 208.1L315.6 207L314.8 205.9L314 204.8L313.3 203.7L312.7 202.7L312 201.7L311.4 200.7L310.9 199.6L310.3 198.6L309.9 197.6L309.4 196.8L309.1 195.9L308.8 195L308.5 194.1L308.2 193.1L308 192.2L307.8 191.3L307.6 190.5L307.4 189.6L307.2 188.9Z" fill="#838388"/><path d="M297.3 190.6L297.4 191.2L297.4 191.8L297.5 192.7L297.6 193.7L297.7 194.8L297.8 196L298 197.3L298.3 198.7L298.6 200.1L299 201.4L299.3 202.7L299.7 204L300.2 205.3L300.6 206.6L301.2 208.1L301.8 209.5L302.5 211.1L303.3 212.6L304.2 214.2L305.2 215.9L306.3 217.5L307.5 219.3L308.8 221L310.2 222.8L311.6 224.6L313.1 226.4L314.7 228.2L316.2 230L317.8 231.8L319.4 233.6L321 235.4L322.6 237.1L324.3 238.9L326.1 240.7L327.8 242.4L329.6 244.2L331.3 246L333.1 247.8L334.8 249.6L336.6 251.4L338.3 253.2L340 255.1L341.8 257L343.5 258.9L345.3 260.9L347.2 262.9L349.1 264.9L351 267L353 269.1L355.1 271.2L357 273.2L358.8 275.1L360.7 277.1L362.5 279.1L364.5 281.1L366.8 283.3L369.2 285.7L372 288.3L375.3 291L378.9 294.1L383.1 297.4L387.8 301.2L393 305.2L398.5 309.5L404.3 313.9L410.2 318.3L416.1 322.6L422 326.8L427.6 330.7L433 334.2L438.4 337.4L443.7 340.5L449.1 343.3L454.3 345.9L459.4 348.4L464.3 350.7L468.9 352.8L473.2 354.8L477 356.6L480.3 358.3L483.3 359.9L486.1 361.4L488.6 362.8L490.8 364L492.7 365.1L494.5 366.1L496 367L497.4 367.8L498.7 368.6L499.8 369.2L513.2 345.4L512.2 344.8L511.1 344.2L509.7 343.4L508.1 342.4L506.2 341.4L504.1 340.2L501.6 338.8L498.9 337.4L495.9 335.9L492.4 334.2L488.5 332.4L484.2 330.5L479.7 328.6L475.1 326.7L470.3 324.7L465.4 322.6L460.4 320.3L455.5 318L450.6 315.6L445.9 313L440.9 310.1L435.4 306.7L429.7 303L423.8 299.1L417.9 295.1L412.1 291.2L406.5 287.2L401.2 283.5L396.3 280.1L392.1 277.1L388.5 274.5L385.4 272.2L382.7 270.2L380.3 268.4L378.2 266.6L376.2 264.9L374.2 263.3L372.2 261.5L370.1 259.7L367.8 257.8L365.6 255.9L363.5 254.1L361.5 252.4L359.5 250.6L357.5 248.8L355.6 247.1L353.6 245.3L351.7 243.6L349.7 241.8L347.8 240.1L345.8 238.3L343.8 236.6L341.9 234.9L340 233.2L338.2 231.6L336.4 230L334.7 228.5L333 226.9L331.4 225.4L329.8 223.8L328.2 222.2L326.7 220.6L325.1 219L323.6 217.3L322.2 215.7L320.8 214.1L319.5 212.6L318.2 211.1L317.1 209.7L316.1 208.4L315.2 207.3L314.3 206.1L313.6 205L312.9 204L312.2 202.9L311.6 201.9L311 200.8L310.5 199.8L309.9 198.7L309.4 197.8L309 196.9L308.7 196L308.4 195.1L308.1 194.2L307.8 193.2L307.6 192.3L307.4 191.4L307.2 190.5L307 189.7L306.8 189Z" fill="#9a9a9e"/><path d="M299.5 190.3L299.6 190.8L299.7 191.5L299.8 192.4L299.9 193.4L300 194.4L300.2 195.6L300.4 196.8L300.7 198.1L301 199.3L301.4 200.6L301.8 201.8L302.2 203L302.7 204.3L303.2 205.5L303.7 206.9L304.3 208.3L305 209.7L305.8 211.1L306.7 212.6L307.7 214.2L308.8 215.8L310 217.4L311.3 219.1L312.6 220.8L314.1 222.5L315.5 224.3L317.1 226.1L318.6 227.8L320.2 229.6L321.8 231.3L323.4 233.1L325 234.8L326.7 236.5L328.4 238.2L330.2 240L332 241.7L333.8 243.4L335.6 245.2L337.4 247L339.1 248.8L340.9 250.6L342.7 252.4L344.5 254.3L346.3 256.2L348.1 258.1L350 260.1L351.9 262L353.9 264L355.9 266.1L358 268.1L360 270.1L361.9 272L363.8 273.9L365.7 275.8L367.7 277.8L369.9 279.9L372.3 282.2L375.1 284.6L378.3 287.2L381.9 290.2L386.1 293.4L390.9 297.1L396.1 301.1L401.7 305.3L407.4 309.6L413.3 313.9L419.2 318.1L425.1 322.2L430.7 325.9L436 329.3L441.2 332.4L446.4 335.3L451.7 338L456.9 340.6L461.9 342.9L466.8 345.2L471.4 347.3L475.7 349.2L479.6 351.1L483.1 352.8L486.2 354.4L489 355.9L491.6 357.3L493.8 358.5L495.8 359.7L497.6 360.7L499.2 361.6L500.6 362.4L501.8 363.1L502.9 363.7L512.3 347L511.3 346.4L510.2 345.8L508.8 345L507.2 344L505.3 343L503.2 341.8L500.7 340.5L498 339L495 337.5L491.6 335.8L487.7 334L483.5 332.1L479 330.3L474.4 328.3L469.5 326.3L464.6 324.1L459.7 321.9L454.7 319.5L449.8 317.1L445 314.4L440 311.5L434.5 308.1L428.8 304.4L422.9 300.4L417 296.4L411.2 292.4L405.6 288.5L400.3 284.7L395.4 281.3L391.2 278.2L387.6 275.6L384.5 273.3L381.8 271.3L379.4 269.4L377.3 267.6L375.3 265.9L373.3 264.2L371.3 262.4L369.2 260.6L367 258.7L364.8 256.8L362.7 255L360.7 253.2L358.7 251.4L356.7 249.7L354.7 247.9L352.8 246.1L350.9 244.4L349 242.6L347 240.8L345.1 239.1L343.1 237.3L341.2 235.6L339.3 234L337.5 232.4L335.7 230.7L334 229.2L332.3 227.6L330.7 226L329.1 224.5L327.5 222.9L326 221.2L324.4 219.6L322.9 217.9L321.5 216.3L320.1 214.7L318.7 213.2L317.5 211.7L316.4 210.3L315.3 208.9L314.4 207.7L313.6 206.6L312.8 205.4L312.1 204.3L311.5 203.3L310.9 202.2L310.3 201.1L309.7 200.1L309.2 199L308.7 198L308.3 197.1L308 196.2L307.7 195.3L307.4 194.3L307.1 193.3L306.9 192.4L306.7 191.5L306.5 190.6L306.3 189.8L306.2 189.1Z" fill="#a8a8ac"/><path d="M301.6 189.9L301.7 190.5L301.9 191.2L302 192.1L302.1 193L302.3 194.1L302.5 195.2L302.7 196.3L303 197.5L303.3 198.6L303.7 199.8L304.1 200.9L304.6 202.1L305.1 203.3L305.6 204.5L306.2 205.7L306.8 207L307.5 208.3L308.3 209.7L309.2 211.1L310.1 212.5L311.2 214L312.4 215.6L313.6 217.2L315 218.8L316.4 220.5L317.9 222.3L319.4 224L321 225.7L322.5 227.4L324.1 229.1L325.7 230.8L327.3 232.5L329 234.2L330.8 235.8L332.5 237.5L334.3 239.2L336.1 240.9L338 242.7L339.8 244.4L341.7 246.2L343.5 248L345.3 249.9L347.2 251.7L349 253.6L350.9 255.4L352.8 257.3L354.7 259.2L356.7 261.1L358.7 263.1L360.9 265.1L362.9 267.1L364.9 268.9L366.8 270.8L368.7 272.7L370.7 274.6L372.9 276.5L375.4 278.7L378.1 281L381.3 283.5L384.9 286.4L389.1 289.6L393.9 293.2L399.1 297.1L404.7 301.2L410.5 305.4L416.4 309.6L422.3 313.7L428.1 317.7L433.6 321.3L438.9 324.6L443.9 327.5L449.1 330.3L454.2 332.9L459.3 335.3L464.4 337.6L469.2 339.8L473.8 341.8L478.2 343.8L482.2 345.6L485.8 347.4L489 349L491.9 350.5L494.5 351.9L496.8 353.2L498.8 354.3L500.7 355.4L502.2 356.3L503.6 357.1L504.8 357.8L505.9 358.4L511.3 348.7L510.3 348.2L509.2 347.5L507.8 346.7L506.2 345.8L504.3 344.7L502.2 343.5L499.8 342.2L497.1 340.8L494.1 339.3L490.7 337.6L486.9 335.8L482.7 333.9L478.2 332L473.6 330.1L468.8 328L463.8 325.8L458.8 323.6L453.8 321.2L448.9 318.6L444.1 316L439 313L433.5 309.5L427.8 305.8L421.9 301.8L416 297.8L410.2 293.7L404.6 289.8L399.3 286L394.5 282.5L390.2 279.5L386.6 276.8L383.5 274.5L380.8 272.4L378.4 270.5L376.3 268.7L374.3 266.9L372.3 265.2L370.3 263.4L368.2 261.6L366 259.7L363.8 257.8L361.8 255.9L359.7 254.1L357.8 252.3L355.8 250.5L353.9 248.8L352 247L350 245.2L348.1 243.4L346.2 241.6L344.3 239.9L342.3 238.2L340.4 236.5L338.6 234.8L336.7 233.1L335 231.5L333.2 229.9L331.5 228.3L329.9 226.8L328.3 225.2L326.8 223.6L325.2 221.9L323.7 220.3L322.1 218.6L320.7 216.9L319.3 215.3L318 213.8L316.7 212.3L315.6 210.8L314.5 209.5L313.6 208.2L312.8 207L312 205.9L311.3 204.8L310.7 203.6L310.1 202.6L309.5 201.5L308.9 200.4L308.4 199.3L308 198.3L307.6 197.3L307.2 196.4L306.9 195.4L306.6 194.4L306.4 193.4L306.2 192.5L306 191.5L305.8 190.7L305.6 189.9L305.5 189.2Z" fill="#b6b6b9"/><circle cx="301" cy="190" r="6.5" fill="#66666c"/><circle cx="301.6" cy="189.9" r="5.7" fill="#838388"/><circle cx="302.1" cy="189.8" r="4.8" fill="#9a9a9e"/><circle cx="302.8" cy="189.6" r="3.4" fill="#a8a8ac"/>
</g>
<rect x="3" y="127" width="250" height="220" fill="url(#lv)"/>
</svg>
    <div id="h1" class="abs nw"><span style="letter-spacing:-.67px">Powering a global</span><br>infrastructure revolution</div>
    <div id="sub" class="abs nw">Build DePINs for mobility,<br>connectivity, energy, and more.</div>
    <div id="hbtn" class="abs nw">Start Building</div>
  </div>
  <div id="trusted" class="abs nw">Trusted by</div>
  <div class="abs div" style="left:128px"></div>
  <div class="abs div" style="left:210.6px"></div>
  <div class="abs div" style="left:293.2px"></div>
  <div class="abs div" style="left:376.2px"></div>
  <div class="abs div" style="left:459.6px"></div>
  <svg class="abs" style="left:130px;top:272px" width="360" height="12" viewBox="130 272 360 12"><circle cx="135.8" cy="277.7" r="1.8" fill="none" stroke="#222" stroke-width=".55"/><path d="M135.2 276.600v2.200M136.4 276.600v2.200M135.2 277.700h1.2" stroke="#222" stroke-width=".4"/><circle cx="219.6" cy="277.7" r="2.7" fill="#111"/><circle cx="223.3" cy="277.7" r="2.7" fill="#111"/><path d="M221.450 275.750a2.7 2.7 0 0 1 0 3.900a2.7 2.7 0 0 1 0-3.900z" fill="#555"/><circle cx="468.3" cy="278" r="3" fill="none" stroke="#111" stroke-width=".8"/><path d="M466.9 277.100c.5-.9 2.300-.9 2.8 0 .3.700-.4 1.500-1.4 2.200-1-.7-1.700-1.500-1.400-2.200z" fill="#111"/></svg>
  <div class="abs brand nw" style="left:139.8px;transform:scaleX(.93);transform-origin:0 0;font-size:5.6px;letter-spacing:.1px">BOSCH</div>
  <div class="abs brand nw" style="left:227.8px;font-weight:normal;font-size:4.5px;color:#222;transform:scaleX(.95);transform-origin:0 0">mastercard</div>
  <div class="abs brand nw" style="left:299.3px;font-size:5.8px;letter-spacing:-.15px">AIRBUS</div>
  <div class="abs brand nw" style="left:382.2px;font-family:'Liberation Serif',serif;font-size:5.9px;letter-spacing:-.1px">Continental</div>
  <div class="abs brand nw" style="left:474px;top:275.2px;font-size:4.6px;font-family:'Liberation Serif',serif">NTT</div>
  <div id="sb" class="abs"></div>
</div>
<!-- RIGHT -->
<div id="bubble" class="abs">
  <div id="btxt" class="abs nw">Help me building a website like this. Give me the code. Thanks</div>
  <div id="thumb" class="abs"><svg class="abs" style="left:0;top:0" width="35.2" height="35.2" viewBox="0 0 35.2 35.2"><rect width="35.2" height="35.2" fill="#fff"/><rect x="0" y="0" width="35.2" height="1.9" fill="#2a2d30"/><rect x="0" y="5.1" width="35.2" height="26.6" fill="#101013"/><g stroke-linecap="round" fill="none"><path d="M0 9.4H35.2" stroke="#44444a" stroke-width="2.2" stroke-dasharray="2.3 .9"/><path d="M0 19.6H35.2" stroke="#3c3c42" stroke-width="2.4" stroke-dasharray="2.6 1.1"/><path d="M0 29.6H35.2" stroke="#3c3c42" stroke-width="2.4" stroke-dasharray="2.8 1.2"/><path d="M2.6 11Q2.1 17 -1 13.5" stroke="#55555b" stroke-width="1.2"/><path d="M5.8 11Q5.3 17 -1 16.6" stroke="#55555b" stroke-width="1.4"/><path d="M9 11Q8.5 17 -1 20" stroke="#55555b" stroke-width="1.7"/><path d="M12.4 11Q11.9 17 -1 25.8" stroke="#55555b" stroke-width="2.1"/><path d="M15.6 11Q15.1 17 3 32.5" stroke="#55555b" stroke-width="2.5"/><path d="M32.4 11Q32.9 17 36 13.5" stroke="#a4a4a8" stroke-width="1.3"/><path d="M29.1 11Q29.6 17 36 16" stroke="#a4a4a8" stroke-width="1.6"/><path d="M25.9 11Q26.4 17 36 20" stroke="#a4a4a8" stroke-width="2"/><path d="M22.7 11Q23.2 17 36 26" stroke="#a4a4a8" stroke-width="2.4"/><path d="M19.5 11Q20 17 32 32.5" stroke="#a4a4a8" stroke-width="2.9"/><path d="M10 22L3 32.5" stroke="#55555b" stroke-width="1.3"/><path d="M13.7 22L10.6 32.5" stroke="#55555b" stroke-width="1.3"/><path d="M16.4 22L15.3 32.5" stroke="#5c5c62" stroke-width="1.3"/><path d="M19.5 22L20.6 32.5" stroke="#9a9a9e" stroke-width="1.3"/><path d="M22.6 22L25 32.5" stroke="#a4a4a8" stroke-width="1.3"/><path d="M28.6 22L34 32.5" stroke="#a4a4a8" stroke-width="1.4"/></g><circle cx="4.3" cy="9.4" r=".55" fill="#5a55ff"/><circle cx="7.1" cy="9.4" r=".55" fill="#5a55ff"/><circle cx="9.9" cy="9.4" r=".55" fill="#5a55ff"/><circle cx="15.5" cy="9.4" r=".55" fill="#5a55ff"/><circle cx="21.1" cy="9.4" r=".55" fill="#5a55ff"/><circle cx="23.9" cy="9.4" r=".55" fill="#5a55ff"/><circle cx="26.7" cy="9.4" r=".55" fill="#5a55ff"/><circle cx="29.5" cy="9.4" r=".55" fill="#5a55ff"/><circle cx="32.4" cy="9.4" r=".55" fill="#5a55ff"/><circle cx="15.6" cy="19.4" r=".5" fill="#5a55ff"/><circle cx="23.7" cy="19.4" r=".5" fill="#5a55ff"/><circle cx="34.6" cy="19.4" r=".5" fill="#5a55ff"/><circle cx="10.4" cy="19.4" r=".5" fill="#5a55ff"/><circle cx="20.9" cy="19.4" r=".5" fill="#5a55ff"/><rect x="0" y="31.7" width="35.2" height="3.5" fill="#fff"/><rect x="0" y="1.9" width="35.2" height="3.2" fill="#fff"/><circle cx="10.6" cy="33.2" r=".5" fill="#444"/><circle cx="21.8" cy="33.2" r=".5" fill="#444"/></svg></div>
</div>
<svg class="abs" style="left:557px;top:82px" width="14" height="14" viewBox="-7 -7 14 14"><circle r="6" fill="#fbfbfb" stroke="#e9e9e9" stroke-width=".8"/><g fill="none" stroke="#444" stroke-width=".8"><ellipse rx="2.1" ry="4.1"/><ellipse rx="2.1" ry="4.1" transform="rotate(60)"/><ellipse rx="2.1" ry="4.1" transform="rotate(120)"/></g></svg>
<div id="gpt" class="abs nw">GPT-4o</div>
<div id="poe" class="abs nw">Poe</div>
<div id="panel" class="abs">
  <div id="resp" class="abs nw"><div style="transform:scaleX(.889);transform-origin:0 0">To create a website similar to the one you've shown, you can use HTML, CSS, and JavaScript.</div><div style="transform:scaleX(.9017);transform-origin:0 0">Below is a basic example of how you can structure and style a website to achieve a similar</div><div style="transform:scaleX(.908);transform-origin:0 0">look. For simplicity, this example will use a static image instead of a video.</div></div>
  <div id="h3" class="abs nw">HTML (index.html)</div>
  <div id="code" class="abs">
    <div id="chead" class="abs"><div id="lang" class="abs nw">html</div><svg class="abs" style="left:380.5px;top:7px" width="10" height="10" viewBox="0 0 10 10" fill="none" stroke="#fff" stroke-width="1"><path d="M3.4 2.6V1.6a.9.9 0 0 1 .9-.9h2.4l2.2 2.2v3.4a.9.9 0 0 1-.9.9H7"/><rect x="1" y="2.8" width="5.6" height="6.4" rx="1"/><path d="M3.2 5.2l1.6 1.3-1.6 1.2z" fill="#fff" stroke="none"/></svg><div id="copy" class="abs nw">Copy</div></div>
    <div id="pre" class="abs">&lt;!DOCTYPE html&gt;
&lt;html lang="en"&gt;
&lt;head&gt;
    &lt;meta charset="UTF-8"&gt;
    &lt;meta name="viewport" content="width=device-width, initial-scale=1.0"&gt;
    &lt;title&gt;Infrastructure Revolution&lt;/title&gt;
    &lt;link rel="stylesheet" href="styles.css"&gt;
&lt;/head&gt;
&lt;body&gt;
    &lt;header&gt;
        &lt;nav&gt;
            &lt;div class="logo"&gt;peaq&lt;/div&gt;
            &lt;ul class="nav-links"&gt;
                &lt;li&gt;&lt;a href="#"&gt;Learn&lt;/a&gt;&lt;/li&gt;
                &lt;li&gt;&lt;a href="#"&gt;Build&lt;/a&gt;&lt;/li&gt;
                &lt;li&gt;&lt;a href="#"&gt;Community&lt;/a&gt;&lt;/li&gt;
            &lt;/ul&gt;
            &lt;a href="#" class="cta"&gt;Start Building&lt;/a&gt;
        &lt;/nav&gt;
    &lt;/header&gt;
    &lt;main&gt;</div>
  </div>
</div>
<svg class="abs" style="left:686px;top:386px" width="44" height="38" viewBox="686 386 44 38"><g fill="#fff" fill-opacity=".55"><path d="M702.1 390.1c-7.3 0-13.2 4.9-13.2 11 0 3.4 1.9 6.5 4.8 8.5l-1.3 3.7 4.5-2.2c1.500 .5 3 .8 4.600 .9a10 8.600 0 0 1-.3-2.100c0-5.400 5.500-9.800 12.400-10.200-1.600-5.500-6.100-9.600-11.500-9.600zM697.600 396.200a1.700 1.700 0 1 1 0 3.400 1.700 1.700 0 0 1 0-3.400zM706.600 396.200a1.700 1.700 0 1 1 0 3.400 1.700 1.700 0 0 1 0-3.400z" fill-rule="evenodd"/><path d="M714.800 400.800c-6.200 0-11.300 4-11.300 9s5.100 9 11.300 9c1.300 0 2.600-.2 3.800-.5l3.600 1.900-1-3.200c3-1.600 4.900-4.200 4.900-7.200 0-5-5.100-9-11.300-9zM711 405.300a1.300 1.300 0 1 1 0 2.600 1.300 1.300 0 0 1 0-2.600zM718.600 405.300a1.300 1.300 0 1 1 0 2.600 1.300 1.300 0 0 1 0-2.600z" fill-rule="evenodd"/></g></svg>
<div id="wm" class="abs nw">公众号 · KK安全说</div>
</body>
</html>
